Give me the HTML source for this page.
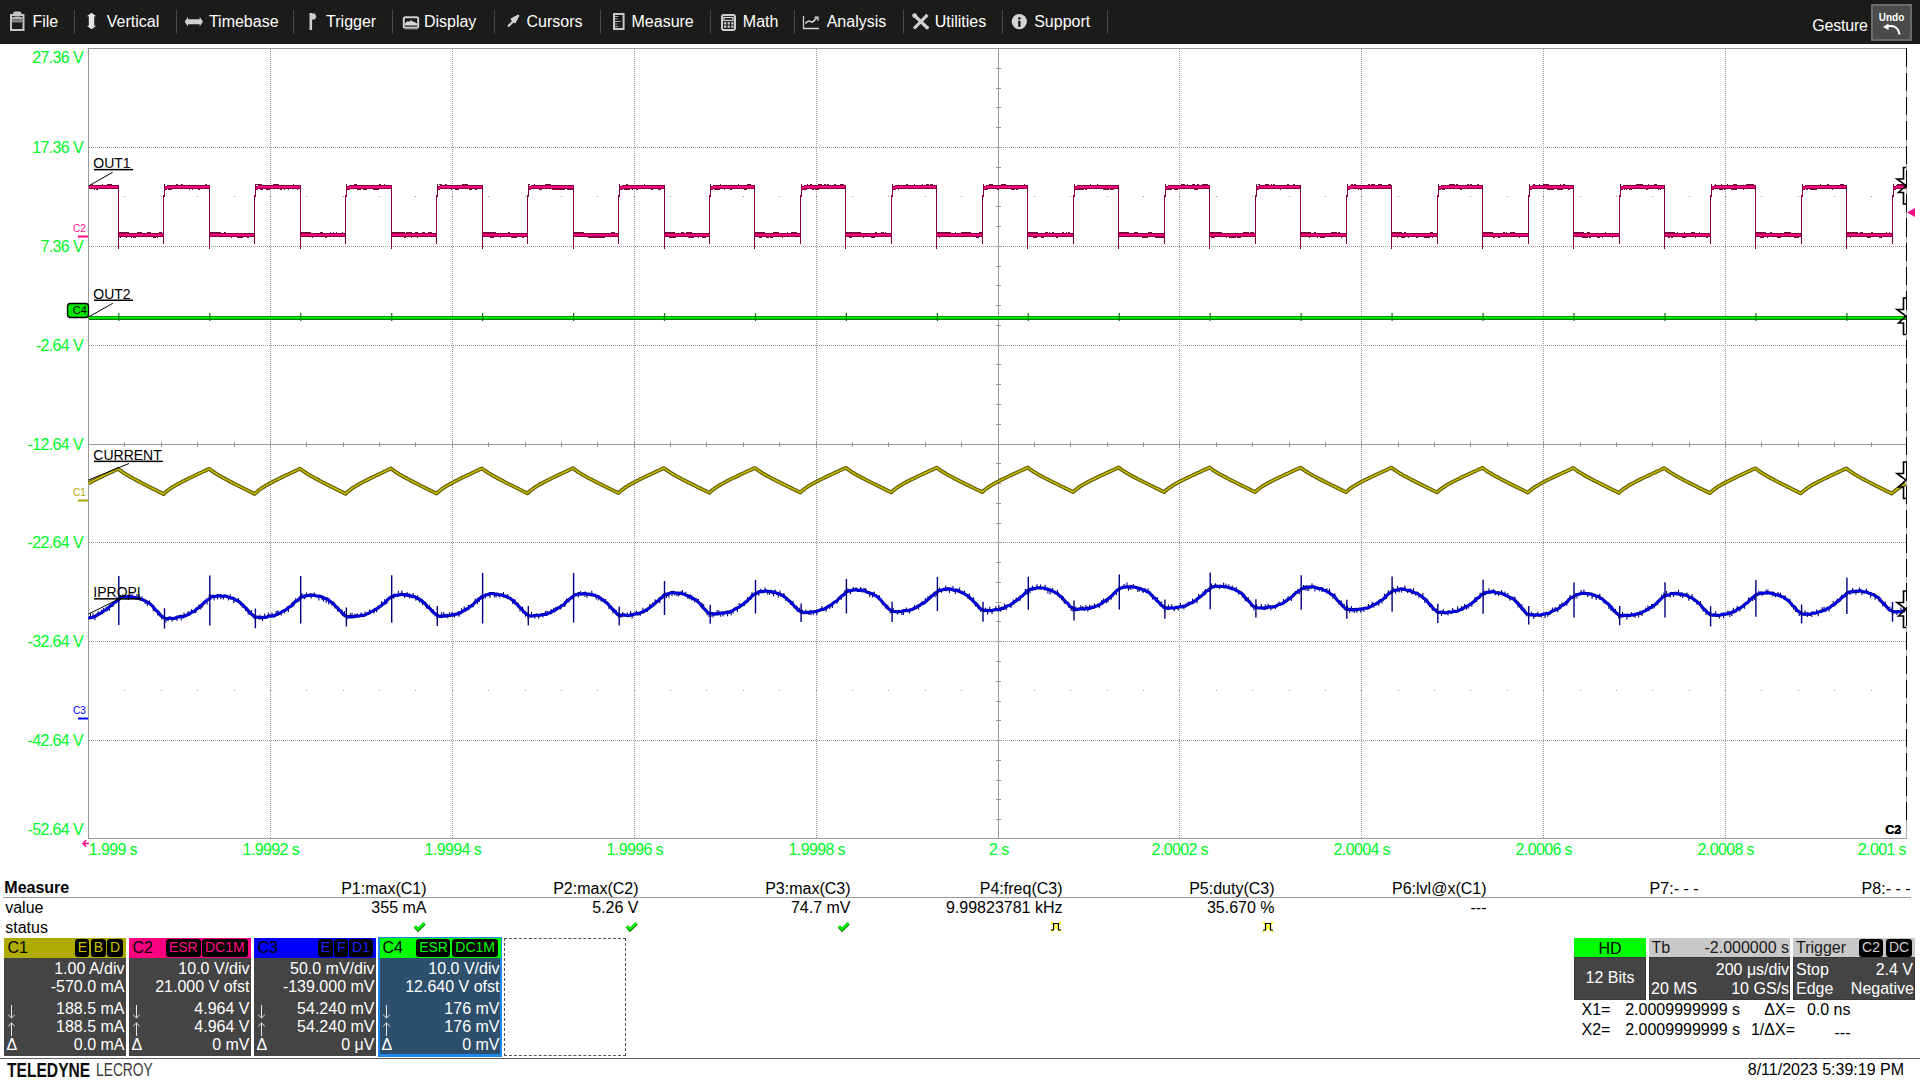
<!DOCTYPE html>
<html><head><meta charset="utf-8"><style>
html,body{margin:0;padding:0;}
body{width:1920px;height:1080px;position:relative;overflow:hidden;background:#fff;font-family:"Liberation Sans", sans-serif;}
.t{position:absolute;white-space:pre;line-height:1;}
svg{position:absolute;left:0;top:0;}
</style></head><body>
<div style="position:absolute;left:0px;top:0px;width:1920px;height:43px;background:#1b1b19;"></div>
<div style="position:absolute;left:0px;top:43px;width:1920px;height:1px;background:#0b1622;"></div>
<div style="position:absolute;left:74px;top:10px;width:1px;height:24px;background:#474747;"></div>
<div style="position:absolute;left:176px;top:10px;width:1px;height:24px;background:#474747;"></div>
<div style="position:absolute;left:293px;top:10px;width:1px;height:24px;background:#474747;"></div>
<div style="position:absolute;left:392px;top:10px;width:1px;height:24px;background:#474747;"></div>
<div style="position:absolute;left:494px;top:10px;width:1px;height:24px;background:#474747;"></div>
<div style="position:absolute;left:600px;top:10px;width:1px;height:24px;background:#474747;"></div>
<div style="position:absolute;left:710px;top:10px;width:1px;height:24px;background:#474747;"></div>
<div style="position:absolute;left:794px;top:10px;width:1px;height:24px;background:#474747;"></div>
<div style="position:absolute;left:903px;top:10px;width:1px;height:24px;background:#474747;"></div>
<div style="position:absolute;left:1002px;top:10px;width:1px;height:24px;background:#474747;"></div>
<div style="position:absolute;left:1107px;top:10px;width:1px;height:24px;background:#474747;"></div>
<div style="position:absolute;left:1871px;top:4px;width:41px;height:37px;background:#6b6b6b;"></div>
<div style="position:absolute;left:1873px;top:6px;width:37px;height:33px;background:#4b4b4b;"></div>
<div style="position:absolute;left:3px;top:897px;width:1908px;height:1px;background:#999999;"></div>
<div style="position:absolute;left:4px;top:938px;width:122px;height:20px;background:#b0ab00;"></div>
<div style="position:absolute;left:4px;top:958px;width:122px;height:98px;background:#444444;"></div>
<div style="position:absolute;left:75px;top:939px;width:14px;height:18px;background:#000;border-radius:3px;"></div>
<div style="position:absolute;left:91px;top:939px;width:15px;height:18px;background:#000;border-radius:3px;"></div>
<div style="position:absolute;left:107px;top:939px;width:16px;height:18px;background:#000;border-radius:3px;"></div>
<div style="position:absolute;left:129px;top:938px;width:122px;height:20px;background:#ff0080;"></div>
<div style="position:absolute;left:129px;top:958px;width:122px;height:98px;background:#444444;"></div>
<div style="position:absolute;left:166px;top:939px;width:35px;height:18px;background:#000;border-radius:3px;"></div>
<div style="position:absolute;left:202px;top:939px;width:46px;height:18px;background:#000;border-radius:3px;"></div>
<div style="position:absolute;left:254px;top:938px;width:122px;height:20px;background:#0000ff;"></div>
<div style="position:absolute;left:254px;top:958px;width:122px;height:98px;background:#444444;"></div>
<div style="position:absolute;left:318px;top:939px;width:15px;height:18px;background:#000;border-radius:3px;"></div>
<div style="position:absolute;left:334px;top:939px;width:14px;height:18px;background:#000;border-radius:3px;"></div>
<div style="position:absolute;left:349px;top:939px;width:24px;height:18px;background:#000;border-radius:3px;"></div>
<div style="position:absolute;left:378px;top:937px;width:124px;height:120px;background:#1e88f0;"></div>
<div style="position:absolute;left:380px;top:938px;width:121px;height:20px;background:#00ff00;"></div>
<div style="position:absolute;left:380px;top:958px;width:120px;height:96px;background:#2d4f6c;"></div>
<div style="position:absolute;left:416px;top:939px;width:34px;height:18px;background:#000;border-radius:3px;"></div>
<div style="position:absolute;left:452px;top:939px;width:46px;height:18px;background:#000;border-radius:3px;"></div>
<div style="position:absolute;left:504px;top:938px;width:122px;height:118px;background:transparent;box-sizing:border-box;border:1px dashed #555;"></div>
<div style="position:absolute;left:1574px;top:938px;width:72px;height:19px;background:#00ff00;"></div>
<div style="position:absolute;left:1574px;top:957px;width:72px;height:43px;background:#444444;box-shadow:inset 0 0 0 1px #383838;"></div>
<div style="position:absolute;left:1649px;top:938px;width:141px;height:19px;background:#c8c8c8;"></div>
<div style="position:absolute;left:1649px;top:957px;width:141px;height:43px;background:#444444;box-shadow:inset 0 0 0 1px #383838;"></div>
<div style="position:absolute;left:1793px;top:938px;width:122px;height:19px;background:#c8c8c8;"></div>
<div style="position:absolute;left:1793px;top:957px;width:122px;height:43px;background:#444444;box-shadow:inset 0 0 0 1px #383838;"></div>
<div style="position:absolute;left:1859px;top:939px;width:24px;height:18px;background:#000;border-radius:3px;"></div>
<div style="position:absolute;left:1886px;top:939px;width:26px;height:18px;background:#000;border-radius:3px;"></div>
<div style="position:absolute;left:0px;top:1058px;width:1920px;height:1px;background:#5e5e5e;"></div>
<svg width="1920" height="1080" viewBox="0 0 1920 1080">

<rect x="11" y="15" width="12.5" height="15" fill="none" stroke="#c4c4c4" stroke-width="2"/>
<rect x="13" y="11.5" width="8.5" height="5" rx="2.2" fill="#c4c4c4"/>
<rect x="12" y="17" width="10.5" height="2.5" fill="#b0b0b0"/>
<rect x="12" y="19.5" width="10.5" height="3" fill="#808080"/>
<path d="M91.5 12.8 L96.3 16.3 H94.2 V25.7 H96.3 L91.5 29.2 L86.8 25.7 H88.8 V16.3 H86.8 Z" fill="#e4e4e4"/>
<path d="M184.7 21.7 L188 16.8 V19.2 H199.7 V16.8 L203 21.7 L199.7 26.6 V24.2 H188 V26.6 Z" fill="#d0d0d0"/>
<rect x="309.5" y="13" width="2.6" height="17" fill="#d0d0d0"/>
<path d="M312 13.5 H315 L316.2 16.5 L315 19.5 H312 Z" fill="#d0d0d0"/>
<rect x="403.8" y="17.3" width="14.4" height="10.4" rx="1.5" fill="none" stroke="#d0d0d0" stroke-width="2"/>
<path d="M405 25.5 V23.5 L407 21.5 H409.5 L411 20.2 L412.5 21.5 L414.5 22 L417 23.5 V25.5 Z" fill="#d8d8d8"/>
<rect x="404" y="28.8" width="14" height="1" fill="#555"/>
<path d="M508 26.5 L513.5 21 L511.8 19.3 L518.2 15.7 L514.7 22.2 L513 20.5" fill="#d0d0d0" stroke="#d0d0d0" stroke-width="2.2" stroke-linejoin="round"/>
<rect x="614" y="14" width="9.6" height="15" fill="none" stroke="#c8c8c8" stroke-width="2"/>
<path d="M615 16.5 H618.5 M615 19 H617.5 M615 21.5 H620.5 M615 24 H617.5 M615 26.5 H618.5" stroke="#a8a8a8" stroke-width="1"/>
<rect x="722" y="15" width="13" height="15" rx="2" fill="none" stroke="#d0d0d0" stroke-width="2"/>
<rect x="724" y="17.5" width="9" height="3" fill="none" stroke="#d0d0d0" stroke-width="1.3"/>
<path d="M724 23.3 H726.3 M727.6 23.3 H729.9 M731.2 23.3 H733.5 M724 26.6 H726.3 M727.6 26.6 H729.9 M731.2 26.6 H733.5" stroke="#d0d0d0" stroke-width="2.2"/>
<path d="M803.5 16 V28.5 H819" fill="none" stroke="#d0d0d0" stroke-width="1.3"/>
<path d="M805.5 23.5 Q808 20 810.5 21.5 T815 19.5 L817.5 17.5" fill="none" stroke="#d0d0d0" stroke-width="1.6"/>
<path d="M814.5 17.2 H818 V20.7" fill="none" stroke="#d0d0d0" stroke-width="1.4"/>
<path d="M914 15 L928 28.5 M927.5 14.8 L914 28.5" stroke="#d0d0d0" stroke-width="3.2"/>
<circle cx="914.6" cy="15.6" r="2.4" fill="#d0d0d0"/>
<circle cx="927" cy="27.5" r="1.8" fill="#d0d0d0"/>
<circle cx="1019.3" cy="21.6" r="7.6" fill="#d4d4d4"/>
<rect x="1018.2" y="20.8" width="2.3" height="6" fill="#111"/>
<rect x="1018.2" y="17.3" width="2.3" height="2.2" fill="#111"/>
<path d="M1887 26.5 Q1897.5 24 1899.5 34.5" fill="none" stroke="#ffffff" stroke-width="2"/>
<path d="M1883 27 L1888.5 23.5 L1888.5 30 Z" fill="#ffffff"/>

<g shape-rendering="crispEdges"><rect x="88" y="48" width="1818" height="1" fill="#999999"/><rect x="88" y="838" width="1819" height="1" fill="#999999"/><rect x="88" y="48" width="1" height="791" fill="#999999"/><rect x="1906" y="48" width="1" height="791" fill="#aaaaaa"/><path d="M1906.5 48.3 V822" stroke="#000" stroke-width="1" stroke-dasharray="18.3 6"/><path d="M270.5 49 V838" stroke="#999999" stroke-width="1" stroke-dasharray="1 1"/><path d="M452.5 49 V838" stroke="#999999" stroke-width="1" stroke-dasharray="1 1"/><path d="M634.5 49 V838" stroke="#999999" stroke-width="1" stroke-dasharray="1 1"/><path d="M816.5 49 V838" stroke="#999999" stroke-width="1" stroke-dasharray="1 1"/><rect x="998" y="48" width="1" height="790" fill="#999999"/><path d="M1179.5 49 V838" stroke="#999999" stroke-width="1" stroke-dasharray="1 1"/><path d="M1361.5 49 V838" stroke="#999999" stroke-width="1" stroke-dasharray="1 1"/><path d="M1543.5 49 V838" stroke="#999999" stroke-width="1" stroke-dasharray="1 1"/><path d="M1725.5 49 V838" stroke="#999999" stroke-width="1" stroke-dasharray="1 1"/><path d="M89 147.5 H1906" stroke="#999999" stroke-width="1" stroke-dasharray="1 1"/><path d="M89 246.5 H1906" stroke="#999999" stroke-width="1" stroke-dasharray="1 1"/><path d="M89 345.5 H1906" stroke="#999999" stroke-width="1" stroke-dasharray="1 1"/><rect x="88" y="444" width="1818" height="1" fill="#999999"/><path d="M89 542.5 H1906" stroke="#999999" stroke-width="1" stroke-dasharray="1 1"/><path d="M89 641.5 H1906" stroke="#999999" stroke-width="1" stroke-dasharray="1 1"/><path d="M89 740.5 H1906" stroke="#999999" stroke-width="1" stroke-dasharray="1 1"/><path d="M124.5 442 V447 M161.5 442 V447 M197.5 442 V447 M234.5 442 V447 M270.5 442 V447 M306.5 442 V447 M343.5 442 V447 M379.5 442 V447 M415.5 442 V447 M452.5 442 V447 M488.5 442 V447 M525.5 442 V447 M561.5 442 V447 M597.5 442 V447 M634.5 442 V447 M670.5 442 V447 M706.5 442 V447 M743.5 442 V447 M779.5 442 V447 M816.5 442 V447 M852.5 442 V447 M888.5 442 V447 M925.5 442 V447 M961.5 442 V447 M998.5 442 V447 M1034.5 442 V447 M1070.5 442 V447 M1107.5 442 V447 M1143.5 442 V447 M1179.5 442 V447 M1216.5 442 V447 M1252.5 442 V447 M1289.5 442 V447 M1325.5 442 V447 M1361.5 442 V447 M1398.5 442 V447 M1434.5 442 V447 M1470.5 442 V447 M1507.5 442 V447 M1543.5 442 V447 M1580.5 442 V447 M1616.5 442 V447 M1652.5 442 V447 M1689.5 442 V447 M1725.5 442 V447 M1761.5 442 V447 M1798.5 442 V447 M1834.5 442 V447 M1871.5 442 V447 M996 68.5 H1001 M996 88.5 H1001 M996 107.5 H1001 M996 127.5 H1001 M996 147.5 H1001 M996 167.5 H1001 M996 186.5 H1001 M996 206.5 H1001 M996 226.5 H1001 M996 246.5 H1001 M996 266.5 H1001 M996 285.5 H1001 M996 305.5 H1001 M996 325.5 H1001 M996 345.5 H1001 M996 364.5 H1001 M996 384.5 H1001 M996 404.5 H1001 M996 424.5 H1001 M996 444.5 H1001 M996 463.5 H1001 M996 483.5 H1001 M996 503.5 H1001 M996 523.5 H1001 M996 542.5 H1001 M996 562.5 H1001 M996 582.5 H1001 M996 602.5 H1001 M996 621.5 H1001 M996 641.5 H1001 M996 661.5 H1001 M996 681.5 H1001 M996 701.5 H1001 M996 720.5 H1001 M996 740.5 H1001 M996 760.5 H1001 M996 780.5 H1001 M996 799.5 H1001 M996 819.5 H1001" stroke="#999999" stroke-width="1"/><path d="M124 196h1v1h-1z M161 196h1v1h-1z M197 196h1v1h-1z M234 196h1v1h-1z M270 196h1v1h-1z M306 196h1v1h-1z M343 196h1v1h-1z M379 196h1v1h-1z M415 196h1v1h-1z M452 196h1v1h-1z M488 196h1v1h-1z M525 196h1v1h-1z M561 196h1v1h-1z M597 196h1v1h-1z M634 196h1v1h-1z M670 196h1v1h-1z M706 196h1v1h-1z M743 196h1v1h-1z M779 196h1v1h-1z M816 196h1v1h-1z M852 196h1v1h-1z M888 196h1v1h-1z M925 196h1v1h-1z M961 196h1v1h-1z M998 196h1v1h-1z M1034 196h1v1h-1z M1070 196h1v1h-1z M1107 196h1v1h-1z M1143 196h1v1h-1z M1179 196h1v1h-1z M1216 196h1v1h-1z M1252 196h1v1h-1z M1289 196h1v1h-1z M1325 196h1v1h-1z M1361 196h1v1h-1z M1398 196h1v1h-1z M1434 196h1v1h-1z M1470 196h1v1h-1z M1507 196h1v1h-1z M1543 196h1v1h-1z M1580 196h1v1h-1z M1616 196h1v1h-1z M1652 196h1v1h-1z M1689 196h1v1h-1z M1725 196h1v1h-1z M1761 196h1v1h-1z M1798 196h1v1h-1z M1834 196h1v1h-1z M1871 196h1v1h-1z M124 690h1v1h-1z M161 690h1v1h-1z M197 690h1v1h-1z M234 690h1v1h-1z M270 690h1v1h-1z M306 690h1v1h-1z M343 690h1v1h-1z M379 690h1v1h-1z M415 690h1v1h-1z M452 690h1v1h-1z M488 690h1v1h-1z M525 690h1v1h-1z M561 690h1v1h-1z M597 690h1v1h-1z M634 690h1v1h-1z M670 690h1v1h-1z M706 690h1v1h-1z M743 690h1v1h-1z M779 690h1v1h-1z M816 690h1v1h-1z M852 690h1v1h-1z M888 690h1v1h-1z M925 690h1v1h-1z M961 690h1v1h-1z M998 690h1v1h-1z M1034 690h1v1h-1z M1070 690h1v1h-1z M1107 690h1v1h-1z M1143 690h1v1h-1z M1179 690h1v1h-1z M1216 690h1v1h-1z M1252 690h1v1h-1z M1289 690h1v1h-1z M1325 690h1v1h-1z M1361 690h1v1h-1z M1398 690h1v1h-1z M1434 690h1v1h-1z M1470 690h1v1h-1z M1507 690h1v1h-1z M1543 690h1v1h-1z M1580 690h1v1h-1z M1616 690h1v1h-1z M1652 690h1v1h-1z M1689 690h1v1h-1z M1725 690h1v1h-1z M1761 690h1v1h-1z M1798 690h1v1h-1z M1834 690h1v1h-1z M1871 690h1v1h-1z" fill="#999999"/></g>
<g shape-rendering="crispEdges"><rect x="89" y="185" width="29" height="1" fill="#82003e"/><rect x="89" y="186" width="29" height="2" fill="#ff0080"/><rect x="89" y="188" width="29" height="1" fill="#82003e"/><rect x="92" y="184" width="1" height="1" fill="#82003e"/><rect x="94" y="189" width="1" height="1" fill="#82003e"/><rect x="96" y="189" width="2" height="1" fill="#82003e"/><rect x="102" y="184" width="1" height="1" fill="#82003e"/><rect x="107" y="184" width="2" height="1" fill="#82003e"/><rect x="109" y="184" width="3" height="1" fill="#82003e"/><rect x="119" y="232" width="10" height="1" fill="#82003e"/><rect x="119" y="233" width="44" height="1" fill="#82003e"/><rect x="119" y="234" width="44" height="1" fill="#ff0080"/><rect x="119" y="235" width="44" height="1" fill="#f2007a"/><rect x="119" y="236" width="44" height="1" fill="#82003e"/><rect x="120" y="237" width="1" height="1" fill="#82003e"/><rect x="126" y="237" width="1" height="1" fill="#82003e"/><rect x="131" y="237" width="1" height="1" fill="#82003e"/><rect x="133" y="237" width="3" height="1" fill="#82003e"/><rect x="137" y="232" width="2" height="1" fill="#82003e"/><rect x="139" y="232" width="3" height="1" fill="#82003e"/><rect x="147" y="232" width="4" height="1" fill="#82003e"/><rect x="153" y="237" width="3" height="1" fill="#82003e"/><rect x="157" y="237" width="1" height="1" fill="#82003e"/><rect x="159" y="232" width="3" height="1" fill="#82003e"/><rect x="164" y="186" width="3" height="4" fill="#82003e"/><rect x="164" y="187" width="3" height="2" fill="#ff0080"/><rect x="167" y="185" width="5" height="4" fill="#82003e"/><rect x="167" y="186" width="5" height="2" fill="#ff0080"/><rect x="167" y="188" width="5" height="1" fill="#82003e"/><rect x="172" y="185" width="37" height="1" fill="#82003e"/><rect x="172" y="186" width="37" height="2" fill="#ff0080"/><rect x="172" y="188" width="37" height="1" fill="#82003e"/><rect x="168" y="189" width="4" height="1" fill="#82003e"/><rect x="176" y="184" width="2" height="1" fill="#82003e"/><rect x="181" y="184" width="2" height="1" fill="#82003e"/><rect x="189" y="189" width="1" height="1" fill="#82003e"/><rect x="192" y="189" width="1" height="1" fill="#82003e"/><rect x="198" y="189" width="2" height="1" fill="#82003e"/><rect x="205" y="184" width="2" height="1" fill="#82003e"/><rect x="210" y="232" width="10" height="1" fill="#82003e"/><rect x="210" y="233" width="44" height="1" fill="#82003e"/><rect x="210" y="234" width="44" height="1" fill="#ff0080"/><rect x="210" y="235" width="44" height="1" fill="#f2007a"/><rect x="210" y="236" width="44" height="1" fill="#82003e"/><rect x="211" y="232" width="3" height="1" fill="#82003e"/><rect x="219" y="232" width="2" height="1" fill="#82003e"/><rect x="224" y="232" width="2" height="1" fill="#82003e"/><rect x="231" y="237" width="1" height="1" fill="#82003e"/><rect x="237" y="237" width="6" height="1" fill="#82003e"/><rect x="241" y="237" width="2" height="1" fill="#82003e"/><rect x="247" y="237" width="2" height="1" fill="#82003e"/><rect x="255" y="186" width="3" height="4" fill="#82003e"/><rect x="255" y="187" width="3" height="2" fill="#ff0080"/><rect x="258" y="185" width="5" height="4" fill="#82003e"/><rect x="258" y="186" width="5" height="2" fill="#ff0080"/><rect x="258" y="188" width="5" height="1" fill="#82003e"/><rect x="263" y="185" width="37" height="1" fill="#82003e"/><rect x="263" y="186" width="37" height="2" fill="#ff0080"/><rect x="263" y="188" width="37" height="1" fill="#82003e"/><rect x="256" y="184" width="6" height="1" fill="#82003e"/><rect x="260" y="189" width="2" height="1" fill="#82003e"/><rect x="262" y="189" width="1" height="1" fill="#82003e"/><rect x="266" y="189" width="4" height="1" fill="#82003e"/><rect x="273" y="184" width="6" height="1" fill="#82003e"/><rect x="280" y="189" width="2" height="1" fill="#82003e"/><rect x="284" y="189" width="1" height="1" fill="#82003e"/><rect x="288" y="189" width="1" height="1" fill="#82003e"/><rect x="293" y="184" width="1" height="1" fill="#82003e"/><rect x="297" y="189" width="1" height="1" fill="#82003e"/><rect x="301" y="232" width="10" height="1" fill="#82003e"/><rect x="301" y="233" width="44" height="1" fill="#82003e"/><rect x="301" y="234" width="44" height="1" fill="#ff0080"/><rect x="301" y="235" width="44" height="1" fill="#f2007a"/><rect x="301" y="236" width="44" height="1" fill="#82003e"/><rect x="305" y="232" width="6" height="1" fill="#82003e"/><rect x="308" y="232" width="2" height="1" fill="#82003e"/><rect x="312" y="237" width="1" height="1" fill="#82003e"/><rect x="320" y="232" width="3" height="1" fill="#82003e"/><rect x="325" y="237" width="2" height="1" fill="#82003e"/><rect x="330" y="232" width="1" height="1" fill="#82003e"/><rect x="333" y="232" width="1" height="1" fill="#82003e"/><rect x="336" y="232" width="1" height="1" fill="#82003e"/><rect x="342" y="232" width="1" height="1" fill="#82003e"/><rect x="346" y="186" width="3" height="4" fill="#82003e"/><rect x="346" y="187" width="3" height="2" fill="#ff0080"/><rect x="349" y="185" width="5" height="4" fill="#82003e"/><rect x="349" y="186" width="5" height="2" fill="#ff0080"/><rect x="349" y="188" width="5" height="1" fill="#82003e"/><rect x="354" y="185" width="37" height="1" fill="#82003e"/><rect x="354" y="186" width="37" height="2" fill="#ff0080"/><rect x="354" y="188" width="37" height="1" fill="#82003e"/><rect x="348" y="189" width="2" height="1" fill="#82003e"/><rect x="354" y="184" width="3" height="1" fill="#82003e"/><rect x="357" y="189" width="4" height="1" fill="#82003e"/><rect x="363" y="189" width="4" height="1" fill="#82003e"/><rect x="365" y="189" width="2" height="1" fill="#82003e"/><rect x="373" y="189" width="6" height="1" fill="#82003e"/><rect x="379" y="184" width="2" height="1" fill="#82003e"/><rect x="384" y="184" width="1" height="1" fill="#82003e"/><rect x="392" y="232" width="10" height="1" fill="#82003e"/><rect x="392" y="233" width="44" height="1" fill="#82003e"/><rect x="392" y="234" width="44" height="1" fill="#ff0080"/><rect x="392" y="235" width="44" height="1" fill="#f2007a"/><rect x="392" y="236" width="44" height="1" fill="#82003e"/><rect x="393" y="232" width="1" height="1" fill="#82003e"/><rect x="396" y="232" width="2" height="1" fill="#82003e"/><rect x="400" y="232" width="3" height="1" fill="#82003e"/><rect x="402" y="232" width="3" height="1" fill="#82003e"/><rect x="404" y="237" width="2" height="1" fill="#82003e"/><rect x="406" y="232" width="6" height="1" fill="#82003e"/><rect x="411" y="237" width="1" height="1" fill="#82003e"/><rect x="415" y="232" width="3" height="1" fill="#82003e"/><rect x="417" y="237" width="1" height="1" fill="#82003e"/><rect x="422" y="232" width="2" height="1" fill="#82003e"/><rect x="424" y="232" width="1" height="1" fill="#82003e"/><rect x="428" y="232" width="4" height="1" fill="#82003e"/><rect x="437" y="186" width="3" height="4" fill="#82003e"/><rect x="437" y="187" width="3" height="2" fill="#ff0080"/><rect x="440" y="185" width="5" height="4" fill="#82003e"/><rect x="440" y="186" width="5" height="2" fill="#ff0080"/><rect x="440" y="188" width="5" height="1" fill="#82003e"/><rect x="445" y="185" width="37" height="1" fill="#82003e"/><rect x="445" y="186" width="37" height="2" fill="#ff0080"/><rect x="445" y="188" width="37" height="1" fill="#82003e"/><rect x="439" y="184" width="3" height="1" fill="#82003e"/><rect x="445" y="184" width="2" height="1" fill="#82003e"/><rect x="451" y="189" width="1" height="1" fill="#82003e"/><rect x="455" y="189" width="4" height="1" fill="#82003e"/><rect x="462" y="184" width="6" height="1" fill="#82003e"/><rect x="466" y="184" width="1" height="1" fill="#82003e"/><rect x="469" y="189" width="3" height="1" fill="#82003e"/><rect x="475" y="189" width="2" height="1" fill="#82003e"/><rect x="483" y="232" width="10" height="1" fill="#82003e"/><rect x="483" y="233" width="44" height="1" fill="#82003e"/><rect x="483" y="234" width="44" height="1" fill="#ff0080"/><rect x="483" y="235" width="44" height="1" fill="#f2007a"/><rect x="483" y="236" width="44" height="1" fill="#82003e"/><rect x="485" y="232" width="6" height="1" fill="#82003e"/><rect x="490" y="237" width="4" height="1" fill="#82003e"/><rect x="493" y="232" width="3" height="1" fill="#82003e"/><rect x="500" y="237" width="1" height="1" fill="#82003e"/><rect x="508" y="232" width="2" height="1" fill="#82003e"/><rect x="511" y="237" width="4" height="1" fill="#82003e"/><rect x="515" y="237" width="2" height="1" fill="#82003e"/><rect x="522" y="237" width="2" height="1" fill="#82003e"/><rect x="528" y="186" width="3" height="4" fill="#82003e"/><rect x="528" y="187" width="3" height="2" fill="#ff0080"/><rect x="531" y="185" width="5" height="4" fill="#82003e"/><rect x="531" y="186" width="5" height="2" fill="#ff0080"/><rect x="531" y="188" width="5" height="1" fill="#82003e"/><rect x="536" y="185" width="37" height="1" fill="#82003e"/><rect x="536" y="186" width="37" height="2" fill="#ff0080"/><rect x="536" y="188" width="37" height="1" fill="#82003e"/><rect x="529" y="184" width="1" height="1" fill="#82003e"/><rect x="534" y="184" width="1" height="1" fill="#82003e"/><rect x="539" y="189" width="3" height="1" fill="#82003e"/><rect x="545" y="184" width="6" height="1" fill="#82003e"/><rect x="552" y="189" width="2" height="1" fill="#82003e"/><rect x="554" y="189" width="6" height="1" fill="#82003e"/><rect x="559" y="189" width="6" height="1" fill="#82003e"/><rect x="562" y="189" width="2" height="1" fill="#82003e"/><rect x="567" y="189" width="6" height="1" fill="#82003e"/><rect x="569" y="189" width="4" height="1" fill="#82003e"/><rect x="574" y="232" width="10" height="1" fill="#82003e"/><rect x="574" y="233" width="44" height="1" fill="#82003e"/><rect x="574" y="234" width="44" height="1" fill="#ff0080"/><rect x="574" y="235" width="44" height="1" fill="#f2007a"/><rect x="574" y="236" width="44" height="1" fill="#82003e"/><rect x="578" y="232" width="2" height="1" fill="#82003e"/><rect x="580" y="232" width="4" height="1" fill="#82003e"/><rect x="583" y="232" width="1" height="1" fill="#82003e"/><rect x="588" y="237" width="6" height="1" fill="#82003e"/><rect x="594" y="237" width="6" height="1" fill="#82003e"/><rect x="599" y="237" width="4" height="1" fill="#82003e"/><rect x="602" y="237" width="3" height="1" fill="#82003e"/><rect x="604" y="237" width="1" height="1" fill="#82003e"/><rect x="611" y="232" width="4" height="1" fill="#82003e"/><rect x="619" y="186" width="3" height="4" fill="#82003e"/><rect x="619" y="187" width="3" height="2" fill="#ff0080"/><rect x="622" y="185" width="5" height="4" fill="#82003e"/><rect x="622" y="186" width="5" height="2" fill="#ff0080"/><rect x="622" y="188" width="5" height="1" fill="#82003e"/><rect x="627" y="185" width="37" height="1" fill="#82003e"/><rect x="627" y="186" width="37" height="2" fill="#ff0080"/><rect x="627" y="188" width="37" height="1" fill="#82003e"/><rect x="621" y="189" width="2" height="1" fill="#82003e"/><rect x="624" y="189" width="6" height="1" fill="#82003e"/><rect x="626" y="184" width="2" height="1" fill="#82003e"/><rect x="632" y="189" width="1" height="1" fill="#82003e"/><rect x="636" y="189" width="2" height="1" fill="#82003e"/><rect x="644" y="184" width="1" height="1" fill="#82003e"/><rect x="651" y="189" width="2" height="1" fill="#82003e"/><rect x="658" y="189" width="3" height="1" fill="#82003e"/><rect x="665" y="232" width="10" height="1" fill="#82003e"/><rect x="665" y="233" width="44" height="1" fill="#82003e"/><rect x="665" y="234" width="44" height="1" fill="#ff0080"/><rect x="665" y="235" width="44" height="1" fill="#f2007a"/><rect x="665" y="236" width="44" height="1" fill="#82003e"/><rect x="669" y="237" width="6" height="1" fill="#82003e"/><rect x="675" y="237" width="1" height="1" fill="#82003e"/><rect x="681" y="232" width="3" height="1" fill="#82003e"/><rect x="686" y="232" width="6" height="1" fill="#82003e"/><rect x="688" y="237" width="6" height="1" fill="#82003e"/><rect x="691" y="232" width="1" height="1" fill="#82003e"/><rect x="698" y="237" width="1" height="1" fill="#82003e"/><rect x="702" y="237" width="4" height="1" fill="#82003e"/><rect x="710" y="186" width="3" height="4" fill="#82003e"/><rect x="710" y="187" width="3" height="2" fill="#ff0080"/><rect x="713" y="185" width="5" height="4" fill="#82003e"/><rect x="713" y="186" width="5" height="2" fill="#ff0080"/><rect x="713" y="188" width="5" height="1" fill="#82003e"/><rect x="718" y="185" width="36" height="1" fill="#82003e"/><rect x="718" y="186" width="36" height="2" fill="#ff0080"/><rect x="718" y="188" width="36" height="1" fill="#82003e"/><rect x="714" y="189" width="6" height="1" fill="#82003e"/><rect x="720" y="184" width="1" height="1" fill="#82003e"/><rect x="724" y="189" width="1" height="1" fill="#82003e"/><rect x="730" y="189" width="2" height="1" fill="#82003e"/><rect x="738" y="184" width="1" height="1" fill="#82003e"/><rect x="744" y="189" width="3" height="1" fill="#82003e"/><rect x="747" y="184" width="4" height="1" fill="#82003e"/><rect x="755" y="232" width="10" height="1" fill="#82003e"/><rect x="755" y="233" width="45" height="1" fill="#82003e"/><rect x="755" y="234" width="45" height="1" fill="#ff0080"/><rect x="755" y="235" width="45" height="1" fill="#f2007a"/><rect x="755" y="236" width="45" height="1" fill="#82003e"/><rect x="759" y="237" width="3" height="1" fill="#82003e"/><rect x="766" y="237" width="3" height="1" fill="#82003e"/><rect x="770" y="237" width="3" height="1" fill="#82003e"/><rect x="773" y="232" width="6" height="1" fill="#82003e"/><rect x="778" y="232" width="1" height="1" fill="#82003e"/><rect x="782" y="237" width="1" height="1" fill="#82003e"/><rect x="787" y="232" width="1" height="1" fill="#82003e"/><rect x="791" y="232" width="6" height="1" fill="#82003e"/><rect x="801" y="186" width="3" height="4" fill="#82003e"/><rect x="801" y="187" width="3" height="2" fill="#ff0080"/><rect x="804" y="185" width="5" height="4" fill="#82003e"/><rect x="804" y="186" width="5" height="2" fill="#ff0080"/><rect x="804" y="188" width="5" height="1" fill="#82003e"/><rect x="809" y="185" width="36" height="1" fill="#82003e"/><rect x="809" y="186" width="36" height="2" fill="#ff0080"/><rect x="809" y="188" width="36" height="1" fill="#82003e"/><rect x="803" y="189" width="4" height="1" fill="#82003e"/><rect x="807" y="184" width="1" height="1" fill="#82003e"/><rect x="810" y="184" width="2" height="1" fill="#82003e"/><rect x="812" y="189" width="2" height="1" fill="#82003e"/><rect x="815" y="189" width="4" height="1" fill="#82003e"/><rect x="818" y="184" width="4" height="1" fill="#82003e"/><rect x="824" y="184" width="2" height="1" fill="#82003e"/><rect x="827" y="184" width="2" height="1" fill="#82003e"/><rect x="834" y="184" width="2" height="1" fill="#82003e"/><rect x="840" y="184" width="2" height="1" fill="#82003e"/><rect x="842" y="184" width="2" height="1" fill="#82003e"/><rect x="846" y="232" width="10" height="1" fill="#82003e"/><rect x="846" y="233" width="45" height="1" fill="#82003e"/><rect x="846" y="234" width="45" height="1" fill="#ff0080"/><rect x="846" y="235" width="45" height="1" fill="#f2007a"/><rect x="846" y="236" width="45" height="1" fill="#82003e"/><rect x="849" y="237" width="3" height="1" fill="#82003e"/><rect x="851" y="232" width="6" height="1" fill="#82003e"/><rect x="853" y="232" width="1" height="1" fill="#82003e"/><rect x="855" y="232" width="6" height="1" fill="#82003e"/><rect x="863" y="237" width="1" height="1" fill="#82003e"/><rect x="871" y="237" width="4" height="1" fill="#82003e"/><rect x="875" y="232" width="2" height="1" fill="#82003e"/><rect x="881" y="232" width="3" height="1" fill="#82003e"/><rect x="885" y="232" width="1" height="1" fill="#82003e"/><rect x="892" y="186" width="3" height="4" fill="#82003e"/><rect x="892" y="187" width="3" height="2" fill="#ff0080"/><rect x="895" y="185" width="5" height="4" fill="#82003e"/><rect x="895" y="186" width="5" height="2" fill="#ff0080"/><rect x="895" y="188" width="5" height="1" fill="#82003e"/><rect x="900" y="185" width="36" height="1" fill="#82003e"/><rect x="900" y="186" width="36" height="2" fill="#ff0080"/><rect x="900" y="188" width="36" height="1" fill="#82003e"/><rect x="894" y="189" width="2" height="1" fill="#82003e"/><rect x="898" y="189" width="1" height="1" fill="#82003e"/><rect x="906" y="184" width="2" height="1" fill="#82003e"/><rect x="914" y="184" width="1" height="1" fill="#82003e"/><rect x="922" y="184" width="1" height="1" fill="#82003e"/><rect x="926" y="184" width="3" height="1" fill="#82003e"/><rect x="930" y="184" width="3" height="1" fill="#82003e"/><rect x="937" y="232" width="10" height="1" fill="#82003e"/><rect x="937" y="233" width="45" height="1" fill="#82003e"/><rect x="937" y="234" width="45" height="1" fill="#ff0080"/><rect x="937" y="235" width="45" height="1" fill="#f2007a"/><rect x="937" y="236" width="45" height="1" fill="#82003e"/><rect x="939" y="237" width="1" height="1" fill="#82003e"/><rect x="943" y="232" width="1" height="1" fill="#82003e"/><rect x="947" y="232" width="4" height="1" fill="#82003e"/><rect x="955" y="232" width="1" height="1" fill="#82003e"/><rect x="961" y="232" width="4" height="1" fill="#82003e"/><rect x="965" y="232" width="6" height="1" fill="#82003e"/><rect x="969" y="232" width="1" height="1" fill="#82003e"/><rect x="976" y="237" width="3" height="1" fill="#82003e"/><rect x="979" y="232" width="3" height="1" fill="#82003e"/><rect x="983" y="186" width="3" height="4" fill="#82003e"/><rect x="983" y="187" width="3" height="2" fill="#ff0080"/><rect x="986" y="185" width="5" height="4" fill="#82003e"/><rect x="986" y="186" width="5" height="2" fill="#ff0080"/><rect x="986" y="188" width="5" height="1" fill="#82003e"/><rect x="991" y="185" width="36" height="1" fill="#82003e"/><rect x="991" y="186" width="36" height="2" fill="#ff0080"/><rect x="991" y="188" width="36" height="1" fill="#82003e"/><rect x="984" y="189" width="4" height="1" fill="#82003e"/><rect x="989" y="184" width="4" height="1" fill="#82003e"/><rect x="997" y="189" width="2" height="1" fill="#82003e"/><rect x="1001" y="184" width="4" height="1" fill="#82003e"/><rect x="1004" y="184" width="2" height="1" fill="#82003e"/><rect x="1011" y="189" width="4" height="1" fill="#82003e"/><rect x="1016" y="189" width="2" height="1" fill="#82003e"/><rect x="1024" y="184" width="1" height="1" fill="#82003e"/><rect x="1028" y="232" width="10" height="1" fill="#82003e"/><rect x="1028" y="233" width="45" height="1" fill="#82003e"/><rect x="1028" y="234" width="45" height="1" fill="#ff0080"/><rect x="1028" y="235" width="45" height="1" fill="#f2007a"/><rect x="1028" y="236" width="45" height="1" fill="#82003e"/><rect x="1031" y="232" width="2" height="1" fill="#82003e"/><rect x="1033" y="237" width="4" height="1" fill="#82003e"/><rect x="1041" y="237" width="3" height="1" fill="#82003e"/><rect x="1045" y="232" width="3" height="1" fill="#82003e"/><rect x="1049" y="232" width="1" height="1" fill="#82003e"/><rect x="1052" y="232" width="2" height="1" fill="#82003e"/><rect x="1056" y="237" width="2" height="1" fill="#82003e"/><rect x="1062" y="232" width="2" height="1" fill="#82003e"/><rect x="1066" y="232" width="1" height="1" fill="#82003e"/><rect x="1068" y="232" width="2" height="1" fill="#82003e"/><rect x="1074" y="186" width="3" height="4" fill="#82003e"/><rect x="1074" y="187" width="3" height="2" fill="#ff0080"/><rect x="1077" y="185" width="5" height="4" fill="#82003e"/><rect x="1077" y="186" width="5" height="2" fill="#ff0080"/><rect x="1077" y="188" width="5" height="1" fill="#82003e"/><rect x="1082" y="185" width="36" height="1" fill="#82003e"/><rect x="1082" y="186" width="36" height="2" fill="#ff0080"/><rect x="1082" y="188" width="36" height="1" fill="#82003e"/><rect x="1077" y="189" width="3" height="1" fill="#82003e"/><rect x="1080" y="189" width="3" height="1" fill="#82003e"/><rect x="1082" y="189" width="2" height="1" fill="#82003e"/><rect x="1085" y="189" width="2" height="1" fill="#82003e"/><rect x="1090" y="184" width="1" height="1" fill="#82003e"/><rect x="1097" y="184" width="1" height="1" fill="#82003e"/><rect x="1103" y="189" width="6" height="1" fill="#82003e"/><rect x="1110" y="189" width="4" height="1" fill="#82003e"/><rect x="1119" y="232" width="10" height="1" fill="#82003e"/><rect x="1119" y="233" width="45" height="1" fill="#82003e"/><rect x="1119" y="234" width="45" height="1" fill="#ff0080"/><rect x="1119" y="235" width="45" height="1" fill="#f2007a"/><rect x="1119" y="236" width="45" height="1" fill="#82003e"/><rect x="1123" y="232" width="6" height="1" fill="#82003e"/><rect x="1128" y="232" width="1" height="1" fill="#82003e"/><rect x="1134" y="232" width="4" height="1" fill="#82003e"/><rect x="1142" y="237" width="6" height="1" fill="#82003e"/><rect x="1148" y="232" width="4" height="1" fill="#82003e"/><rect x="1155" y="237" width="6" height="1" fill="#82003e"/><rect x="1161" y="237" width="3" height="1" fill="#82003e"/><rect x="1165" y="186" width="3" height="4" fill="#82003e"/><rect x="1165" y="187" width="3" height="2" fill="#ff0080"/><rect x="1168" y="185" width="5" height="4" fill="#82003e"/><rect x="1168" y="186" width="5" height="2" fill="#ff0080"/><rect x="1168" y="188" width="5" height="1" fill="#82003e"/><rect x="1173" y="185" width="36" height="1" fill="#82003e"/><rect x="1173" y="186" width="36" height="2" fill="#ff0080"/><rect x="1173" y="188" width="36" height="1" fill="#82003e"/><rect x="1166" y="189" width="6" height="1" fill="#82003e"/><rect x="1174" y="189" width="4" height="1" fill="#82003e"/><rect x="1181" y="184" width="4" height="1" fill="#82003e"/><rect x="1183" y="184" width="1" height="1" fill="#82003e"/><rect x="1187" y="184" width="1" height="1" fill="#82003e"/><rect x="1192" y="184" width="3" height="1" fill="#82003e"/><rect x="1194" y="189" width="4" height="1" fill="#82003e"/><rect x="1197" y="184" width="2" height="1" fill="#82003e"/><rect x="1202" y="184" width="6" height="1" fill="#82003e"/><rect x="1210" y="232" width="10" height="1" fill="#82003e"/><rect x="1210" y="233" width="45" height="1" fill="#82003e"/><rect x="1210" y="234" width="45" height="1" fill="#ff0080"/><rect x="1210" y="235" width="45" height="1" fill="#f2007a"/><rect x="1210" y="236" width="45" height="1" fill="#82003e"/><rect x="1211" y="237" width="4" height="1" fill="#82003e"/><rect x="1218" y="232" width="4" height="1" fill="#82003e"/><rect x="1226" y="237" width="1" height="1" fill="#82003e"/><rect x="1229" y="237" width="4" height="1" fill="#82003e"/><rect x="1232" y="237" width="4" height="1" fill="#82003e"/><rect x="1237" y="237" width="2" height="1" fill="#82003e"/><rect x="1239" y="237" width="2" height="1" fill="#82003e"/><rect x="1243" y="232" width="6" height="1" fill="#82003e"/><rect x="1250" y="232" width="4" height="1" fill="#82003e"/><rect x="1256" y="186" width="3" height="4" fill="#82003e"/><rect x="1256" y="187" width="3" height="2" fill="#ff0080"/><rect x="1259" y="185" width="5" height="4" fill="#82003e"/><rect x="1259" y="186" width="5" height="2" fill="#ff0080"/><rect x="1259" y="188" width="5" height="1" fill="#82003e"/><rect x="1264" y="185" width="36" height="1" fill="#82003e"/><rect x="1264" y="186" width="36" height="2" fill="#ff0080"/><rect x="1264" y="188" width="36" height="1" fill="#82003e"/><rect x="1258" y="184" width="2" height="1" fill="#82003e"/><rect x="1265" y="184" width="4" height="1" fill="#82003e"/><rect x="1271" y="184" width="1" height="1" fill="#82003e"/><rect x="1273" y="184" width="2" height="1" fill="#82003e"/><rect x="1280" y="189" width="1" height="1" fill="#82003e"/><rect x="1287" y="184" width="2" height="1" fill="#82003e"/><rect x="1293" y="184" width="2" height="1" fill="#82003e"/><rect x="1301" y="232" width="10" height="1" fill="#82003e"/><rect x="1301" y="233" width="45" height="1" fill="#82003e"/><rect x="1301" y="234" width="45" height="1" fill="#ff0080"/><rect x="1301" y="235" width="45" height="1" fill="#f2007a"/><rect x="1301" y="236" width="45" height="1" fill="#82003e"/><rect x="1302" y="232" width="3" height="1" fill="#82003e"/><rect x="1304" y="232" width="2" height="1" fill="#82003e"/><rect x="1309" y="237" width="1" height="1" fill="#82003e"/><rect x="1314" y="232" width="2" height="1" fill="#82003e"/><rect x="1317" y="237" width="1" height="1" fill="#82003e"/><rect x="1320" y="237" width="4" height="1" fill="#82003e"/><rect x="1324" y="237" width="1" height="1" fill="#82003e"/><rect x="1331" y="232" width="3" height="1" fill="#82003e"/><rect x="1333" y="232" width="4" height="1" fill="#82003e"/><rect x="1338" y="232" width="2" height="1" fill="#82003e"/><rect x="1341" y="237" width="1" height="1" fill="#82003e"/><rect x="1347" y="186" width="3" height="4" fill="#82003e"/><rect x="1347" y="187" width="3" height="2" fill="#ff0080"/><rect x="1350" y="185" width="5" height="4" fill="#82003e"/><rect x="1350" y="186" width="5" height="2" fill="#ff0080"/><rect x="1350" y="188" width="5" height="1" fill="#82003e"/><rect x="1355" y="185" width="36" height="1" fill="#82003e"/><rect x="1355" y="186" width="36" height="2" fill="#ff0080"/><rect x="1355" y="188" width="36" height="1" fill="#82003e"/><rect x="1351" y="184" width="2" height="1" fill="#82003e"/><rect x="1354" y="184" width="2" height="1" fill="#82003e"/><rect x="1358" y="189" width="1" height="1" fill="#82003e"/><rect x="1360" y="189" width="2" height="1" fill="#82003e"/><rect x="1368" y="184" width="2" height="1" fill="#82003e"/><rect x="1371" y="184" width="4" height="1" fill="#82003e"/><rect x="1378" y="184" width="2" height="1" fill="#82003e"/><rect x="1380" y="184" width="2" height="1" fill="#82003e"/><rect x="1388" y="184" width="3" height="1" fill="#82003e"/><rect x="1392" y="232" width="10" height="1" fill="#82003e"/><rect x="1392" y="233" width="45" height="1" fill="#82003e"/><rect x="1392" y="234" width="45" height="1" fill="#ff0080"/><rect x="1392" y="235" width="45" height="1" fill="#f2007a"/><rect x="1392" y="236" width="45" height="1" fill="#82003e"/><rect x="1395" y="232" width="6" height="1" fill="#82003e"/><rect x="1397" y="237" width="1" height="1" fill="#82003e"/><rect x="1401" y="237" width="4" height="1" fill="#82003e"/><rect x="1404" y="232" width="2" height="1" fill="#82003e"/><rect x="1408" y="237" width="1" height="1" fill="#82003e"/><rect x="1416" y="237" width="2" height="1" fill="#82003e"/><rect x="1424" y="237" width="6" height="1" fill="#82003e"/><rect x="1430" y="232" width="3" height="1" fill="#82003e"/><rect x="1432" y="237" width="1" height="1" fill="#82003e"/><rect x="1438" y="186" width="3" height="4" fill="#82003e"/><rect x="1438" y="187" width="3" height="2" fill="#ff0080"/><rect x="1441" y="185" width="5" height="4" fill="#82003e"/><rect x="1441" y="186" width="5" height="2" fill="#ff0080"/><rect x="1441" y="188" width="5" height="1" fill="#82003e"/><rect x="1446" y="185" width="36" height="1" fill="#82003e"/><rect x="1446" y="186" width="36" height="2" fill="#ff0080"/><rect x="1446" y="188" width="36" height="1" fill="#82003e"/><rect x="1442" y="189" width="3" height="1" fill="#82003e"/><rect x="1449" y="184" width="6" height="1" fill="#82003e"/><rect x="1451" y="184" width="3" height="1" fill="#82003e"/><rect x="1456" y="184" width="2" height="1" fill="#82003e"/><rect x="1460" y="189" width="2" height="1" fill="#82003e"/><rect x="1467" y="184" width="2" height="1" fill="#82003e"/><rect x="1470" y="184" width="2" height="1" fill="#82003e"/><rect x="1477" y="184" width="2" height="1" fill="#82003e"/><rect x="1483" y="232" width="10" height="1" fill="#82003e"/><rect x="1483" y="233" width="45" height="1" fill="#82003e"/><rect x="1483" y="234" width="45" height="1" fill="#ff0080"/><rect x="1483" y="235" width="45" height="1" fill="#f2007a"/><rect x="1483" y="236" width="45" height="1" fill="#82003e"/><rect x="1485" y="232" width="1" height="1" fill="#82003e"/><rect x="1493" y="237" width="2" height="1" fill="#82003e"/><rect x="1498" y="237" width="2" height="1" fill="#82003e"/><rect x="1503" y="232" width="2" height="1" fill="#82003e"/><rect x="1506" y="232" width="1" height="1" fill="#82003e"/><rect x="1510" y="232" width="3" height="1" fill="#82003e"/><rect x="1513" y="232" width="2" height="1" fill="#82003e"/><rect x="1519" y="237" width="1" height="1" fill="#82003e"/><rect x="1529" y="186" width="3" height="4" fill="#82003e"/><rect x="1529" y="187" width="3" height="2" fill="#ff0080"/><rect x="1532" y="185" width="5" height="4" fill="#82003e"/><rect x="1532" y="186" width="5" height="2" fill="#ff0080"/><rect x="1532" y="188" width="5" height="1" fill="#82003e"/><rect x="1537" y="185" width="36" height="1" fill="#82003e"/><rect x="1537" y="186" width="36" height="2" fill="#ff0080"/><rect x="1537" y="188" width="36" height="1" fill="#82003e"/><rect x="1533" y="184" width="2" height="1" fill="#82003e"/><rect x="1539" y="184" width="1" height="1" fill="#82003e"/><rect x="1543" y="184" width="6" height="1" fill="#82003e"/><rect x="1547" y="189" width="3" height="1" fill="#82003e"/><rect x="1550" y="189" width="4" height="1" fill="#82003e"/><rect x="1557" y="189" width="6" height="1" fill="#82003e"/><rect x="1560" y="184" width="1" height="1" fill="#82003e"/><rect x="1563" y="184" width="2" height="1" fill="#82003e"/><rect x="1568" y="189" width="2" height="1" fill="#82003e"/><rect x="1574" y="232" width="10" height="1" fill="#82003e"/><rect x="1574" y="233" width="45" height="1" fill="#82003e"/><rect x="1574" y="234" width="45" height="1" fill="#ff0080"/><rect x="1574" y="235" width="45" height="1" fill="#f2007a"/><rect x="1574" y="236" width="45" height="1" fill="#82003e"/><rect x="1575" y="232" width="1" height="1" fill="#82003e"/><rect x="1582" y="237" width="6" height="1" fill="#82003e"/><rect x="1587" y="232" width="3" height="1" fill="#82003e"/><rect x="1589" y="237" width="2" height="1" fill="#82003e"/><rect x="1597" y="237" width="3" height="1" fill="#82003e"/><rect x="1602" y="237" width="1" height="1" fill="#82003e"/><rect x="1605" y="232" width="1" height="1" fill="#82003e"/><rect x="1612" y="237" width="1" height="1" fill="#82003e"/><rect x="1620" y="186" width="3" height="4" fill="#82003e"/><rect x="1620" y="187" width="3" height="2" fill="#ff0080"/><rect x="1623" y="185" width="5" height="4" fill="#82003e"/><rect x="1623" y="186" width="5" height="2" fill="#ff0080"/><rect x="1623" y="188" width="5" height="1" fill="#82003e"/><rect x="1628" y="185" width="36" height="1" fill="#82003e"/><rect x="1628" y="186" width="36" height="2" fill="#ff0080"/><rect x="1628" y="188" width="36" height="1" fill="#82003e"/><rect x="1624" y="189" width="1" height="1" fill="#82003e"/><rect x="1626" y="189" width="1" height="1" fill="#82003e"/><rect x="1629" y="189" width="3" height="1" fill="#82003e"/><rect x="1636" y="184" width="4" height="1" fill="#82003e"/><rect x="1639" y="184" width="4" height="1" fill="#82003e"/><rect x="1646" y="189" width="2" height="1" fill="#82003e"/><rect x="1648" y="184" width="1" height="1" fill="#82003e"/><rect x="1654" y="184" width="3" height="1" fill="#82003e"/><rect x="1658" y="189" width="1" height="1" fill="#82003e"/><rect x="1660" y="189" width="1" height="1" fill="#82003e"/><rect x="1665" y="232" width="10" height="1" fill="#82003e"/><rect x="1665" y="233" width="45" height="1" fill="#82003e"/><rect x="1665" y="234" width="45" height="1" fill="#ff0080"/><rect x="1665" y="235" width="45" height="1" fill="#f2007a"/><rect x="1665" y="236" width="45" height="1" fill="#82003e"/><rect x="1668" y="237" width="2" height="1" fill="#82003e"/><rect x="1671" y="237" width="2" height="1" fill="#82003e"/><rect x="1677" y="232" width="1" height="1" fill="#82003e"/><rect x="1682" y="237" width="4" height="1" fill="#82003e"/><rect x="1684" y="232" width="1" height="1" fill="#82003e"/><rect x="1691" y="232" width="4" height="1" fill="#82003e"/><rect x="1695" y="237" width="1" height="1" fill="#82003e"/><rect x="1699" y="232" width="1" height="1" fill="#82003e"/><rect x="1706" y="237" width="2" height="1" fill="#82003e"/><rect x="1711" y="186" width="3" height="4" fill="#82003e"/><rect x="1711" y="187" width="3" height="2" fill="#ff0080"/><rect x="1714" y="185" width="5" height="4" fill="#82003e"/><rect x="1714" y="186" width="5" height="2" fill="#ff0080"/><rect x="1714" y="188" width="5" height="1" fill="#82003e"/><rect x="1719" y="185" width="36" height="1" fill="#82003e"/><rect x="1719" y="186" width="36" height="2" fill="#ff0080"/><rect x="1719" y="188" width="36" height="1" fill="#82003e"/><rect x="1715" y="184" width="1" height="1" fill="#82003e"/><rect x="1719" y="189" width="4" height="1" fill="#82003e"/><rect x="1721" y="184" width="1" height="1" fill="#82003e"/><rect x="1724" y="189" width="2" height="1" fill="#82003e"/><rect x="1727" y="184" width="1" height="1" fill="#82003e"/><rect x="1731" y="189" width="6" height="1" fill="#82003e"/><rect x="1733" y="184" width="3" height="1" fill="#82003e"/><rect x="1736" y="184" width="1" height="1" fill="#82003e"/><rect x="1743" y="189" width="1" height="1" fill="#82003e"/><rect x="1746" y="184" width="2" height="1" fill="#82003e"/><rect x="1748" y="184" width="3" height="1" fill="#82003e"/><rect x="1750" y="184" width="4" height="1" fill="#82003e"/><rect x="1756" y="232" width="10" height="1" fill="#82003e"/><rect x="1756" y="233" width="45" height="1" fill="#82003e"/><rect x="1756" y="234" width="45" height="1" fill="#ff0080"/><rect x="1756" y="235" width="45" height="1" fill="#f2007a"/><rect x="1756" y="236" width="45" height="1" fill="#82003e"/><rect x="1760" y="237" width="4" height="1" fill="#82003e"/><rect x="1767" y="237" width="1" height="1" fill="#82003e"/><rect x="1770" y="232" width="2" height="1" fill="#82003e"/><rect x="1777" y="237" width="3" height="1" fill="#82003e"/><rect x="1779" y="237" width="2" height="1" fill="#82003e"/><rect x="1784" y="232" width="6" height="1" fill="#82003e"/><rect x="1788" y="232" width="2" height="1" fill="#82003e"/><rect x="1790" y="232" width="1" height="1" fill="#82003e"/><rect x="1794" y="237" width="2" height="1" fill="#82003e"/><rect x="1796" y="237" width="3" height="1" fill="#82003e"/><rect x="1802" y="186" width="3" height="4" fill="#82003e"/><rect x="1802" y="187" width="3" height="2" fill="#ff0080"/><rect x="1805" y="185" width="5" height="4" fill="#82003e"/><rect x="1805" y="186" width="5" height="2" fill="#ff0080"/><rect x="1805" y="188" width="5" height="1" fill="#82003e"/><rect x="1810" y="185" width="36" height="1" fill="#82003e"/><rect x="1810" y="186" width="36" height="2" fill="#ff0080"/><rect x="1810" y="188" width="36" height="1" fill="#82003e"/><rect x="1806" y="189" width="2" height="1" fill="#82003e"/><rect x="1810" y="189" width="6" height="1" fill="#82003e"/><rect x="1812" y="189" width="1" height="1" fill="#82003e"/><rect x="1815" y="189" width="2" height="1" fill="#82003e"/><rect x="1820" y="184" width="1" height="1" fill="#82003e"/><rect x="1827" y="184" width="2" height="1" fill="#82003e"/><rect x="1832" y="189" width="1" height="1" fill="#82003e"/><rect x="1840" y="184" width="2" height="1" fill="#82003e"/><rect x="1842" y="184" width="2" height="1" fill="#82003e"/><rect x="1847" y="232" width="10" height="1" fill="#82003e"/><rect x="1847" y="233" width="45" height="1" fill="#82003e"/><rect x="1847" y="234" width="45" height="1" fill="#ff0080"/><rect x="1847" y="235" width="45" height="1" fill="#f2007a"/><rect x="1847" y="236" width="45" height="1" fill="#82003e"/><rect x="1850" y="237" width="1" height="1" fill="#82003e"/><rect x="1856" y="232" width="2" height="1" fill="#82003e"/><rect x="1860" y="232" width="3" height="1" fill="#82003e"/><rect x="1867" y="237" width="4" height="1" fill="#82003e"/><rect x="1871" y="232" width="2" height="1" fill="#82003e"/><rect x="1879" y="237" width="3" height="1" fill="#82003e"/><rect x="1886" y="232" width="1" height="1" fill="#82003e"/><rect x="1889" y="232" width="1" height="1" fill="#82003e"/><rect x="1893" y="186" width="3" height="4" fill="#82003e"/><rect x="1893" y="187" width="3" height="2" fill="#ff0080"/><rect x="1896" y="185" width="5" height="4" fill="#82003e"/><rect x="1896" y="186" width="5" height="2" fill="#ff0080"/><rect x="1896" y="188" width="5" height="1" fill="#82003e"/><rect x="1901" y="185" width="5" height="1" fill="#82003e"/><rect x="1901" y="186" width="5" height="2" fill="#ff0080"/><rect x="1901" y="188" width="5" height="1" fill="#82003e"/><rect x="1897" y="184" width="6" height="1" fill="#82003e"/><rect x="1902" y="184" width="4" height="1" fill="#82003e"/><rect x="118" y="185" width="1" height="64" fill="#82003e"/><rect x="209" y="185" width="1" height="64" fill="#82003e"/><rect x="300" y="185" width="1" height="64" fill="#82003e"/><rect x="391" y="185" width="1" height="64" fill="#82003e"/><rect x="482" y="185" width="1" height="64" fill="#82003e"/><rect x="573" y="185" width="1" height="64" fill="#82003e"/><rect x="664" y="185" width="1" height="64" fill="#82003e"/><rect x="754" y="185" width="1" height="64" fill="#82003e"/><rect x="845" y="185" width="1" height="64" fill="#82003e"/><rect x="936" y="185" width="1" height="64" fill="#82003e"/><rect x="1027" y="185" width="1" height="64" fill="#82003e"/><rect x="1118" y="185" width="1" height="64" fill="#82003e"/><rect x="1209" y="185" width="1" height="64" fill="#82003e"/><rect x="1300" y="185" width="1" height="64" fill="#82003e"/><rect x="1391" y="185" width="1" height="64" fill="#82003e"/><rect x="1482" y="185" width="1" height="64" fill="#82003e"/><rect x="1573" y="185" width="1" height="64" fill="#82003e"/><rect x="1664" y="185" width="1" height="64" fill="#82003e"/><rect x="1755" y="185" width="1" height="64" fill="#82003e"/><rect x="1846" y="185" width="1" height="64" fill="#82003e"/><rect x="163" y="195" width="1" height="49" fill="#82003e"/><rect x="164" y="184" width="1" height="13" fill="#82003e"/><rect x="254" y="195" width="1" height="49" fill="#82003e"/><rect x="255" y="184" width="1" height="13" fill="#82003e"/><rect x="345" y="195" width="1" height="49" fill="#82003e"/><rect x="346" y="184" width="1" height="13" fill="#82003e"/><rect x="436" y="195" width="1" height="49" fill="#82003e"/><rect x="437" y="184" width="1" height="13" fill="#82003e"/><rect x="527" y="195" width="1" height="49" fill="#82003e"/><rect x="528" y="184" width="1" height="13" fill="#82003e"/><rect x="618" y="195" width="1" height="49" fill="#82003e"/><rect x="619" y="184" width="1" height="13" fill="#82003e"/><rect x="709" y="195" width="1" height="49" fill="#82003e"/><rect x="710" y="184" width="1" height="13" fill="#82003e"/><rect x="800" y="195" width="1" height="49" fill="#82003e"/><rect x="801" y="184" width="1" height="13" fill="#82003e"/><rect x="891" y="195" width="1" height="49" fill="#82003e"/><rect x="892" y="184" width="1" height="13" fill="#82003e"/><rect x="982" y="195" width="1" height="49" fill="#82003e"/><rect x="983" y="184" width="1" height="13" fill="#82003e"/><rect x="1073" y="195" width="1" height="49" fill="#82003e"/><rect x="1074" y="184" width="1" height="13" fill="#82003e"/><rect x="1164" y="195" width="1" height="49" fill="#82003e"/><rect x="1165" y="184" width="1" height="13" fill="#82003e"/><rect x="1255" y="195" width="1" height="49" fill="#82003e"/><rect x="1256" y="184" width="1" height="13" fill="#82003e"/><rect x="1346" y="195" width="1" height="49" fill="#82003e"/><rect x="1347" y="184" width="1" height="13" fill="#82003e"/><rect x="1437" y="195" width="1" height="49" fill="#82003e"/><rect x="1438" y="184" width="1" height="13" fill="#82003e"/><rect x="1528" y="195" width="1" height="49" fill="#82003e"/><rect x="1529" y="184" width="1" height="13" fill="#82003e"/><rect x="1619" y="195" width="1" height="49" fill="#82003e"/><rect x="1620" y="184" width="1" height="13" fill="#82003e"/><rect x="1710" y="195" width="1" height="49" fill="#82003e"/><rect x="1711" y="184" width="1" height="13" fill="#82003e"/><rect x="1801" y="195" width="1" height="49" fill="#82003e"/><rect x="1802" y="184" width="1" height="13" fill="#82003e"/><rect x="1892" y="195" width="1" height="49" fill="#82003e"/><rect x="1893" y="184" width="1" height="13" fill="#82003e"/></g>
<g shape-rendering="crispEdges"><rect x="89" y="316" width="1817" height="1" fill="#009c00"/><rect x="89" y="317" width="1817" height="1" fill="#00ff00"/><rect x="89" y="318" width="1817" height="1" fill="#00cc00"/><rect x="89" y="319" width="1817" height="1" fill="#007c00"/></g>
<path d="M118.8 313 V321 M209.8 313 V321 M300.7 313 V321 M391.7 313 V321 M482.6 313 V321 M573.6 313 V321 M664.5 313 V321 M755.5 313 V321 M846.4 313 V321 M937.4 313 V321 M1028.3 313 V321 M1119.3 313 V321 M1210.2 313 V321 M1301.2 313 V321 M1392.1 313 V321 M1483.1 313 V321 M1574.0 313 V321 M1665.0 313 V321 M1755.9 313 V321 M1846.9 313 V321" stroke="#007a00" stroke-width="1.2"/>
<path d="M88.5 483.3 L90.0 482.5 L91.5 481.7 L93.0 480.9 L94.5 480.2 L96.0 479.4 L97.5 478.7 L99.0 478.0 L100.5 477.2 L102.0 476.5 L103.5 475.8 L105.0 475.1 L106.5 474.4 L108.0 473.6 L109.5 472.9 L111.0 472.2 L112.5 471.5 L114.0 470.8 L115.5 470.1 L117.0 469.4 L118.2 468.8 L118.5 469.1 L120.0 470.2 L121.5 471.3 L123.0 472.4 L124.5 473.4 L126.0 474.3 L127.5 475.2 L129.0 476.1 L130.5 477.0 L131.2 477.4 L132.0 477.8 L133.5 478.6 L135.0 479.4 L136.5 480.2 L138.0 481.0 L139.5 481.8 L141.0 482.6 L142.5 483.4 L144.0 484.2 L145.5 484.9 L147.0 485.7 L148.5 486.4 L150.0 487.2 L151.5 488.0 L153.0 488.7 L154.5 489.5 L156.0 490.2 L157.5 491.0 L159.0 491.7 L160.5 492.5 L162.0 493.2 L163.5 494.0 L163.7 494.1 L165.0 492.8 L166.5 491.5 L168.0 490.3 L169.5 489.2 L171.0 488.2 L172.5 487.2 L174.0 486.3 L175.5 485.4 L176.2 485.0 L177.0 484.5 L178.5 483.7 L180.0 482.9 L181.5 482.1 L183.0 481.3 L184.5 480.6 L186.0 479.8 L187.5 479.1 L189.0 478.3 L190.5 477.6 L192.0 476.9 L193.5 476.2 L195.0 475.4 L196.5 474.7 L198.0 474.0 L199.5 473.3 L201.0 472.6 L202.5 471.9 L204.0 471.2 L205.5 470.5 L207.0 469.8 L208.5 469.1 L209.2 468.8 L210.0 469.4 L211.5 470.6 L213.0 471.6 L214.5 472.6 L216.0 473.6 L217.5 474.5 L219.0 475.5 L220.5 476.3 L222.0 477.2 L222.2 477.3 L223.5 478.0 L225.0 478.8 L226.5 479.6 L228.0 480.4 L229.5 481.2 L231.0 482.0 L232.5 482.8 L234.0 483.6 L235.5 484.3 L237.0 485.1 L238.5 485.8 L240.0 486.6 L241.5 487.4 L243.0 488.1 L244.5 488.9 L246.0 489.6 L247.5 490.4 L249.0 491.1 L250.5 491.9 L252.0 492.6 L253.5 493.4 L254.6 493.9 L255.0 493.6 L256.5 492.2 L258.0 491.0 L259.5 489.8 L261.0 488.7 L262.5 487.7 L264.0 486.8 L265.5 485.8 L267.0 485.0 L267.1 484.9 L268.5 484.1 L270.0 483.3 L271.5 482.5 L273.0 481.7 L274.5 480.9 L276.0 480.2 L277.5 479.4 L279.0 478.7 L280.5 478.0 L282.0 477.2 L283.5 476.5 L285.0 475.8 L286.5 475.1 L288.0 474.4 L289.5 473.6 L291.0 472.9 L292.5 472.2 L294.0 471.5 L295.5 470.8 L297.0 470.1 L298.5 469.4 L300.0 468.7 L300.1 468.7 L301.5 469.7 L303.0 470.9 L304.5 471.9 L306.0 472.9 L307.5 473.9 L309.0 474.8 L310.5 475.7 L312.0 476.5 L313.1 477.2 L313.5 477.4 L315.0 478.2 L316.5 479.0 L318.0 479.8 L319.5 480.6 L321.0 481.4 L322.5 482.2 L324.0 482.9 L325.5 483.7 L327.0 484.5 L328.5 485.2 L330.0 486.0 L331.5 486.7 L333.0 487.5 L334.5 488.2 L336.0 489.0 L337.5 489.7 L339.0 490.5 L340.5 491.2 L342.0 492.0 L343.5 492.7 L345.0 493.5 L345.6 493.8 L346.5 492.9 L348.0 491.6 L349.5 490.4 L351.0 489.2 L352.5 488.2 L354.0 487.2 L355.5 486.3 L357.0 485.4 L358.1 484.7 L358.5 484.5 L360.0 483.7 L361.5 482.8 L363.0 482.1 L364.5 481.3 L366.0 480.5 L367.5 479.8 L369.0 479.0 L370.5 478.3 L372.0 477.5 L373.5 476.8 L375.0 476.1 L376.5 475.4 L378.0 474.7 L379.5 474.0 L381.0 473.3 L382.5 472.6 L384.0 471.8 L385.5 471.1 L387.0 470.4 L388.5 469.7 L390.0 469.0 L391.1 468.5 L391.5 468.9 L393.0 470.0 L394.5 471.1 L396.0 472.1 L397.5 473.1 L399.0 474.1 L400.5 475.0 L402.0 475.8 L403.5 476.7 L404.1 477.0 L405.0 477.5 L406.5 478.3 L408.0 479.1 L409.5 479.9 L411.0 480.7 L412.5 481.5 L414.0 482.3 L415.5 483.0 L417.0 483.8 L418.5 484.6 L420.0 485.3 L421.5 486.1 L423.0 486.8 L424.5 487.6 L426.0 488.3 L427.5 489.1 L429.0 489.8 L430.5 490.6 L432.0 491.3 L433.5 492.1 L435.0 492.8 L436.5 493.5 L436.5 493.6 L438.0 492.2 L439.5 490.9 L441.0 489.7 L442.5 488.6 L444.0 487.6 L445.5 486.7 L447.0 485.7 L448.5 484.9 L449.0 484.6 L450.0 484.0 L451.5 483.2 L453.0 482.4 L454.5 481.6 L456.0 480.8 L457.5 480.1 L459.0 479.3 L460.5 478.6 L462.0 477.8 L463.5 477.1 L465.0 476.4 L466.5 475.7 L468.0 475.0 L469.5 474.3 L471.0 473.6 L472.5 472.8 L474.0 472.1 L475.5 471.4 L477.0 470.7 L478.5 470.0 L480.0 469.3 L481.5 468.6 L482.0 468.4 L483.0 469.2 L484.5 470.3 L486.0 471.3 L487.5 472.3 L489.0 473.3 L490.5 474.2 L492.0 475.1 L493.5 476.0 L495.0 476.8 L495.0 476.8 L496.5 477.6 L498.0 478.5 L499.5 479.3 L501.0 480.0 L502.5 480.8 L504.0 481.6 L505.5 482.4 L507.0 483.1 L508.5 483.9 L510.0 484.6 L511.5 485.4 L513.0 486.1 L514.5 486.9 L516.0 487.6 L517.5 488.4 L519.0 489.1 L520.5 489.9 L522.0 490.6 L523.5 491.4 L525.0 492.1 L526.5 492.8 L527.5 493.3 L528.0 492.8 L529.5 491.5 L531.0 490.2 L532.5 489.1 L534.0 488.0 L535.5 487.0 L537.0 486.1 L538.5 485.2 L540.0 484.3 L540.0 484.3 L541.5 483.5 L543.0 482.7 L544.5 481.9 L546.0 481.1 L547.5 480.3 L549.0 479.6 L550.5 478.8 L552.0 478.1 L553.5 477.4 L555.0 476.7 L556.5 476.0 L558.0 475.2 L559.5 474.5 L561.0 473.8 L562.5 473.1 L564.0 472.4 L565.5 471.7 L567.0 471.0 L568.5 470.3 L570.0 469.6 L571.5 468.9 L573.0 468.2 L573.0 468.3 L574.5 469.4 L576.0 470.5 L577.5 471.6 L579.0 472.5 L580.5 473.5 L582.0 474.4 L583.5 475.3 L585.0 476.1 L586.0 476.6 L586.5 476.9 L588.0 477.8 L589.5 478.6 L591.0 479.3 L592.5 480.1 L594.0 480.9 L595.5 481.7 L597.0 482.4 L598.5 483.2 L600.0 483.9 L601.5 484.7 L603.0 485.4 L604.5 486.2 L606.0 486.9 L607.5 487.7 L609.0 488.4 L610.5 489.2 L612.0 489.9 L613.5 490.6 L615.0 491.4 L616.5 492.1 L618.0 492.8 L618.4 493.1 L619.5 492.0 L621.0 490.8 L622.5 489.6 L624.0 488.5 L625.5 487.4 L627.0 486.5 L628.5 485.5 L630.0 484.6 L630.9 484.1 L631.5 483.8 L633.0 483.0 L634.5 482.2 L636.0 481.4 L637.5 480.6 L639.0 479.9 L640.5 479.1 L642.0 478.4 L643.5 477.6 L645.0 476.9 L646.5 476.2 L648.0 475.5 L649.5 474.8 L651.0 474.1 L652.5 473.4 L654.0 472.7 L655.5 472.0 L657.0 471.3 L658.5 470.6 L660.0 469.9 L661.5 469.2 L663.0 468.5 L663.9 468.1 L664.5 468.5 L666.0 469.7 L667.5 470.7 L669.0 471.7 L670.5 472.7 L672.0 473.6 L673.5 474.5 L675.0 475.4 L676.5 476.2 L676.9 476.4 L678.0 477.0 L679.5 477.8 L681.0 478.6 L682.5 479.4 L684.0 480.2 L685.5 481.0 L687.0 481.7 L688.5 482.5 L690.0 483.2 L691.5 484.0 L693.0 484.7 L694.5 485.5 L696.0 486.2 L697.5 487.0 L699.0 487.7 L700.5 488.4 L702.0 489.2 L703.5 489.9 L705.0 490.6 L706.5 491.4 L708.0 492.1 L709.4 492.8 L709.5 492.7 L711.0 491.3 L712.5 490.1 L714.0 488.9 L715.5 487.8 L717.0 486.8 L718.5 485.9 L720.0 485.0 L721.5 484.1 L721.9 483.9 L723.0 483.3 L724.5 482.4 L726.0 481.7 L727.5 480.9 L729.0 480.1 L730.5 479.4 L732.0 478.6 L733.5 477.9 L735.0 477.2 L736.5 476.5 L738.0 475.7 L739.5 475.0 L741.0 474.3 L742.5 473.6 L744.0 472.9 L745.5 472.2 L747.0 471.5 L748.5 470.8 L750.0 470.2 L751.5 469.5 L753.0 468.8 L754.5 468.1 L754.9 467.9 L756.0 468.8 L757.5 469.9 L759.0 470.9 L760.5 471.9 L762.0 472.9 L763.5 473.8 L765.0 474.6 L766.5 475.5 L767.9 476.2 L768.0 476.3 L769.5 477.1 L771.0 477.9 L772.5 478.7 L774.0 479.5 L775.5 480.3 L777.0 481.0 L778.5 481.8 L780.0 482.5 L781.5 483.3 L783.0 484.0 L784.5 484.8 L786.0 485.5 L787.5 486.3 L789.0 487.0 L790.5 487.7 L792.0 488.5 L793.5 489.2 L795.0 489.9 L796.5 490.7 L798.0 491.4 L799.5 492.1 L800.3 492.5 L801.0 491.9 L802.5 490.6 L804.0 489.4 L805.5 488.3 L807.0 487.2 L808.5 486.2 L810.0 485.3 L811.5 484.4 L812.8 483.7 L813.0 483.6 L814.5 482.7 L816.0 481.9 L817.5 481.2 L819.0 480.4 L820.5 479.6 L822.0 478.9 L823.5 478.2 L825.0 477.4 L826.5 476.7 L828.0 476.0 L829.5 475.3 L831.0 474.6 L832.5 473.9 L834.0 473.2 L835.5 472.5 L837.0 471.8 L838.5 471.1 L840.0 470.4 L841.5 469.7 L843.0 469.1 L844.5 468.4 L845.8 467.8 L846.0 467.9 L847.5 469.0 L849.0 470.1 L850.5 471.1 L852.0 472.1 L853.5 473.0 L855.0 473.9 L856.5 474.8 L858.0 475.6 L858.8 476.1 L859.5 476.4 L861.0 477.2 L862.5 478.0 L864.0 478.8 L865.5 479.6 L867.0 480.4 L868.5 481.1 L870.0 481.9 L871.5 482.6 L873.0 483.4 L874.5 484.1 L876.0 484.8 L877.5 485.6 L879.0 486.3 L880.5 487.1 L882.0 487.8 L883.5 488.5 L885.0 489.3 L886.5 490.0 L888.0 490.7 L889.5 491.4 L891.0 492.2 L891.3 492.3 L892.5 491.2 L894.0 489.9 L895.5 488.8 L897.0 487.7 L898.5 486.7 L900.0 485.7 L901.5 484.8 L903.0 483.9 L903.8 483.5 L904.5 483.1 L906.0 482.3 L907.5 481.5 L909.0 480.7 L910.5 479.9 L912.0 479.2 L913.5 478.5 L915.0 477.7 L916.5 477.0 L918.0 476.3 L919.5 475.6 L921.0 474.9 L922.5 474.2 L924.0 473.5 L925.5 472.8 L927.0 472.1 L928.5 471.4 L930.0 470.7 L931.5 470.0 L933.0 469.4 L934.5 468.7 L936.0 468.0 L936.8 467.6 L937.5 468.2 L939.0 469.3 L940.5 470.4 L942.0 471.4 L943.5 472.3 L945.0 473.2 L946.5 474.1 L948.0 474.9 L949.5 475.8 L949.8 475.9 L951.0 476.6 L952.5 477.4 L954.0 478.2 L955.5 479.0 L957.0 479.7 L958.5 480.5 L960.0 481.2 L961.5 482.0 L963.0 482.7 L964.5 483.5 L966.0 484.2 L967.5 485.0 L969.0 485.7 L970.5 486.4 L972.0 487.2 L973.5 487.9 L975.0 488.6 L976.5 489.4 L978.0 490.1 L979.5 490.8 L981.0 491.5 L982.2 492.1 L982.5 491.9 L984.0 490.5 L985.5 489.3 L987.0 488.2 L988.5 487.1 L990.0 486.1 L991.5 485.2 L993.0 484.3 L994.5 483.5 L994.7 483.3 L996.0 482.6 L997.5 481.8 L999.0 481.1 L1000.5 480.3 L1002.0 479.5 L1003.5 478.8 L1005.0 478.1 L1006.5 477.4 L1008.0 476.6 L1009.5 475.9 L1011.0 475.2 L1012.5 474.5 L1014.0 473.8 L1015.5 473.1 L1017.0 472.4 L1018.5 471.8 L1020.0 471.1 L1021.5 470.4 L1023.0 469.7 L1024.5 469.0 L1026.0 468.3 L1027.5 467.6 L1027.7 467.5 L1029.0 468.5 L1030.5 469.6 L1032.0 470.6 L1033.5 471.6 L1035.0 472.5 L1036.5 473.4 L1038.0 474.3 L1039.5 475.2 L1040.7 475.8 L1041.0 476.0 L1042.5 476.8 L1044.0 477.6 L1045.5 478.4 L1047.0 479.1 L1048.5 479.9 L1050.0 480.7 L1051.5 481.4 L1053.0 482.2 L1054.5 482.9 L1056.0 483.6 L1057.5 484.4 L1059.0 485.1 L1060.5 485.9 L1062.0 486.6 L1063.5 487.3 L1065.0 488.1 L1066.5 488.8 L1068.0 489.5 L1069.5 490.2 L1071.0 491.0 L1072.5 491.7 L1073.2 492.0 L1074.0 491.3 L1075.5 490.0 L1077.0 488.8 L1078.5 487.7 L1080.0 486.7 L1081.5 485.7 L1083.0 484.8 L1084.5 483.9 L1085.7 483.3 L1086.0 483.1 L1087.5 482.3 L1089.0 481.5 L1090.5 480.7 L1092.0 479.9 L1093.5 479.2 L1095.0 478.5 L1096.5 477.7 L1098.0 477.0 L1099.5 476.3 L1101.0 475.6 L1102.5 474.9 L1104.0 474.2 L1105.5 473.5 L1107.0 472.8 L1108.5 472.1 L1110.0 471.5 L1111.5 470.8 L1113.0 470.1 L1114.5 469.4 L1116.0 468.7 L1117.5 468.0 L1118.7 467.5 L1119.0 467.8 L1120.5 468.9 L1122.0 470.0 L1123.5 471.0 L1125.0 471.9 L1126.5 472.8 L1128.0 473.7 L1129.5 474.6 L1131.0 475.4 L1131.7 475.8 L1132.5 476.2 L1134.0 477.0 L1135.5 477.8 L1137.0 478.6 L1138.5 479.4 L1140.0 480.1 L1141.5 480.9 L1143.0 481.6 L1144.5 482.4 L1146.0 483.1 L1147.5 483.9 L1149.0 484.6 L1150.5 485.4 L1152.0 486.1 L1153.5 486.8 L1155.0 487.6 L1156.5 488.3 L1158.0 489.0 L1159.5 489.8 L1161.0 490.5 L1162.5 491.2 L1164.0 491.9 L1164.1 492.0 L1165.5 490.8 L1167.0 489.5 L1168.5 488.4 L1170.0 487.3 L1171.5 486.3 L1173.0 485.3 L1174.5 484.4 L1176.0 483.6 L1176.6 483.2 L1177.5 482.8 L1179.0 482.0 L1180.5 481.2 L1182.0 480.4 L1183.5 479.7 L1185.0 478.9 L1186.5 478.2 L1188.0 477.5 L1189.5 476.8 L1191.0 476.1 L1192.5 475.4 L1194.0 474.7 L1195.5 474.0 L1197.0 473.3 L1198.5 472.6 L1200.0 471.9 L1201.5 471.2 L1203.0 470.5 L1204.5 469.8 L1206.0 469.2 L1207.5 468.5 L1209.0 467.8 L1209.6 467.5 L1210.5 468.2 L1212.0 469.3 L1213.5 470.3 L1215.0 471.3 L1216.5 472.3 L1218.0 473.2 L1219.5 474.1 L1221.0 474.9 L1222.5 475.7 L1222.6 475.8 L1224.0 476.5 L1225.5 477.3 L1227.0 478.1 L1228.5 478.9 L1230.0 479.7 L1231.5 480.4 L1233.0 481.2 L1234.5 481.9 L1236.0 482.7 L1237.5 483.4 L1239.0 484.2 L1240.5 484.9 L1242.0 485.7 L1243.5 486.4 L1245.0 487.1 L1246.5 487.9 L1248.0 488.6 L1249.5 489.3 L1251.0 490.1 L1252.5 490.8 L1254.0 491.5 L1255.1 492.1 L1255.5 491.7 L1257.0 490.3 L1258.5 489.1 L1260.0 488.0 L1261.5 487.0 L1263.0 486.0 L1264.5 485.1 L1266.0 484.2 L1267.5 483.3 L1267.6 483.3 L1269.0 482.5 L1270.5 481.7 L1272.0 480.9 L1273.5 480.2 L1275.0 479.4 L1276.5 478.7 L1278.0 478.0 L1279.5 477.3 L1281.0 476.6 L1282.5 475.9 L1284.0 475.2 L1285.5 474.5 L1287.0 473.8 L1288.5 473.1 L1290.0 472.4 L1291.5 471.7 L1293.0 471.0 L1294.5 470.3 L1296.0 469.6 L1297.5 469.0 L1299.0 468.3 L1300.5 467.6 L1300.6 467.6 L1302.0 468.7 L1303.5 469.7 L1305.0 470.8 L1306.5 471.7 L1308.0 472.7 L1309.5 473.6 L1311.0 474.4 L1312.5 475.3 L1313.6 475.9 L1314.0 476.1 L1315.5 476.9 L1317.0 477.7 L1318.5 478.5 L1320.0 479.3 L1321.5 480.0 L1323.0 480.8 L1324.5 481.6 L1326.0 482.3 L1327.5 483.1 L1329.0 483.8 L1330.5 484.6 L1332.0 485.3 L1333.5 486.0 L1335.0 486.8 L1336.5 487.5 L1338.0 488.3 L1339.5 489.0 L1341.0 489.7 L1342.5 490.5 L1344.0 491.2 L1345.5 491.9 L1346.0 492.2 L1347.0 491.3 L1348.5 490.0 L1350.0 488.8 L1351.5 487.7 L1353.0 486.7 L1354.5 485.8 L1356.0 484.9 L1357.5 484.0 L1358.5 483.4 L1359.0 483.1 L1360.5 482.3 L1362.0 481.5 L1363.5 480.8 L1365.0 480.0 L1366.5 479.3 L1368.0 478.6 L1369.5 477.8 L1371.0 477.1 L1372.5 476.4 L1374.0 475.7 L1375.5 475.0 L1377.0 474.3 L1378.5 473.6 L1380.0 472.9 L1381.5 472.2 L1383.0 471.6 L1384.5 470.9 L1386.0 470.2 L1387.5 469.5 L1389.0 468.8 L1390.5 468.1 L1391.5 467.7 L1392.0 468.0 L1393.5 469.2 L1395.0 470.2 L1396.5 471.2 L1398.0 472.2 L1399.5 473.1 L1401.0 474.0 L1402.5 474.9 L1404.0 475.7 L1404.5 476.0 L1405.5 476.5 L1407.0 477.3 L1408.5 478.1 L1410.0 478.9 L1411.5 479.7 L1413.0 480.5 L1414.5 481.2 L1416.0 482.0 L1417.5 482.7 L1419.0 483.5 L1420.5 484.2 L1422.0 485.0 L1423.5 485.7 L1425.0 486.5 L1426.5 487.2 L1428.0 488.0 L1429.5 488.7 L1431.0 489.4 L1432.5 490.2 L1434.0 490.9 L1435.5 491.6 L1437.0 492.4 L1437.0 492.3 L1438.5 491.0 L1440.0 489.8 L1441.5 488.6 L1443.0 487.5 L1444.5 486.6 L1446.0 485.6 L1447.5 484.7 L1449.0 483.8 L1449.5 483.6 L1450.5 483.0 L1452.0 482.2 L1453.5 481.4 L1455.0 480.7 L1456.5 479.9 L1458.0 479.2 L1459.5 478.4 L1461.0 477.7 L1462.5 477.0 L1464.0 476.3 L1465.5 475.6 L1467.0 474.9 L1468.5 474.2 L1470.0 473.5 L1471.5 472.8 L1473.0 472.1 L1474.5 471.4 L1476.0 470.8 L1477.5 470.1 L1479.0 469.4 L1480.5 468.7 L1482.0 468.0 L1482.5 467.8 L1483.5 468.6 L1485.0 469.7 L1486.5 470.8 L1488.0 471.8 L1489.5 472.7 L1491.0 473.6 L1492.5 474.5 L1494.0 475.4 L1495.5 476.2 L1495.5 476.2 L1497.0 477.0 L1498.5 477.8 L1500.0 478.6 L1501.5 479.4 L1503.0 480.2 L1504.5 480.9 L1506.0 481.7 L1507.5 482.5 L1509.0 483.2 L1510.5 484.0 L1512.0 484.7 L1513.5 485.5 L1515.0 486.2 L1516.5 487.0 L1518.0 487.7 L1519.5 488.4 L1521.0 489.2 L1522.5 489.9 L1524.0 490.7 L1525.5 491.4 L1527.0 492.2 L1527.9 492.6 L1528.5 492.1 L1530.0 490.8 L1531.5 489.5 L1533.0 488.4 L1534.5 487.4 L1536.0 486.4 L1537.5 485.5 L1539.0 484.6 L1540.4 483.8 L1540.5 483.7 L1542.0 482.9 L1543.5 482.1 L1545.0 481.3 L1546.5 480.6 L1548.0 479.8 L1549.5 479.1 L1551.0 478.4 L1552.5 477.7 L1554.0 476.9 L1555.5 476.2 L1557.0 475.5 L1558.5 474.8 L1560.0 474.1 L1561.5 473.4 L1563.0 472.7 L1564.5 472.0 L1566.0 471.4 L1567.5 470.7 L1569.0 470.0 L1570.5 469.3 L1572.0 468.6 L1573.4 468.0 L1573.5 468.0 L1575.0 469.2 L1576.5 470.3 L1578.0 471.3 L1579.5 472.3 L1581.0 473.2 L1582.5 474.1 L1584.0 475.0 L1585.5 475.8 L1586.4 476.4 L1587.0 476.7 L1588.5 477.5 L1590.0 478.3 L1591.5 479.1 L1593.0 479.9 L1594.5 480.7 L1596.0 481.4 L1597.5 482.2 L1599.0 483.0 L1600.5 483.7 L1602.0 484.5 L1603.5 485.2 L1605.0 486.0 L1606.5 486.7 L1608.0 487.5 L1609.5 488.2 L1611.0 489.0 L1612.5 489.7 L1614.0 490.5 L1615.5 491.2 L1617.0 491.9 L1618.5 492.7 L1618.9 492.9 L1620.0 491.8 L1621.5 490.6 L1623.0 489.4 L1624.5 488.3 L1626.0 487.3 L1627.5 486.3 L1629.0 485.4 L1630.5 484.5 L1631.4 484.0 L1632.0 483.7 L1633.5 482.9 L1635.0 482.1 L1636.5 481.3 L1638.0 480.5 L1639.5 479.8 L1641.0 479.0 L1642.5 478.3 L1644.0 477.6 L1645.5 476.9 L1647.0 476.2 L1648.5 475.5 L1650.0 474.8 L1651.5 474.1 L1653.0 473.4 L1654.5 472.7 L1656.0 472.0 L1657.5 471.3 L1659.0 470.6 L1660.5 469.9 L1662.0 469.2 L1663.5 468.5 L1664.4 468.1 L1665.0 468.6 L1666.5 469.8 L1668.0 470.8 L1669.5 471.8 L1671.0 472.8 L1672.5 473.7 L1674.0 474.6 L1675.5 475.5 L1677.0 476.4 L1677.4 476.6 L1678.5 477.2 L1680.0 478.0 L1681.5 478.8 L1683.0 479.6 L1684.5 480.4 L1686.0 481.2 L1687.5 481.9 L1689.0 482.7 L1690.5 483.5 L1692.0 484.2 L1693.5 485.0 L1695.0 485.7 L1696.5 486.5 L1698.0 487.2 L1699.5 488.0 L1701.0 488.7 L1702.5 489.5 L1704.0 490.2 L1705.5 491.0 L1707.0 491.7 L1708.5 492.5 L1709.8 493.1 L1710.0 493.0 L1711.5 491.6 L1713.0 490.4 L1714.5 489.2 L1716.0 488.2 L1717.5 487.2 L1719.0 486.2 L1720.5 485.3 L1722.0 484.4 L1722.3 484.3 L1723.5 483.6 L1725.0 482.8 L1726.5 482.0 L1728.0 481.2 L1729.5 480.5 L1731.0 479.7 L1732.5 479.0 L1734.0 478.3 L1735.5 477.5 L1737.0 476.8 L1738.5 476.1 L1740.0 475.4 L1741.5 474.7 L1743.0 474.0 L1744.5 473.3 L1746.0 472.6 L1747.5 471.9 L1749.0 471.2 L1750.5 470.5 L1752.0 469.8 L1753.5 469.1 L1755.0 468.4 L1755.3 468.3 L1756.5 469.2 L1758.0 470.3 L1759.5 471.4 L1761.0 472.4 L1762.5 473.3 L1764.0 474.3 L1765.5 475.1 L1767.0 476.0 L1768.3 476.8 L1768.5 476.9 L1770.0 477.7 L1771.5 478.5 L1773.0 479.3 L1774.5 480.1 L1776.0 480.9 L1777.5 481.7 L1779.0 482.4 L1780.5 483.2 L1782.0 484.0 L1783.5 484.7 L1785.0 485.5 L1786.5 486.2 L1788.0 487.0 L1789.5 487.8 L1791.0 488.5 L1792.5 489.3 L1794.0 490.0 L1795.5 490.8 L1797.0 491.5 L1798.5 492.3 L1800.0 493.0 L1800.8 493.4 L1801.5 492.7 L1803.0 491.4 L1804.5 490.2 L1806.0 489.1 L1807.5 488.0 L1809.0 487.0 L1810.5 486.1 L1812.0 485.2 L1813.3 484.5 L1813.5 484.3 L1815.0 483.5 L1816.5 482.7 L1818.0 481.9 L1819.5 481.1 L1821.0 480.4 L1822.5 479.6 L1824.0 478.9 L1825.5 478.2 L1827.0 477.5 L1828.5 476.7 L1830.0 476.0 L1831.5 475.3 L1833.0 474.6 L1834.5 473.9 L1836.0 473.2 L1837.5 472.5 L1839.0 471.8 L1840.5 471.1 L1842.0 470.4 L1843.5 469.7 L1845.0 469.0 L1846.3 468.4 L1846.5 468.6 L1848.0 469.8 L1849.5 470.9 L1851.0 471.9 L1852.5 472.9 L1854.0 473.9 L1855.5 474.8 L1857.0 475.6 L1858.5 476.5 L1859.3 476.9 L1860.0 477.3 L1861.5 478.2 L1863.0 479.0 L1864.5 479.8 L1866.0 480.6 L1867.5 481.4 L1869.0 482.1 L1870.5 482.9 L1872.0 483.7 L1873.5 484.4 L1875.0 485.2 L1876.5 486.0 L1878.0 486.7 L1879.5 487.5 L1881.0 488.2 L1882.5 489.0 L1884.0 489.7 L1885.5 490.5 L1887.0 491.3 L1888.5 492.0 L1890.0 492.8 L1891.5 493.5 L1891.7 493.6 L1893.0 492.4 L1894.5 491.2 L1896.0 490.0 L1897.5 488.9 L1899.0 487.9 L1900.5 486.9 L1902.0 486.0 L1903.5 485.1 L1904.2 484.7 L1905.0 484.2 L1905.5 483.9" fill="none" stroke="#5e5900" stroke-width="3.8" stroke-linejoin="round"/>
<path d="M88.5 483.3 L90.0 482.5 L91.5 481.7 L93.0 480.9 L94.5 480.2 L96.0 479.4 L97.5 478.7 L99.0 478.0 L100.5 477.2 L102.0 476.5 L103.5 475.8 L105.0 475.1 L106.5 474.4 L108.0 473.6 L109.5 472.9 L111.0 472.2 L112.5 471.5 L114.0 470.8 L115.5 470.1 L117.0 469.4 L118.2 468.8 L118.5 469.1 L120.0 470.2 L121.5 471.3 L123.0 472.4 L124.5 473.4 L126.0 474.3 L127.5 475.2 L129.0 476.1 L130.5 477.0 L131.2 477.4 L132.0 477.8 L133.5 478.6 L135.0 479.4 L136.5 480.2 L138.0 481.0 L139.5 481.8 L141.0 482.6 L142.5 483.4 L144.0 484.2 L145.5 484.9 L147.0 485.7 L148.5 486.4 L150.0 487.2 L151.5 488.0 L153.0 488.7 L154.5 489.5 L156.0 490.2 L157.5 491.0 L159.0 491.7 L160.5 492.5 L162.0 493.2 L163.5 494.0 L163.7 494.1 L165.0 492.8 L166.5 491.5 L168.0 490.3 L169.5 489.2 L171.0 488.2 L172.5 487.2 L174.0 486.3 L175.5 485.4 L176.2 485.0 L177.0 484.5 L178.5 483.7 L180.0 482.9 L181.5 482.1 L183.0 481.3 L184.5 480.6 L186.0 479.8 L187.5 479.1 L189.0 478.3 L190.5 477.6 L192.0 476.9 L193.5 476.2 L195.0 475.4 L196.5 474.7 L198.0 474.0 L199.5 473.3 L201.0 472.6 L202.5 471.9 L204.0 471.2 L205.5 470.5 L207.0 469.8 L208.5 469.1 L209.2 468.8 L210.0 469.4 L211.5 470.6 L213.0 471.6 L214.5 472.6 L216.0 473.6 L217.5 474.5 L219.0 475.5 L220.5 476.3 L222.0 477.2 L222.2 477.3 L223.5 478.0 L225.0 478.8 L226.5 479.6 L228.0 480.4 L229.5 481.2 L231.0 482.0 L232.5 482.8 L234.0 483.6 L235.5 484.3 L237.0 485.1 L238.5 485.8 L240.0 486.6 L241.5 487.4 L243.0 488.1 L244.5 488.9 L246.0 489.6 L247.5 490.4 L249.0 491.1 L250.5 491.9 L252.0 492.6 L253.5 493.4 L254.6 493.9 L255.0 493.6 L256.5 492.2 L258.0 491.0 L259.5 489.8 L261.0 488.7 L262.5 487.7 L264.0 486.8 L265.5 485.8 L267.0 485.0 L267.1 484.9 L268.5 484.1 L270.0 483.3 L271.5 482.5 L273.0 481.7 L274.5 480.9 L276.0 480.2 L277.5 479.4 L279.0 478.7 L280.5 478.0 L282.0 477.2 L283.5 476.5 L285.0 475.8 L286.5 475.1 L288.0 474.4 L289.5 473.6 L291.0 472.9 L292.5 472.2 L294.0 471.5 L295.5 470.8 L297.0 470.1 L298.5 469.4 L300.0 468.7 L300.1 468.7 L301.5 469.7 L303.0 470.9 L304.5 471.9 L306.0 472.9 L307.5 473.9 L309.0 474.8 L310.5 475.7 L312.0 476.5 L313.1 477.2 L313.5 477.4 L315.0 478.2 L316.5 479.0 L318.0 479.8 L319.5 480.6 L321.0 481.4 L322.5 482.2 L324.0 482.9 L325.5 483.7 L327.0 484.5 L328.5 485.2 L330.0 486.0 L331.5 486.7 L333.0 487.5 L334.5 488.2 L336.0 489.0 L337.5 489.7 L339.0 490.5 L340.5 491.2 L342.0 492.0 L343.5 492.7 L345.0 493.5 L345.6 493.8 L346.5 492.9 L348.0 491.6 L349.5 490.4 L351.0 489.2 L352.5 488.2 L354.0 487.2 L355.5 486.3 L357.0 485.4 L358.1 484.7 L358.5 484.5 L360.0 483.7 L361.5 482.8 L363.0 482.1 L364.5 481.3 L366.0 480.5 L367.5 479.8 L369.0 479.0 L370.5 478.3 L372.0 477.5 L373.5 476.8 L375.0 476.1 L376.5 475.4 L378.0 474.7 L379.5 474.0 L381.0 473.3 L382.5 472.6 L384.0 471.8 L385.5 471.1 L387.0 470.4 L388.5 469.7 L390.0 469.0 L391.1 468.5 L391.5 468.9 L393.0 470.0 L394.5 471.1 L396.0 472.1 L397.5 473.1 L399.0 474.1 L400.5 475.0 L402.0 475.8 L403.5 476.7 L404.1 477.0 L405.0 477.5 L406.5 478.3 L408.0 479.1 L409.5 479.9 L411.0 480.7 L412.5 481.5 L414.0 482.3 L415.5 483.0 L417.0 483.8 L418.5 484.6 L420.0 485.3 L421.5 486.1 L423.0 486.8 L424.5 487.6 L426.0 488.3 L427.5 489.1 L429.0 489.8 L430.5 490.6 L432.0 491.3 L433.5 492.1 L435.0 492.8 L436.5 493.5 L436.5 493.6 L438.0 492.2 L439.5 490.9 L441.0 489.7 L442.5 488.6 L444.0 487.6 L445.5 486.7 L447.0 485.7 L448.5 484.9 L449.0 484.6 L450.0 484.0 L451.5 483.2 L453.0 482.4 L454.5 481.6 L456.0 480.8 L457.5 480.1 L459.0 479.3 L460.5 478.6 L462.0 477.8 L463.5 477.1 L465.0 476.4 L466.5 475.7 L468.0 475.0 L469.5 474.3 L471.0 473.6 L472.5 472.8 L474.0 472.1 L475.5 471.4 L477.0 470.7 L478.5 470.0 L480.0 469.3 L481.5 468.6 L482.0 468.4 L483.0 469.2 L484.5 470.3 L486.0 471.3 L487.5 472.3 L489.0 473.3 L490.5 474.2 L492.0 475.1 L493.5 476.0 L495.0 476.8 L495.0 476.8 L496.5 477.6 L498.0 478.5 L499.5 479.3 L501.0 480.0 L502.5 480.8 L504.0 481.6 L505.5 482.4 L507.0 483.1 L508.5 483.9 L510.0 484.6 L511.5 485.4 L513.0 486.1 L514.5 486.9 L516.0 487.6 L517.5 488.4 L519.0 489.1 L520.5 489.9 L522.0 490.6 L523.5 491.4 L525.0 492.1 L526.5 492.8 L527.5 493.3 L528.0 492.8 L529.5 491.5 L531.0 490.2 L532.5 489.1 L534.0 488.0 L535.5 487.0 L537.0 486.1 L538.5 485.2 L540.0 484.3 L540.0 484.3 L541.5 483.5 L543.0 482.7 L544.5 481.9 L546.0 481.1 L547.5 480.3 L549.0 479.6 L550.5 478.8 L552.0 478.1 L553.5 477.4 L555.0 476.7 L556.5 476.0 L558.0 475.2 L559.5 474.5 L561.0 473.8 L562.5 473.1 L564.0 472.4 L565.5 471.7 L567.0 471.0 L568.5 470.3 L570.0 469.6 L571.5 468.9 L573.0 468.2 L573.0 468.3 L574.5 469.4 L576.0 470.5 L577.5 471.6 L579.0 472.5 L580.5 473.5 L582.0 474.4 L583.5 475.3 L585.0 476.1 L586.0 476.6 L586.5 476.9 L588.0 477.8 L589.5 478.6 L591.0 479.3 L592.5 480.1 L594.0 480.9 L595.5 481.7 L597.0 482.4 L598.5 483.2 L600.0 483.9 L601.5 484.7 L603.0 485.4 L604.5 486.2 L606.0 486.9 L607.5 487.7 L609.0 488.4 L610.5 489.2 L612.0 489.9 L613.5 490.6 L615.0 491.4 L616.5 492.1 L618.0 492.8 L618.4 493.1 L619.5 492.0 L621.0 490.8 L622.5 489.6 L624.0 488.5 L625.5 487.4 L627.0 486.5 L628.5 485.5 L630.0 484.6 L630.9 484.1 L631.5 483.8 L633.0 483.0 L634.5 482.2 L636.0 481.4 L637.5 480.6 L639.0 479.9 L640.5 479.1 L642.0 478.4 L643.5 477.6 L645.0 476.9 L646.5 476.2 L648.0 475.5 L649.5 474.8 L651.0 474.1 L652.5 473.4 L654.0 472.7 L655.5 472.0 L657.0 471.3 L658.5 470.6 L660.0 469.9 L661.5 469.2 L663.0 468.5 L663.9 468.1 L664.5 468.5 L666.0 469.7 L667.5 470.7 L669.0 471.7 L670.5 472.7 L672.0 473.6 L673.5 474.5 L675.0 475.4 L676.5 476.2 L676.9 476.4 L678.0 477.0 L679.5 477.8 L681.0 478.6 L682.5 479.4 L684.0 480.2 L685.5 481.0 L687.0 481.7 L688.5 482.5 L690.0 483.2 L691.5 484.0 L693.0 484.7 L694.5 485.5 L696.0 486.2 L697.5 487.0 L699.0 487.7 L700.5 488.4 L702.0 489.2 L703.5 489.9 L705.0 490.6 L706.5 491.4 L708.0 492.1 L709.4 492.8 L709.5 492.7 L711.0 491.3 L712.5 490.1 L714.0 488.9 L715.5 487.8 L717.0 486.8 L718.5 485.9 L720.0 485.0 L721.5 484.1 L721.9 483.9 L723.0 483.3 L724.5 482.4 L726.0 481.7 L727.5 480.9 L729.0 480.1 L730.5 479.4 L732.0 478.6 L733.5 477.9 L735.0 477.2 L736.5 476.5 L738.0 475.7 L739.5 475.0 L741.0 474.3 L742.5 473.6 L744.0 472.9 L745.5 472.2 L747.0 471.5 L748.5 470.8 L750.0 470.2 L751.5 469.5 L753.0 468.8 L754.5 468.1 L754.9 467.9 L756.0 468.8 L757.5 469.9 L759.0 470.9 L760.5 471.9 L762.0 472.9 L763.5 473.8 L765.0 474.6 L766.5 475.5 L767.9 476.2 L768.0 476.3 L769.5 477.1 L771.0 477.9 L772.5 478.7 L774.0 479.5 L775.5 480.3 L777.0 481.0 L778.5 481.8 L780.0 482.5 L781.5 483.3 L783.0 484.0 L784.5 484.8 L786.0 485.5 L787.5 486.3 L789.0 487.0 L790.5 487.7 L792.0 488.5 L793.5 489.2 L795.0 489.9 L796.5 490.7 L798.0 491.4 L799.5 492.1 L800.3 492.5 L801.0 491.9 L802.5 490.6 L804.0 489.4 L805.5 488.3 L807.0 487.2 L808.5 486.2 L810.0 485.3 L811.5 484.4 L812.8 483.7 L813.0 483.6 L814.5 482.7 L816.0 481.9 L817.5 481.2 L819.0 480.4 L820.5 479.6 L822.0 478.9 L823.5 478.2 L825.0 477.4 L826.5 476.7 L828.0 476.0 L829.5 475.3 L831.0 474.6 L832.5 473.9 L834.0 473.2 L835.5 472.5 L837.0 471.8 L838.5 471.1 L840.0 470.4 L841.5 469.7 L843.0 469.1 L844.5 468.4 L845.8 467.8 L846.0 467.9 L847.5 469.0 L849.0 470.1 L850.5 471.1 L852.0 472.1 L853.5 473.0 L855.0 473.9 L856.5 474.8 L858.0 475.6 L858.8 476.1 L859.5 476.4 L861.0 477.2 L862.5 478.0 L864.0 478.8 L865.5 479.6 L867.0 480.4 L868.5 481.1 L870.0 481.9 L871.5 482.6 L873.0 483.4 L874.5 484.1 L876.0 484.8 L877.5 485.6 L879.0 486.3 L880.5 487.1 L882.0 487.8 L883.5 488.5 L885.0 489.3 L886.5 490.0 L888.0 490.7 L889.5 491.4 L891.0 492.2 L891.3 492.3 L892.5 491.2 L894.0 489.9 L895.5 488.8 L897.0 487.7 L898.5 486.7 L900.0 485.7 L901.5 484.8 L903.0 483.9 L903.8 483.5 L904.5 483.1 L906.0 482.3 L907.5 481.5 L909.0 480.7 L910.5 479.9 L912.0 479.2 L913.5 478.5 L915.0 477.7 L916.5 477.0 L918.0 476.3 L919.5 475.6 L921.0 474.9 L922.5 474.2 L924.0 473.5 L925.5 472.8 L927.0 472.1 L928.5 471.4 L930.0 470.7 L931.5 470.0 L933.0 469.4 L934.5 468.7 L936.0 468.0 L936.8 467.6 L937.5 468.2 L939.0 469.3 L940.5 470.4 L942.0 471.4 L943.5 472.3 L945.0 473.2 L946.5 474.1 L948.0 474.9 L949.5 475.8 L949.8 475.9 L951.0 476.6 L952.5 477.4 L954.0 478.2 L955.5 479.0 L957.0 479.7 L958.5 480.5 L960.0 481.2 L961.5 482.0 L963.0 482.7 L964.5 483.5 L966.0 484.2 L967.5 485.0 L969.0 485.7 L970.5 486.4 L972.0 487.2 L973.5 487.9 L975.0 488.6 L976.5 489.4 L978.0 490.1 L979.5 490.8 L981.0 491.5 L982.2 492.1 L982.5 491.9 L984.0 490.5 L985.5 489.3 L987.0 488.2 L988.5 487.1 L990.0 486.1 L991.5 485.2 L993.0 484.3 L994.5 483.5 L994.7 483.3 L996.0 482.6 L997.5 481.8 L999.0 481.1 L1000.5 480.3 L1002.0 479.5 L1003.5 478.8 L1005.0 478.1 L1006.5 477.4 L1008.0 476.6 L1009.5 475.9 L1011.0 475.2 L1012.5 474.5 L1014.0 473.8 L1015.5 473.1 L1017.0 472.4 L1018.5 471.8 L1020.0 471.1 L1021.5 470.4 L1023.0 469.7 L1024.5 469.0 L1026.0 468.3 L1027.5 467.6 L1027.7 467.5 L1029.0 468.5 L1030.5 469.6 L1032.0 470.6 L1033.5 471.6 L1035.0 472.5 L1036.5 473.4 L1038.0 474.3 L1039.5 475.2 L1040.7 475.8 L1041.0 476.0 L1042.5 476.8 L1044.0 477.6 L1045.5 478.4 L1047.0 479.1 L1048.5 479.9 L1050.0 480.7 L1051.5 481.4 L1053.0 482.2 L1054.5 482.9 L1056.0 483.6 L1057.5 484.4 L1059.0 485.1 L1060.5 485.9 L1062.0 486.6 L1063.5 487.3 L1065.0 488.1 L1066.5 488.8 L1068.0 489.5 L1069.5 490.2 L1071.0 491.0 L1072.5 491.7 L1073.2 492.0 L1074.0 491.3 L1075.5 490.0 L1077.0 488.8 L1078.5 487.7 L1080.0 486.7 L1081.5 485.7 L1083.0 484.8 L1084.5 483.9 L1085.7 483.3 L1086.0 483.1 L1087.5 482.3 L1089.0 481.5 L1090.5 480.7 L1092.0 479.9 L1093.5 479.2 L1095.0 478.5 L1096.5 477.7 L1098.0 477.0 L1099.5 476.3 L1101.0 475.6 L1102.5 474.9 L1104.0 474.2 L1105.5 473.5 L1107.0 472.8 L1108.5 472.1 L1110.0 471.5 L1111.5 470.8 L1113.0 470.1 L1114.5 469.4 L1116.0 468.7 L1117.5 468.0 L1118.7 467.5 L1119.0 467.8 L1120.5 468.9 L1122.0 470.0 L1123.5 471.0 L1125.0 471.9 L1126.5 472.8 L1128.0 473.7 L1129.5 474.6 L1131.0 475.4 L1131.7 475.8 L1132.5 476.2 L1134.0 477.0 L1135.5 477.8 L1137.0 478.6 L1138.5 479.4 L1140.0 480.1 L1141.5 480.9 L1143.0 481.6 L1144.5 482.4 L1146.0 483.1 L1147.5 483.9 L1149.0 484.6 L1150.5 485.4 L1152.0 486.1 L1153.5 486.8 L1155.0 487.6 L1156.5 488.3 L1158.0 489.0 L1159.5 489.8 L1161.0 490.5 L1162.5 491.2 L1164.0 491.9 L1164.1 492.0 L1165.5 490.8 L1167.0 489.5 L1168.5 488.4 L1170.0 487.3 L1171.5 486.3 L1173.0 485.3 L1174.5 484.4 L1176.0 483.6 L1176.6 483.2 L1177.5 482.8 L1179.0 482.0 L1180.5 481.2 L1182.0 480.4 L1183.5 479.7 L1185.0 478.9 L1186.5 478.2 L1188.0 477.5 L1189.5 476.8 L1191.0 476.1 L1192.5 475.4 L1194.0 474.7 L1195.5 474.0 L1197.0 473.3 L1198.5 472.6 L1200.0 471.9 L1201.5 471.2 L1203.0 470.5 L1204.5 469.8 L1206.0 469.2 L1207.5 468.5 L1209.0 467.8 L1209.6 467.5 L1210.5 468.2 L1212.0 469.3 L1213.5 470.3 L1215.0 471.3 L1216.5 472.3 L1218.0 473.2 L1219.5 474.1 L1221.0 474.9 L1222.5 475.7 L1222.6 475.8 L1224.0 476.5 L1225.5 477.3 L1227.0 478.1 L1228.5 478.9 L1230.0 479.7 L1231.5 480.4 L1233.0 481.2 L1234.5 481.9 L1236.0 482.7 L1237.5 483.4 L1239.0 484.2 L1240.5 484.9 L1242.0 485.7 L1243.5 486.4 L1245.0 487.1 L1246.5 487.9 L1248.0 488.6 L1249.5 489.3 L1251.0 490.1 L1252.5 490.8 L1254.0 491.5 L1255.1 492.1 L1255.5 491.7 L1257.0 490.3 L1258.5 489.1 L1260.0 488.0 L1261.5 487.0 L1263.0 486.0 L1264.5 485.1 L1266.0 484.2 L1267.5 483.3 L1267.6 483.3 L1269.0 482.5 L1270.5 481.7 L1272.0 480.9 L1273.5 480.2 L1275.0 479.4 L1276.5 478.7 L1278.0 478.0 L1279.5 477.3 L1281.0 476.6 L1282.5 475.9 L1284.0 475.2 L1285.5 474.5 L1287.0 473.8 L1288.5 473.1 L1290.0 472.4 L1291.5 471.7 L1293.0 471.0 L1294.5 470.3 L1296.0 469.6 L1297.5 469.0 L1299.0 468.3 L1300.5 467.6 L1300.6 467.6 L1302.0 468.7 L1303.5 469.7 L1305.0 470.8 L1306.5 471.7 L1308.0 472.7 L1309.5 473.6 L1311.0 474.4 L1312.5 475.3 L1313.6 475.9 L1314.0 476.1 L1315.5 476.9 L1317.0 477.7 L1318.5 478.5 L1320.0 479.3 L1321.5 480.0 L1323.0 480.8 L1324.5 481.6 L1326.0 482.3 L1327.5 483.1 L1329.0 483.8 L1330.5 484.6 L1332.0 485.3 L1333.5 486.0 L1335.0 486.8 L1336.5 487.5 L1338.0 488.3 L1339.5 489.0 L1341.0 489.7 L1342.5 490.5 L1344.0 491.2 L1345.5 491.9 L1346.0 492.2 L1347.0 491.3 L1348.5 490.0 L1350.0 488.8 L1351.5 487.7 L1353.0 486.7 L1354.5 485.8 L1356.0 484.9 L1357.5 484.0 L1358.5 483.4 L1359.0 483.1 L1360.5 482.3 L1362.0 481.5 L1363.5 480.8 L1365.0 480.0 L1366.5 479.3 L1368.0 478.6 L1369.5 477.8 L1371.0 477.1 L1372.5 476.4 L1374.0 475.7 L1375.5 475.0 L1377.0 474.3 L1378.5 473.6 L1380.0 472.9 L1381.5 472.2 L1383.0 471.6 L1384.5 470.9 L1386.0 470.2 L1387.5 469.5 L1389.0 468.8 L1390.5 468.1 L1391.5 467.7 L1392.0 468.0 L1393.5 469.2 L1395.0 470.2 L1396.5 471.2 L1398.0 472.2 L1399.5 473.1 L1401.0 474.0 L1402.5 474.9 L1404.0 475.7 L1404.5 476.0 L1405.5 476.5 L1407.0 477.3 L1408.5 478.1 L1410.0 478.9 L1411.5 479.7 L1413.0 480.5 L1414.5 481.2 L1416.0 482.0 L1417.5 482.7 L1419.0 483.5 L1420.5 484.2 L1422.0 485.0 L1423.5 485.7 L1425.0 486.5 L1426.5 487.2 L1428.0 488.0 L1429.5 488.7 L1431.0 489.4 L1432.5 490.2 L1434.0 490.9 L1435.5 491.6 L1437.0 492.4 L1437.0 492.3 L1438.5 491.0 L1440.0 489.8 L1441.5 488.6 L1443.0 487.5 L1444.5 486.6 L1446.0 485.6 L1447.5 484.7 L1449.0 483.8 L1449.5 483.6 L1450.5 483.0 L1452.0 482.2 L1453.5 481.4 L1455.0 480.7 L1456.5 479.9 L1458.0 479.2 L1459.5 478.4 L1461.0 477.7 L1462.5 477.0 L1464.0 476.3 L1465.5 475.6 L1467.0 474.9 L1468.5 474.2 L1470.0 473.5 L1471.5 472.8 L1473.0 472.1 L1474.5 471.4 L1476.0 470.8 L1477.5 470.1 L1479.0 469.4 L1480.5 468.7 L1482.0 468.0 L1482.5 467.8 L1483.5 468.6 L1485.0 469.7 L1486.5 470.8 L1488.0 471.8 L1489.5 472.7 L1491.0 473.6 L1492.5 474.5 L1494.0 475.4 L1495.5 476.2 L1495.5 476.2 L1497.0 477.0 L1498.5 477.8 L1500.0 478.6 L1501.5 479.4 L1503.0 480.2 L1504.5 480.9 L1506.0 481.7 L1507.5 482.5 L1509.0 483.2 L1510.5 484.0 L1512.0 484.7 L1513.5 485.5 L1515.0 486.2 L1516.5 487.0 L1518.0 487.7 L1519.5 488.4 L1521.0 489.2 L1522.5 489.9 L1524.0 490.7 L1525.5 491.4 L1527.0 492.2 L1527.9 492.6 L1528.5 492.1 L1530.0 490.8 L1531.5 489.5 L1533.0 488.4 L1534.5 487.4 L1536.0 486.4 L1537.5 485.5 L1539.0 484.6 L1540.4 483.8 L1540.5 483.7 L1542.0 482.9 L1543.5 482.1 L1545.0 481.3 L1546.5 480.6 L1548.0 479.8 L1549.5 479.1 L1551.0 478.4 L1552.5 477.7 L1554.0 476.9 L1555.5 476.2 L1557.0 475.5 L1558.5 474.8 L1560.0 474.1 L1561.5 473.4 L1563.0 472.7 L1564.5 472.0 L1566.0 471.4 L1567.5 470.7 L1569.0 470.0 L1570.5 469.3 L1572.0 468.6 L1573.4 468.0 L1573.5 468.0 L1575.0 469.2 L1576.5 470.3 L1578.0 471.3 L1579.5 472.3 L1581.0 473.2 L1582.5 474.1 L1584.0 475.0 L1585.5 475.8 L1586.4 476.4 L1587.0 476.7 L1588.5 477.5 L1590.0 478.3 L1591.5 479.1 L1593.0 479.9 L1594.5 480.7 L1596.0 481.4 L1597.5 482.2 L1599.0 483.0 L1600.5 483.7 L1602.0 484.5 L1603.5 485.2 L1605.0 486.0 L1606.5 486.7 L1608.0 487.5 L1609.5 488.2 L1611.0 489.0 L1612.5 489.7 L1614.0 490.5 L1615.5 491.2 L1617.0 491.9 L1618.5 492.7 L1618.9 492.9 L1620.0 491.8 L1621.5 490.6 L1623.0 489.4 L1624.5 488.3 L1626.0 487.3 L1627.5 486.3 L1629.0 485.4 L1630.5 484.5 L1631.4 484.0 L1632.0 483.7 L1633.5 482.9 L1635.0 482.1 L1636.5 481.3 L1638.0 480.5 L1639.5 479.8 L1641.0 479.0 L1642.5 478.3 L1644.0 477.6 L1645.5 476.9 L1647.0 476.2 L1648.5 475.5 L1650.0 474.8 L1651.5 474.1 L1653.0 473.4 L1654.5 472.7 L1656.0 472.0 L1657.5 471.3 L1659.0 470.6 L1660.5 469.9 L1662.0 469.2 L1663.5 468.5 L1664.4 468.1 L1665.0 468.6 L1666.5 469.8 L1668.0 470.8 L1669.5 471.8 L1671.0 472.8 L1672.5 473.7 L1674.0 474.6 L1675.5 475.5 L1677.0 476.4 L1677.4 476.6 L1678.5 477.2 L1680.0 478.0 L1681.5 478.8 L1683.0 479.6 L1684.5 480.4 L1686.0 481.2 L1687.5 481.9 L1689.0 482.7 L1690.5 483.5 L1692.0 484.2 L1693.5 485.0 L1695.0 485.7 L1696.5 486.5 L1698.0 487.2 L1699.5 488.0 L1701.0 488.7 L1702.5 489.5 L1704.0 490.2 L1705.5 491.0 L1707.0 491.7 L1708.5 492.5 L1709.8 493.1 L1710.0 493.0 L1711.5 491.6 L1713.0 490.4 L1714.5 489.2 L1716.0 488.2 L1717.5 487.2 L1719.0 486.2 L1720.5 485.3 L1722.0 484.4 L1722.3 484.3 L1723.5 483.6 L1725.0 482.8 L1726.5 482.0 L1728.0 481.2 L1729.5 480.5 L1731.0 479.7 L1732.5 479.0 L1734.0 478.3 L1735.5 477.5 L1737.0 476.8 L1738.5 476.1 L1740.0 475.4 L1741.5 474.7 L1743.0 474.0 L1744.5 473.3 L1746.0 472.6 L1747.5 471.9 L1749.0 471.2 L1750.5 470.5 L1752.0 469.8 L1753.5 469.1 L1755.0 468.4 L1755.3 468.3 L1756.5 469.2 L1758.0 470.3 L1759.5 471.4 L1761.0 472.4 L1762.5 473.3 L1764.0 474.3 L1765.5 475.1 L1767.0 476.0 L1768.3 476.8 L1768.5 476.9 L1770.0 477.7 L1771.5 478.5 L1773.0 479.3 L1774.5 480.1 L1776.0 480.9 L1777.5 481.7 L1779.0 482.4 L1780.5 483.2 L1782.0 484.0 L1783.5 484.7 L1785.0 485.5 L1786.5 486.2 L1788.0 487.0 L1789.5 487.8 L1791.0 488.5 L1792.5 489.3 L1794.0 490.0 L1795.5 490.8 L1797.0 491.5 L1798.5 492.3 L1800.0 493.0 L1800.8 493.4 L1801.5 492.7 L1803.0 491.4 L1804.5 490.2 L1806.0 489.1 L1807.5 488.0 L1809.0 487.0 L1810.5 486.1 L1812.0 485.2 L1813.3 484.5 L1813.5 484.3 L1815.0 483.5 L1816.5 482.7 L1818.0 481.9 L1819.5 481.1 L1821.0 480.4 L1822.5 479.6 L1824.0 478.9 L1825.5 478.2 L1827.0 477.5 L1828.5 476.7 L1830.0 476.0 L1831.5 475.3 L1833.0 474.6 L1834.5 473.9 L1836.0 473.2 L1837.5 472.5 L1839.0 471.8 L1840.5 471.1 L1842.0 470.4 L1843.5 469.7 L1845.0 469.0 L1846.3 468.4 L1846.5 468.6 L1848.0 469.8 L1849.5 470.9 L1851.0 471.9 L1852.5 472.9 L1854.0 473.9 L1855.5 474.8 L1857.0 475.6 L1858.5 476.5 L1859.3 476.9 L1860.0 477.3 L1861.5 478.2 L1863.0 479.0 L1864.5 479.8 L1866.0 480.6 L1867.5 481.4 L1869.0 482.1 L1870.5 482.9 L1872.0 483.7 L1873.5 484.4 L1875.0 485.2 L1876.5 486.0 L1878.0 486.7 L1879.5 487.5 L1881.0 488.2 L1882.5 489.0 L1884.0 489.7 L1885.5 490.5 L1887.0 491.3 L1888.5 492.0 L1890.0 492.8 L1891.5 493.5 L1891.7 493.6 L1893.0 492.4 L1894.5 491.2 L1896.0 490.0 L1897.5 488.9 L1899.0 487.9 L1900.5 486.9 L1902.0 486.0 L1903.5 485.1 L1904.2 484.7 L1905.0 484.2 L1905.5 483.9" fill="none" stroke="#c9c100" stroke-width="1.5" stroke-linejoin="round"/>
<path d="M88.5 617.6 L90.0 617.9 L91.5 617.5 L93.0 617.2 L94.5 616.6 L96.0 615.8 L97.5 614.8 L99.0 614.1 L100.5 613.2 L102.0 612.8 L103.5 611.1 L105.0 610.2 L106.5 609.7 L108.0 608.1 L109.5 606.7 L111.0 605.4 L112.5 604.5 L114.0 602.9 L115.5 602.1 L117.0 600.8 L118.5 599.8 L120.0 598.2 L121.5 597.5 L123.0 597.1 L124.5 597.2 L126.0 597.1 L127.5 596.7 L129.0 596.5 L130.5 596.7 L132.0 597.0 L133.5 597.3 L135.0 597.6 L136.5 598.0 L138.0 598.2 L139.5 598.2 L141.0 599.4 L142.5 599.5 L144.0 600.4 L145.5 600.9 L147.0 602.2 L148.5 602.6 L150.0 603.8 L151.5 605.2 L153.0 606.6 L154.5 608.9 L156.0 610.2 L157.5 611.4 L159.0 613.1 L160.5 615.4 L162.0 616.4 L163.5 617.3 L165.0 618.5 L166.5 618.5 L168.0 618.8 L169.5 617.9 L171.0 618.2 L172.5 618.5 L174.0 618.3 L175.5 618.2 L177.0 617.1 L178.5 617.1 L180.0 616.6 L181.5 616.4 L183.0 616.8 L184.5 615.9 L186.0 615.7 L187.5 614.5 L189.0 614.3 L190.5 613.1 L192.0 612.0 L193.5 611.6 L195.0 610.8 L196.5 608.9 L198.0 608.3 L199.5 607.2 L201.0 605.6 L202.5 604.4 L204.0 602.7 L205.5 601.4 L207.0 600.1 L208.5 599.3 L210.0 598.3 L211.5 597.1 L213.0 596.4 L214.5 596.4 L216.0 596.4 L217.5 595.7 L219.0 595.8 L220.5 595.6 L222.0 596.3 L223.5 596.2 L225.0 595.9 L226.5 596.2 L228.0 596.9 L229.5 597.5 L231.0 598.1 L232.5 598.1 L234.0 598.8 L235.5 600.0 L237.0 600.5 L238.5 601.3 L240.0 602.3 L241.5 604.2 L243.0 605.0 L244.5 606.8 L246.0 608.2 L247.5 609.8 L249.0 611.8 L250.5 613.6 L252.0 614.5 L253.5 615.8 L255.0 617.3 L256.5 617.2 L258.0 617.0 L259.5 617.9 L261.0 617.4 L262.5 617.8 L264.0 617.2 L265.5 617.5 L267.0 616.9 L268.5 616.3 L270.0 615.9 L271.5 616.2 L273.0 615.9 L274.5 615.8 L276.0 614.5 L277.5 614.4 L279.0 613.5 L280.5 612.8 L282.0 611.7 L283.5 610.9 L285.0 610.2 L286.5 609.6 L288.0 607.7 L289.5 607.0 L291.0 606.2 L292.5 605.0 L294.0 602.9 L295.5 601.4 L297.0 600.9 L298.5 599.6 L300.0 598.0 L301.5 596.6 L303.0 596.8 L304.5 595.9 L306.0 596.1 L307.5 595.5 L309.0 595.5 L310.5 594.8 L312.0 595.5 L313.5 595.0 L315.0 595.4 L316.5 596.0 L318.0 596.3 L319.5 596.0 L321.0 596.6 L322.5 597.3 L324.0 598.0 L325.5 598.5 L327.0 598.9 L328.5 599.9 L330.0 601.3 L331.5 602.5 L333.0 603.0 L334.5 605.0 L336.0 606.8 L337.5 607.6 L339.0 610.0 L340.5 610.9 L342.0 613.0 L343.5 614.5 L345.0 615.8 L346.5 616.3 L348.0 616.7 L349.5 616.8 L351.0 616.6 L352.5 616.9 L354.0 616.6 L355.5 616.4 L357.0 615.8 L358.5 616.1 L360.0 615.8 L361.5 615.2 L363.0 615.5 L364.5 615.1 L366.0 614.4 L367.5 613.6 L369.0 613.2 L370.5 612.2 L372.0 611.4 L373.5 610.8 L375.0 609.6 L376.5 609.0 L378.0 608.0 L379.5 606.5 L381.0 606.0 L382.5 604.2 L384.0 603.5 L385.5 602.2 L387.0 600.5 L388.5 598.7 L390.0 597.9 L391.5 596.7 L393.0 596.5 L394.5 595.1 L396.0 595.4 L397.5 595.3 L399.0 594.8 L400.5 594.7 L402.0 594.1 L403.5 594.9 L405.0 594.6 L406.5 595.2 L408.0 595.4 L409.5 595.0 L411.0 596.0 L412.5 596.7 L414.0 596.4 L415.5 597.2 L417.0 598.3 L418.5 598.5 L420.0 600.0 L421.5 600.4 L423.0 602.1 L424.5 602.9 L426.0 604.8 L427.5 606.8 L429.0 607.6 L430.5 609.2 L432.0 611.1 L433.5 612.5 L435.0 613.7 L436.5 615.0 L438.0 615.6 L439.5 616.4 L441.0 616.2 L442.5 616.4 L444.0 615.6 L445.5 616.2 L447.0 615.3 L448.5 615.5 L450.0 615.4 L451.5 614.9 L453.0 615.1 L454.5 614.5 L456.0 614.1 L457.5 614.0 L459.0 612.7 L460.5 612.9 L462.0 611.8 L463.5 610.7 L465.0 610.3 L466.5 608.8 L468.0 608.6 L469.5 607.1 L471.0 605.9 L472.5 605.1 L474.0 603.5 L475.5 601.9 L477.0 601.1 L478.5 599.0 L480.0 598.5 L481.5 596.7 L483.0 596.1 L484.5 595.8 L486.0 594.9 L487.5 594.7 L489.0 594.0 L490.5 593.5 L492.0 593.5 L493.5 593.6 L495.0 594.2 L496.5 594.1 L498.0 594.4 L499.5 595.1 L501.0 594.7 L502.5 595.3 L504.0 596.2 L505.5 596.2 L507.0 596.8 L508.5 597.8 L510.0 598.3 L511.5 599.5 L513.0 600.4 L514.5 602.1 L516.0 603.5 L517.5 604.7 L519.0 606.7 L520.5 608.1 L522.0 609.3 L523.5 611.8 L525.0 612.7 L526.5 614.0 L528.0 614.9 L529.5 615.8 L531.0 616.1 L532.5 616.0 L534.0 615.6 L535.5 615.4 L537.0 615.0 L538.5 615.5 L540.0 615.2 L541.5 614.7 L543.0 614.7 L544.5 614.3 L546.0 614.4 L547.5 613.8 L549.0 612.9 L550.5 612.9 L552.0 611.4 L553.5 611.1 L555.0 610.1 L556.5 609.1 L558.0 607.9 L559.5 607.7 L561.0 605.9 L562.5 605.3 L564.0 604.6 L565.5 602.5 L567.0 601.1 L568.5 600.2 L570.0 598.7 L571.5 597.6 L573.0 596.6 L574.5 595.1 L576.0 594.6 L577.5 594.2 L579.0 593.6 L580.5 594.2 L582.0 593.9 L583.5 593.8 L585.0 593.2 L586.5 594.1 L588.0 594.2 L589.5 594.2 L591.0 594.8 L592.5 594.9 L594.0 595.1 L595.5 595.6 L597.0 596.3 L598.5 596.7 L600.0 597.8 L601.5 599.0 L603.0 599.9 L604.5 601.2 L606.0 602.4 L607.5 603.5 L609.0 605.3 L610.5 606.8 L612.0 608.7 L613.5 610.0 L615.0 611.4 L616.5 613.4 L618.0 614.9 L619.5 614.9 L621.0 615.8 L622.5 614.9 L624.0 615.1 L625.5 615.1 L627.0 615.5 L628.5 615.6 L630.0 615.2 L631.5 614.5 L633.0 614.8 L634.5 614.0 L636.0 613.6 L637.5 614.0 L639.0 613.3 L640.5 612.8 L642.0 612.1 L643.5 611.7 L645.0 610.4 L646.5 609.9 L648.0 608.8 L649.5 607.9 L651.0 606.5 L652.5 605.7 L654.0 604.4 L655.5 602.9 L657.0 601.5 L658.5 600.5 L660.0 598.5 L661.5 598.0 L663.0 596.0 L664.5 594.8 L666.0 594.1 L667.5 594.4 L669.0 593.4 L670.5 592.9 L672.0 592.5 L673.5 592.4 L675.0 593.0 L676.5 593.0 L678.0 593.2 L679.5 593.4 L681.0 593.0 L682.5 593.8 L684.0 594.0 L685.5 595.0 L687.0 595.5 L688.5 596.2 L690.0 596.0 L691.5 597.5 L693.0 598.4 L694.5 599.4 L696.0 599.8 L697.5 601.3 L699.0 602.8 L700.5 604.2 L702.0 606.6 L703.5 608.1 L705.0 609.5 L706.5 611.3 L708.0 612.6 L709.5 613.3 L711.0 613.6 L712.5 613.7 L714.0 614.3 L715.5 613.7 L717.0 613.8 L718.5 613.8 L720.0 613.2 L721.5 613.2 L723.0 612.9 L724.5 613.1 L726.0 612.4 L727.5 612.0 L729.0 612.3 L730.5 611.3 L732.0 611.1 L733.5 610.2 L735.0 608.8 L736.5 608.4 L738.0 607.5 L739.5 606.9 L741.0 605.5 L742.5 604.8 L744.0 603.5 L745.5 602.0 L747.0 601.4 L748.5 599.2 L750.0 598.6 L751.5 596.5 L753.0 595.0 L754.5 594.0 L756.0 593.6 L757.5 593.1 L759.0 591.7 L760.5 591.8 L762.0 591.5 L763.5 591.6 L765.0 590.9 L766.5 591.2 L768.0 591.2 L769.5 591.8 L771.0 591.4 L772.5 592.4 L774.0 592.1 L775.5 592.5 L777.0 593.4 L778.5 593.8 L780.0 594.0 L781.5 595.2 L783.0 595.4 L784.5 597.0 L786.0 598.0 L787.5 599.4 L789.0 600.7 L790.5 602.0 L792.0 603.6 L793.5 605.1 L795.0 607.1 L796.5 608.0 L798.0 610.3 L799.5 610.8 L801.0 611.9 L802.5 612.2 L804.0 612.8 L805.5 612.4 L807.0 612.3 L808.5 612.7 L810.0 611.9 L811.5 611.9 L813.0 611.8 L814.5 611.7 L816.0 611.5 L817.5 611.0 L819.0 610.4 L820.5 610.0 L822.0 609.3 L823.5 609.4 L825.0 608.5 L826.5 607.8 L828.0 606.4 L829.5 605.7 L831.0 605.1 L832.5 603.9 L834.0 602.4 L835.5 601.6 L837.0 600.9 L838.5 598.9 L840.0 597.5 L841.5 596.2 L843.0 595.2 L844.5 594.1 L846.0 592.3 L847.5 591.4 L849.0 590.9 L850.5 590.6 L852.0 590.5 L853.5 589.8 L855.0 589.9 L856.5 589.7 L858.0 590.5 L859.5 590.4 L861.0 589.9 L862.5 591.0 L864.0 590.5 L865.5 591.2 L867.0 592.3 L868.5 592.6 L870.0 593.1 L871.5 593.5 L873.0 594.0 L874.5 595.2 L876.0 595.7 L877.5 596.9 L879.0 598.5 L880.5 599.6 L882.0 601.6 L883.5 603.5 L885.0 604.9 L886.5 606.4 L888.0 608.2 L889.5 609.5 L891.0 610.4 L892.5 611.5 L894.0 611.5 L895.5 611.7 L897.0 611.9 L898.5 611.4 L900.0 611.5 L901.5 611.5 L903.0 610.9 L904.5 610.5 L906.0 610.7 L907.5 610.6 L909.0 610.2 L910.5 609.8 L912.0 609.5 L913.5 608.7 L915.0 608.1 L916.5 607.1 L918.0 606.2 L919.5 605.6 L921.0 604.2 L922.5 603.5 L924.0 602.9 L925.5 601.7 L927.0 600.5 L928.5 598.9 L930.0 597.7 L931.5 596.4 L933.0 595.1 L934.5 593.6 L936.0 592.6 L937.5 591.8 L939.0 590.3 L940.5 590.3 L942.0 590.1 L943.5 589.4 L945.0 589.2 L946.5 589.6 L948.0 588.7 L949.5 589.3 L951.0 589.0 L952.5 589.8 L954.0 590.3 L955.5 590.2 L957.0 590.2 L958.5 591.2 L960.0 591.7 L961.5 592.5 L963.0 593.0 L964.5 593.8 L966.0 594.9 L967.5 595.6 L969.0 596.7 L970.5 598.7 L972.0 599.5 L973.5 601.6 L975.0 602.8 L976.5 604.7 L978.0 605.8 L979.5 608.2 L981.0 609.0 L982.5 609.7 L984.0 610.4 L985.5 610.6 L987.0 610.2 L988.5 610.6 L990.0 610.5 L991.5 610.7 L993.0 610.2 L994.5 609.8 L996.0 609.5 L997.5 609.8 L999.0 609.7 L1000.5 608.9 L1002.0 608.2 L1003.5 608.3 L1005.0 607.3 L1006.5 606.4 L1008.0 605.6 L1009.5 605.4 L1011.0 604.5 L1012.5 603.4 L1014.0 602.2 L1015.5 601.3 L1017.0 599.9 L1018.5 599.4 L1020.0 597.5 L1021.5 596.4 L1023.0 595.2 L1024.5 593.8 L1026.0 592.1 L1027.5 590.8 L1029.0 590.1 L1030.5 589.0 L1032.0 589.3 L1033.5 588.5 L1035.0 588.7 L1036.5 587.9 L1038.0 587.9 L1039.5 587.8 L1041.0 588.1 L1042.5 588.0 L1044.0 588.0 L1045.5 589.0 L1047.0 588.9 L1048.5 589.4 L1050.0 590.0 L1051.5 590.7 L1053.0 591.3 L1054.5 592.2 L1056.0 593.0 L1057.5 593.6 L1059.0 595.2 L1060.5 596.5 L1062.0 597.2 L1063.5 599.5 L1065.0 601.1 L1066.5 602.5 L1068.0 603.5 L1069.5 605.8 L1071.0 607.2 L1072.5 607.8 L1074.0 608.6 L1075.5 609.8 L1077.0 609.5 L1078.5 609.1 L1080.0 608.9 L1081.5 608.9 L1083.0 608.8 L1084.5 609.2 L1086.0 608.5 L1087.5 608.0 L1089.0 608.5 L1090.5 608.1 L1092.0 607.1 L1093.5 607.4 L1095.0 606.6 L1096.5 606.1 L1098.0 605.3 L1099.5 604.7 L1101.0 603.8 L1102.5 602.9 L1104.0 601.3 L1105.5 600.7 L1107.0 599.5 L1108.5 598.6 L1110.0 597.1 L1111.5 596.2 L1113.0 594.5 L1114.5 592.8 L1116.0 591.4 L1117.5 590.0 L1119.0 589.3 L1120.5 588.0 L1122.0 587.8 L1123.5 587.1 L1125.0 587.2 L1126.5 586.9 L1128.0 586.8 L1129.5 587.1 L1131.0 586.3 L1132.5 587.2 L1134.0 587.0 L1135.5 587.4 L1137.0 587.8 L1138.5 588.3 L1140.0 588.4 L1141.5 589.0 L1143.0 590.1 L1144.5 589.8 L1146.0 591.1 L1147.5 592.0 L1149.0 592.3 L1150.5 594.1 L1152.0 595.5 L1153.5 597.3 L1155.0 598.3 L1156.5 600.4 L1158.0 601.5 L1159.5 603.1 L1161.0 605.1 L1162.5 605.7 L1164.0 607.6 L1165.5 608.1 L1167.0 607.9 L1168.5 608.4 L1170.0 607.9 L1171.5 608.0 L1173.0 608.0 L1174.5 608.1 L1176.0 607.3 L1177.5 607.3 L1179.0 607.0 L1180.5 606.9 L1182.0 606.9 L1183.5 606.0 L1185.0 606.1 L1186.5 605.1 L1188.0 604.5 L1189.5 603.6 L1191.0 603.0 L1192.5 602.6 L1194.0 601.4 L1195.5 600.6 L1197.0 599.1 L1198.5 598.0 L1200.0 596.9 L1201.5 595.9 L1203.0 594.6 L1204.5 593.4 L1206.0 591.3 L1207.5 590.6 L1209.0 589.6 L1210.5 588.3 L1212.0 587.1 L1213.5 586.8 L1215.0 586.2 L1216.5 586.1 L1218.0 586.6 L1219.5 586.2 L1221.0 586.3 L1222.5 586.5 L1224.0 586.8 L1225.5 586.7 L1227.0 587.0 L1228.5 587.4 L1230.0 587.9 L1231.5 588.4 L1233.0 589.0 L1234.5 589.2 L1236.0 590.3 L1237.5 590.9 L1239.0 592.1 L1240.5 592.5 L1242.0 593.8 L1243.5 595.2 L1245.0 597.5 L1246.5 599.2 L1248.0 600.5 L1249.5 601.8 L1251.0 603.9 L1252.5 605.5 L1254.0 606.6 L1255.5 607.3 L1257.0 607.8 L1258.5 608.0 L1260.0 607.8 L1261.5 608.0 L1263.0 608.2 L1264.5 608.4 L1266.0 607.4 L1267.5 607.7 L1269.0 606.9 L1270.5 606.8 L1272.0 607.2 L1273.5 606.7 L1275.0 606.7 L1276.5 605.8 L1278.0 604.8 L1279.5 604.5 L1281.0 604.0 L1282.5 603.5 L1284.0 602.7 L1285.5 601.3 L1287.0 600.3 L1288.5 599.0 L1290.0 598.5 L1291.5 596.9 L1293.0 595.6 L1294.5 594.1 L1296.0 592.7 L1297.5 592.1 L1299.0 590.3 L1300.5 590.0 L1302.0 588.3 L1303.5 588.5 L1305.0 587.3 L1306.5 586.9 L1308.0 587.4 L1309.5 586.8 L1311.0 587.3 L1312.5 586.8 L1314.0 586.8 L1315.5 587.7 L1317.0 587.9 L1318.5 588.4 L1320.0 588.7 L1321.5 588.6 L1323.0 589.7 L1324.5 590.4 L1326.0 590.8 L1327.5 592.1 L1329.0 592.2 L1330.5 593.9 L1332.0 594.8 L1333.5 595.5 L1335.0 597.0 L1336.5 599.3 L1338.0 601.1 L1339.5 601.9 L1341.0 603.8 L1342.5 605.9 L1344.0 606.9 L1345.5 608.9 L1347.0 609.3 L1348.5 609.2 L1350.0 609.5 L1351.5 609.8 L1353.0 609.7 L1354.5 609.9 L1356.0 609.3 L1357.5 609.8 L1359.0 609.1 L1360.5 609.2 L1362.0 609.0 L1363.5 608.5 L1365.0 608.2 L1366.5 608.2 L1368.0 607.9 L1369.5 607.2 L1371.0 606.3 L1372.5 605.3 L1374.0 604.3 L1375.5 604.3 L1377.0 603.2 L1378.5 602.3 L1380.0 600.8 L1381.5 600.1 L1383.0 599.3 L1384.5 597.9 L1386.0 596.3 L1387.5 594.7 L1389.0 593.5 L1390.5 592.8 L1392.0 591.2 L1393.5 590.8 L1395.0 590.2 L1396.5 590.2 L1398.0 589.9 L1399.5 589.2 L1401.0 588.8 L1402.5 589.1 L1404.0 589.4 L1405.5 589.8 L1407.0 590.2 L1408.5 590.6 L1410.0 590.2 L1411.5 591.4 L1413.0 592.0 L1414.5 592.7 L1416.0 593.0 L1417.5 593.4 L1419.0 594.8 L1420.5 595.7 L1422.0 596.6 L1423.5 598.1 L1425.0 599.0 L1426.5 600.3 L1428.0 602.4 L1429.5 604.3 L1431.0 605.3 L1432.5 607.5 L1434.0 609.4 L1435.5 610.2 L1437.0 611.8 L1438.5 612.4 L1440.0 612.4 L1441.5 612.2 L1443.0 612.3 L1444.5 612.8 L1446.0 612.8 L1447.5 612.4 L1449.0 611.8 L1450.5 612.3 L1452.0 612.1 L1453.5 611.3 L1455.0 611.4 L1456.5 611.4 L1458.0 611.0 L1459.5 610.1 L1461.0 609.5 L1462.5 608.9 L1464.0 607.7 L1465.5 606.9 L1467.0 606.0 L1468.5 605.6 L1470.0 604.3 L1471.5 603.5 L1473.0 602.2 L1474.5 601.1 L1476.0 599.4 L1477.5 598.0 L1479.0 597.6 L1480.5 595.7 L1482.0 594.3 L1483.5 593.9 L1485.0 593.4 L1486.5 592.4 L1488.0 592.5 L1489.5 592.0 L1491.0 592.1 L1492.5 591.5 L1494.0 591.6 L1495.5 592.7 L1497.0 592.8 L1498.5 592.7 L1500.0 593.1 L1501.5 593.2 L1503.0 594.2 L1504.5 594.5 L1506.0 595.6 L1507.5 596.1 L1509.0 596.9 L1510.5 597.9 L1512.0 598.1 L1513.5 599.0 L1515.0 600.5 L1516.5 602.0 L1518.0 603.5 L1519.5 605.1 L1521.0 607.2 L1522.5 609.2 L1524.0 610.5 L1525.5 612.6 L1527.0 614.0 L1528.5 614.1 L1530.0 615.0 L1531.5 614.9 L1533.0 614.6 L1534.5 615.5 L1536.0 614.8 L1537.5 615.1 L1539.0 615.0 L1540.5 615.1 L1542.0 614.6 L1543.5 614.1 L1545.0 613.9 L1546.5 613.3 L1548.0 613.7 L1549.5 613.2 L1551.0 611.9 L1552.5 611.0 L1554.0 610.5 L1555.5 609.8 L1557.0 609.4 L1558.5 608.5 L1560.0 607.4 L1561.5 605.6 L1563.0 605.3 L1564.5 604.1 L1566.0 602.7 L1567.5 601.7 L1569.0 599.4 L1570.5 598.1 L1572.0 597.5 L1573.5 596.6 L1575.0 595.4 L1576.5 594.5 L1578.0 594.4 L1579.5 594.2 L1581.0 593.3 L1582.5 593.4 L1584.0 593.3 L1585.5 593.3 L1587.0 593.8 L1588.5 593.6 L1590.0 594.0 L1591.5 594.2 L1593.0 595.1 L1594.5 595.0 L1596.0 596.3 L1597.5 596.3 L1599.0 596.8 L1600.5 598.5 L1602.0 598.6 L1603.5 600.3 L1605.0 601.4 L1606.5 602.8 L1608.0 603.6 L1609.5 605.5 L1611.0 606.7 L1612.5 609.1 L1614.0 610.6 L1615.5 612.1 L1617.0 613.5 L1618.5 614.6 L1620.0 615.8 L1621.5 615.7 L1623.0 615.8 L1624.5 615.3 L1626.0 615.4 L1627.5 615.2 L1629.0 615.7 L1630.5 615.4 L1632.0 614.7 L1633.5 615.2 L1635.0 614.3 L1636.5 614.2 L1638.0 613.5 L1639.5 613.2 L1641.0 613.3 L1642.5 612.1 L1644.0 611.2 L1645.5 610.8 L1647.0 609.7 L1648.5 609.4 L1650.0 607.6 L1651.5 607.5 L1653.0 605.5 L1654.5 605.2 L1656.0 603.8 L1657.5 602.0 L1659.0 600.9 L1660.5 599.3 L1662.0 597.9 L1663.5 596.6 L1665.0 595.7 L1666.5 595.6 L1668.0 595.1 L1669.5 594.7 L1671.0 593.5 L1672.5 593.5 L1674.0 594.0 L1675.5 593.1 L1677.0 593.9 L1678.5 593.6 L1680.0 594.5 L1681.5 593.8 L1683.0 594.9 L1684.5 594.9 L1686.0 595.2 L1687.5 595.6 L1689.0 597.1 L1690.5 597.4 L1692.0 597.9 L1693.5 599.0 L1695.0 600.5 L1696.5 601.0 L1698.0 602.8 L1699.5 603.9 L1701.0 605.5 L1702.5 607.6 L1704.0 609.1 L1705.5 610.3 L1707.0 611.8 L1708.5 613.2 L1710.0 614.8 L1711.5 615.2 L1713.0 615.1 L1714.5 614.9 L1716.0 615.4 L1717.5 615.4 L1719.0 615.4 L1720.5 615.0 L1722.0 614.4 L1723.5 614.0 L1725.0 614.4 L1726.5 613.8 L1728.0 613.8 L1729.5 612.7 L1731.0 613.0 L1732.5 611.9 L1734.0 611.8 L1735.5 611.0 L1737.0 609.8 L1738.5 608.4 L1740.0 608.4 L1741.5 607.0 L1743.0 606.3 L1744.5 604.6 L1746.0 603.4 L1747.5 602.7 L1749.0 600.9 L1750.5 599.3 L1752.0 598.1 L1753.5 597.0 L1755.0 595.2 L1756.5 594.8 L1758.0 594.0 L1759.5 593.7 L1761.0 592.9 L1762.5 593.2 L1764.0 593.1 L1765.5 593.1 L1767.0 592.6 L1768.5 593.0 L1770.0 592.9 L1771.5 593.4 L1773.0 593.0 L1774.5 594.2 L1776.0 594.8 L1777.5 594.8 L1779.0 595.4 L1780.5 596.0 L1782.0 596.7 L1783.5 597.0 L1785.0 598.8 L1786.5 599.2 L1788.0 600.4 L1789.5 601.8 L1791.0 603.5 L1792.5 605.7 L1794.0 606.4 L1795.5 608.0 L1797.0 610.3 L1798.5 611.3 L1800.0 612.5 L1801.5 613.9 L1803.0 614.2 L1804.5 614.1 L1806.0 614.3 L1807.5 613.7 L1809.0 614.4 L1810.5 614.1 L1812.0 613.2 L1813.5 613.0 L1815.0 613.1 L1816.5 612.8 L1818.0 612.2 L1819.5 611.7 L1821.0 611.5 L1822.5 610.7 L1824.0 610.6 L1825.5 610.1 L1827.0 608.6 L1828.5 608.1 L1830.0 607.4 L1831.5 605.8 L1833.0 605.4 L1834.5 604.5 L1836.0 602.8 L1837.5 601.6 L1839.0 600.7 L1840.5 598.9 L1842.0 597.4 L1843.5 596.5 L1845.0 595.1 L1846.5 593.5 L1848.0 592.5 L1849.5 592.0 L1851.0 591.7 L1852.5 591.9 L1854.0 591.4 L1855.5 591.4 L1857.0 591.2 L1858.5 591.3 L1860.0 590.6 L1861.5 591.2 L1863.0 591.8 L1864.5 592.1 L1866.0 591.8 L1867.5 592.5 L1869.0 593.2 L1870.5 593.5 L1872.0 594.3 L1873.5 594.5 L1875.0 595.7 L1876.5 596.7 L1878.0 597.3 L1879.5 598.8 L1881.0 601.1 L1882.5 602.5 L1884.0 604.2 L1885.5 605.4 L1887.0 607.2 L1888.5 608.9 L1890.0 610.3 L1891.5 610.6 L1893.0 611.9 L1894.5 611.6 L1896.0 612.0 L1897.5 611.5 L1899.0 611.7 L1900.5 612.0 L1902.0 611.5 L1903.5 610.9 L1905.0 610.9" fill="none" stroke="#000090" stroke-width="3.2" stroke-linejoin="round"/>
<path d="M88.5 617.6 L90.0 617.9 L91.5 617.5 L93.0 617.2 L94.5 616.6 L96.0 615.8 L97.5 614.8 L99.0 614.1 L100.5 613.2 L102.0 612.8 L103.5 611.1 L105.0 610.2 L106.5 609.7 L108.0 608.1 L109.5 606.7 L111.0 605.4 L112.5 604.5 L114.0 602.9 L115.5 602.1 L117.0 600.8 L118.5 599.8 L120.0 598.2 L121.5 597.5 L123.0 597.1 L124.5 597.2 L126.0 597.1 L127.5 596.7 L129.0 596.5 L130.5 596.7 L132.0 597.0 L133.5 597.3 L135.0 597.6 L136.5 598.0 L138.0 598.2 L139.5 598.2 L141.0 599.4 L142.5 599.5 L144.0 600.4 L145.5 600.9 L147.0 602.2 L148.5 602.6 L150.0 603.8 L151.5 605.2 L153.0 606.6 L154.5 608.9 L156.0 610.2 L157.5 611.4 L159.0 613.1 L160.5 615.4 L162.0 616.4 L163.5 617.3 L165.0 618.5 L166.5 618.5 L168.0 618.8 L169.5 617.9 L171.0 618.2 L172.5 618.5 L174.0 618.3 L175.5 618.2 L177.0 617.1 L178.5 617.1 L180.0 616.6 L181.5 616.4 L183.0 616.8 L184.5 615.9 L186.0 615.7 L187.5 614.5 L189.0 614.3 L190.5 613.1 L192.0 612.0 L193.5 611.6 L195.0 610.8 L196.5 608.9 L198.0 608.3 L199.5 607.2 L201.0 605.6 L202.5 604.4 L204.0 602.7 L205.5 601.4 L207.0 600.1 L208.5 599.3 L210.0 598.3 L211.5 597.1 L213.0 596.4 L214.5 596.4 L216.0 596.4 L217.5 595.7 L219.0 595.8 L220.5 595.6 L222.0 596.3 L223.5 596.2 L225.0 595.9 L226.5 596.2 L228.0 596.9 L229.5 597.5 L231.0 598.1 L232.5 598.1 L234.0 598.8 L235.5 600.0 L237.0 600.5 L238.5 601.3 L240.0 602.3 L241.5 604.2 L243.0 605.0 L244.5 606.8 L246.0 608.2 L247.5 609.8 L249.0 611.8 L250.5 613.6 L252.0 614.5 L253.5 615.8 L255.0 617.3 L256.5 617.2 L258.0 617.0 L259.5 617.9 L261.0 617.4 L262.5 617.8 L264.0 617.2 L265.5 617.5 L267.0 616.9 L268.5 616.3 L270.0 615.9 L271.5 616.2 L273.0 615.9 L274.5 615.8 L276.0 614.5 L277.5 614.4 L279.0 613.5 L280.5 612.8 L282.0 611.7 L283.5 610.9 L285.0 610.2 L286.5 609.6 L288.0 607.7 L289.5 607.0 L291.0 606.2 L292.5 605.0 L294.0 602.9 L295.5 601.4 L297.0 600.9 L298.5 599.6 L300.0 598.0 L301.5 596.6 L303.0 596.8 L304.5 595.9 L306.0 596.1 L307.5 595.5 L309.0 595.5 L310.5 594.8 L312.0 595.5 L313.5 595.0 L315.0 595.4 L316.5 596.0 L318.0 596.3 L319.5 596.0 L321.0 596.6 L322.5 597.3 L324.0 598.0 L325.5 598.5 L327.0 598.9 L328.5 599.9 L330.0 601.3 L331.5 602.5 L333.0 603.0 L334.5 605.0 L336.0 606.8 L337.5 607.6 L339.0 610.0 L340.5 610.9 L342.0 613.0 L343.5 614.5 L345.0 615.8 L346.5 616.3 L348.0 616.7 L349.5 616.8 L351.0 616.6 L352.5 616.9 L354.0 616.6 L355.5 616.4 L357.0 615.8 L358.5 616.1 L360.0 615.8 L361.5 615.2 L363.0 615.5 L364.5 615.1 L366.0 614.4 L367.5 613.6 L369.0 613.2 L370.5 612.2 L372.0 611.4 L373.5 610.8 L375.0 609.6 L376.5 609.0 L378.0 608.0 L379.5 606.5 L381.0 606.0 L382.5 604.2 L384.0 603.5 L385.5 602.2 L387.0 600.5 L388.5 598.7 L390.0 597.9 L391.5 596.7 L393.0 596.5 L394.5 595.1 L396.0 595.4 L397.5 595.3 L399.0 594.8 L400.5 594.7 L402.0 594.1 L403.5 594.9 L405.0 594.6 L406.5 595.2 L408.0 595.4 L409.5 595.0 L411.0 596.0 L412.5 596.7 L414.0 596.4 L415.5 597.2 L417.0 598.3 L418.5 598.5 L420.0 600.0 L421.5 600.4 L423.0 602.1 L424.5 602.9 L426.0 604.8 L427.5 606.8 L429.0 607.6 L430.5 609.2 L432.0 611.1 L433.5 612.5 L435.0 613.7 L436.5 615.0 L438.0 615.6 L439.5 616.4 L441.0 616.2 L442.5 616.4 L444.0 615.6 L445.5 616.2 L447.0 615.3 L448.5 615.5 L450.0 615.4 L451.5 614.9 L453.0 615.1 L454.5 614.5 L456.0 614.1 L457.5 614.0 L459.0 612.7 L460.5 612.9 L462.0 611.8 L463.5 610.7 L465.0 610.3 L466.5 608.8 L468.0 608.6 L469.5 607.1 L471.0 605.9 L472.5 605.1 L474.0 603.5 L475.5 601.9 L477.0 601.1 L478.5 599.0 L480.0 598.5 L481.5 596.7 L483.0 596.1 L484.5 595.8 L486.0 594.9 L487.5 594.7 L489.0 594.0 L490.5 593.5 L492.0 593.5 L493.5 593.6 L495.0 594.2 L496.5 594.1 L498.0 594.4 L499.5 595.1 L501.0 594.7 L502.5 595.3 L504.0 596.2 L505.5 596.2 L507.0 596.8 L508.5 597.8 L510.0 598.3 L511.5 599.5 L513.0 600.4 L514.5 602.1 L516.0 603.5 L517.5 604.7 L519.0 606.7 L520.5 608.1 L522.0 609.3 L523.5 611.8 L525.0 612.7 L526.5 614.0 L528.0 614.9 L529.5 615.8 L531.0 616.1 L532.5 616.0 L534.0 615.6 L535.5 615.4 L537.0 615.0 L538.5 615.5 L540.0 615.2 L541.5 614.7 L543.0 614.7 L544.5 614.3 L546.0 614.4 L547.5 613.8 L549.0 612.9 L550.5 612.9 L552.0 611.4 L553.5 611.1 L555.0 610.1 L556.5 609.1 L558.0 607.9 L559.5 607.7 L561.0 605.9 L562.5 605.3 L564.0 604.6 L565.5 602.5 L567.0 601.1 L568.5 600.2 L570.0 598.7 L571.5 597.6 L573.0 596.6 L574.5 595.1 L576.0 594.6 L577.5 594.2 L579.0 593.6 L580.5 594.2 L582.0 593.9 L583.5 593.8 L585.0 593.2 L586.5 594.1 L588.0 594.2 L589.5 594.2 L591.0 594.8 L592.5 594.9 L594.0 595.1 L595.5 595.6 L597.0 596.3 L598.5 596.7 L600.0 597.8 L601.5 599.0 L603.0 599.9 L604.5 601.2 L606.0 602.4 L607.5 603.5 L609.0 605.3 L610.5 606.8 L612.0 608.7 L613.5 610.0 L615.0 611.4 L616.5 613.4 L618.0 614.9 L619.5 614.9 L621.0 615.8 L622.5 614.9 L624.0 615.1 L625.5 615.1 L627.0 615.5 L628.5 615.6 L630.0 615.2 L631.5 614.5 L633.0 614.8 L634.5 614.0 L636.0 613.6 L637.5 614.0 L639.0 613.3 L640.5 612.8 L642.0 612.1 L643.5 611.7 L645.0 610.4 L646.5 609.9 L648.0 608.8 L649.5 607.9 L651.0 606.5 L652.5 605.7 L654.0 604.4 L655.5 602.9 L657.0 601.5 L658.5 600.5 L660.0 598.5 L661.5 598.0 L663.0 596.0 L664.5 594.8 L666.0 594.1 L667.5 594.4 L669.0 593.4 L670.5 592.9 L672.0 592.5 L673.5 592.4 L675.0 593.0 L676.5 593.0 L678.0 593.2 L679.5 593.4 L681.0 593.0 L682.5 593.8 L684.0 594.0 L685.5 595.0 L687.0 595.5 L688.5 596.2 L690.0 596.0 L691.5 597.5 L693.0 598.4 L694.5 599.4 L696.0 599.8 L697.5 601.3 L699.0 602.8 L700.5 604.2 L702.0 606.6 L703.5 608.1 L705.0 609.5 L706.5 611.3 L708.0 612.6 L709.5 613.3 L711.0 613.6 L712.5 613.7 L714.0 614.3 L715.5 613.7 L717.0 613.8 L718.5 613.8 L720.0 613.2 L721.5 613.2 L723.0 612.9 L724.5 613.1 L726.0 612.4 L727.5 612.0 L729.0 612.3 L730.5 611.3 L732.0 611.1 L733.5 610.2 L735.0 608.8 L736.5 608.4 L738.0 607.5 L739.5 606.9 L741.0 605.5 L742.5 604.8 L744.0 603.5 L745.5 602.0 L747.0 601.4 L748.5 599.2 L750.0 598.6 L751.5 596.5 L753.0 595.0 L754.5 594.0 L756.0 593.6 L757.5 593.1 L759.0 591.7 L760.5 591.8 L762.0 591.5 L763.5 591.6 L765.0 590.9 L766.5 591.2 L768.0 591.2 L769.5 591.8 L771.0 591.4 L772.5 592.4 L774.0 592.1 L775.5 592.5 L777.0 593.4 L778.5 593.8 L780.0 594.0 L781.5 595.2 L783.0 595.4 L784.5 597.0 L786.0 598.0 L787.5 599.4 L789.0 600.7 L790.5 602.0 L792.0 603.6 L793.5 605.1 L795.0 607.1 L796.5 608.0 L798.0 610.3 L799.5 610.8 L801.0 611.9 L802.5 612.2 L804.0 612.8 L805.5 612.4 L807.0 612.3 L808.5 612.7 L810.0 611.9 L811.5 611.9 L813.0 611.8 L814.5 611.7 L816.0 611.5 L817.5 611.0 L819.0 610.4 L820.5 610.0 L822.0 609.3 L823.5 609.4 L825.0 608.5 L826.5 607.8 L828.0 606.4 L829.5 605.7 L831.0 605.1 L832.5 603.9 L834.0 602.4 L835.5 601.6 L837.0 600.9 L838.5 598.9 L840.0 597.5 L841.5 596.2 L843.0 595.2 L844.5 594.1 L846.0 592.3 L847.5 591.4 L849.0 590.9 L850.5 590.6 L852.0 590.5 L853.5 589.8 L855.0 589.9 L856.5 589.7 L858.0 590.5 L859.5 590.4 L861.0 589.9 L862.5 591.0 L864.0 590.5 L865.5 591.2 L867.0 592.3 L868.5 592.6 L870.0 593.1 L871.5 593.5 L873.0 594.0 L874.5 595.2 L876.0 595.7 L877.5 596.9 L879.0 598.5 L880.5 599.6 L882.0 601.6 L883.5 603.5 L885.0 604.9 L886.5 606.4 L888.0 608.2 L889.5 609.5 L891.0 610.4 L892.5 611.5 L894.0 611.5 L895.5 611.7 L897.0 611.9 L898.5 611.4 L900.0 611.5 L901.5 611.5 L903.0 610.9 L904.5 610.5 L906.0 610.7 L907.5 610.6 L909.0 610.2 L910.5 609.8 L912.0 609.5 L913.5 608.7 L915.0 608.1 L916.5 607.1 L918.0 606.2 L919.5 605.6 L921.0 604.2 L922.5 603.5 L924.0 602.9 L925.5 601.7 L927.0 600.5 L928.5 598.9 L930.0 597.7 L931.5 596.4 L933.0 595.1 L934.5 593.6 L936.0 592.6 L937.5 591.8 L939.0 590.3 L940.5 590.3 L942.0 590.1 L943.5 589.4 L945.0 589.2 L946.5 589.6 L948.0 588.7 L949.5 589.3 L951.0 589.0 L952.5 589.8 L954.0 590.3 L955.5 590.2 L957.0 590.2 L958.5 591.2 L960.0 591.7 L961.5 592.5 L963.0 593.0 L964.5 593.8 L966.0 594.9 L967.5 595.6 L969.0 596.7 L970.5 598.7 L972.0 599.5 L973.5 601.6 L975.0 602.8 L976.5 604.7 L978.0 605.8 L979.5 608.2 L981.0 609.0 L982.5 609.7 L984.0 610.4 L985.5 610.6 L987.0 610.2 L988.5 610.6 L990.0 610.5 L991.5 610.7 L993.0 610.2 L994.5 609.8 L996.0 609.5 L997.5 609.8 L999.0 609.7 L1000.5 608.9 L1002.0 608.2 L1003.5 608.3 L1005.0 607.3 L1006.5 606.4 L1008.0 605.6 L1009.5 605.4 L1011.0 604.5 L1012.5 603.4 L1014.0 602.2 L1015.5 601.3 L1017.0 599.9 L1018.5 599.4 L1020.0 597.5 L1021.5 596.4 L1023.0 595.2 L1024.5 593.8 L1026.0 592.1 L1027.5 590.8 L1029.0 590.1 L1030.5 589.0 L1032.0 589.3 L1033.5 588.5 L1035.0 588.7 L1036.5 587.9 L1038.0 587.9 L1039.5 587.8 L1041.0 588.1 L1042.5 588.0 L1044.0 588.0 L1045.5 589.0 L1047.0 588.9 L1048.5 589.4 L1050.0 590.0 L1051.5 590.7 L1053.0 591.3 L1054.5 592.2 L1056.0 593.0 L1057.5 593.6 L1059.0 595.2 L1060.5 596.5 L1062.0 597.2 L1063.5 599.5 L1065.0 601.1 L1066.5 602.5 L1068.0 603.5 L1069.5 605.8 L1071.0 607.2 L1072.5 607.8 L1074.0 608.6 L1075.5 609.8 L1077.0 609.5 L1078.5 609.1 L1080.0 608.9 L1081.5 608.9 L1083.0 608.8 L1084.5 609.2 L1086.0 608.5 L1087.5 608.0 L1089.0 608.5 L1090.5 608.1 L1092.0 607.1 L1093.5 607.4 L1095.0 606.6 L1096.5 606.1 L1098.0 605.3 L1099.5 604.7 L1101.0 603.8 L1102.5 602.9 L1104.0 601.3 L1105.5 600.7 L1107.0 599.5 L1108.5 598.6 L1110.0 597.1 L1111.5 596.2 L1113.0 594.5 L1114.5 592.8 L1116.0 591.4 L1117.5 590.0 L1119.0 589.3 L1120.5 588.0 L1122.0 587.8 L1123.5 587.1 L1125.0 587.2 L1126.5 586.9 L1128.0 586.8 L1129.5 587.1 L1131.0 586.3 L1132.5 587.2 L1134.0 587.0 L1135.5 587.4 L1137.0 587.8 L1138.5 588.3 L1140.0 588.4 L1141.5 589.0 L1143.0 590.1 L1144.5 589.8 L1146.0 591.1 L1147.5 592.0 L1149.0 592.3 L1150.5 594.1 L1152.0 595.5 L1153.5 597.3 L1155.0 598.3 L1156.5 600.4 L1158.0 601.5 L1159.5 603.1 L1161.0 605.1 L1162.5 605.7 L1164.0 607.6 L1165.5 608.1 L1167.0 607.9 L1168.5 608.4 L1170.0 607.9 L1171.5 608.0 L1173.0 608.0 L1174.5 608.1 L1176.0 607.3 L1177.5 607.3 L1179.0 607.0 L1180.5 606.9 L1182.0 606.9 L1183.5 606.0 L1185.0 606.1 L1186.5 605.1 L1188.0 604.5 L1189.5 603.6 L1191.0 603.0 L1192.5 602.6 L1194.0 601.4 L1195.5 600.6 L1197.0 599.1 L1198.5 598.0 L1200.0 596.9 L1201.5 595.9 L1203.0 594.6 L1204.5 593.4 L1206.0 591.3 L1207.5 590.6 L1209.0 589.6 L1210.5 588.3 L1212.0 587.1 L1213.5 586.8 L1215.0 586.2 L1216.5 586.1 L1218.0 586.6 L1219.5 586.2 L1221.0 586.3 L1222.5 586.5 L1224.0 586.8 L1225.5 586.7 L1227.0 587.0 L1228.5 587.4 L1230.0 587.9 L1231.5 588.4 L1233.0 589.0 L1234.5 589.2 L1236.0 590.3 L1237.5 590.9 L1239.0 592.1 L1240.5 592.5 L1242.0 593.8 L1243.5 595.2 L1245.0 597.5 L1246.5 599.2 L1248.0 600.5 L1249.5 601.8 L1251.0 603.9 L1252.5 605.5 L1254.0 606.6 L1255.5 607.3 L1257.0 607.8 L1258.5 608.0 L1260.0 607.8 L1261.5 608.0 L1263.0 608.2 L1264.5 608.4 L1266.0 607.4 L1267.5 607.7 L1269.0 606.9 L1270.5 606.8 L1272.0 607.2 L1273.5 606.7 L1275.0 606.7 L1276.5 605.8 L1278.0 604.8 L1279.5 604.5 L1281.0 604.0 L1282.5 603.5 L1284.0 602.7 L1285.5 601.3 L1287.0 600.3 L1288.5 599.0 L1290.0 598.5 L1291.5 596.9 L1293.0 595.6 L1294.5 594.1 L1296.0 592.7 L1297.5 592.1 L1299.0 590.3 L1300.5 590.0 L1302.0 588.3 L1303.5 588.5 L1305.0 587.3 L1306.5 586.9 L1308.0 587.4 L1309.5 586.8 L1311.0 587.3 L1312.5 586.8 L1314.0 586.8 L1315.5 587.7 L1317.0 587.9 L1318.5 588.4 L1320.0 588.7 L1321.5 588.6 L1323.0 589.7 L1324.5 590.4 L1326.0 590.8 L1327.5 592.1 L1329.0 592.2 L1330.5 593.9 L1332.0 594.8 L1333.5 595.5 L1335.0 597.0 L1336.5 599.3 L1338.0 601.1 L1339.5 601.9 L1341.0 603.8 L1342.5 605.9 L1344.0 606.9 L1345.5 608.9 L1347.0 609.3 L1348.5 609.2 L1350.0 609.5 L1351.5 609.8 L1353.0 609.7 L1354.5 609.9 L1356.0 609.3 L1357.5 609.8 L1359.0 609.1 L1360.5 609.2 L1362.0 609.0 L1363.5 608.5 L1365.0 608.2 L1366.5 608.2 L1368.0 607.9 L1369.5 607.2 L1371.0 606.3 L1372.5 605.3 L1374.0 604.3 L1375.5 604.3 L1377.0 603.2 L1378.5 602.3 L1380.0 600.8 L1381.5 600.1 L1383.0 599.3 L1384.5 597.9 L1386.0 596.3 L1387.5 594.7 L1389.0 593.5 L1390.5 592.8 L1392.0 591.2 L1393.5 590.8 L1395.0 590.2 L1396.5 590.2 L1398.0 589.9 L1399.5 589.2 L1401.0 588.8 L1402.5 589.1 L1404.0 589.4 L1405.5 589.8 L1407.0 590.2 L1408.5 590.6 L1410.0 590.2 L1411.5 591.4 L1413.0 592.0 L1414.5 592.7 L1416.0 593.0 L1417.5 593.4 L1419.0 594.8 L1420.5 595.7 L1422.0 596.6 L1423.5 598.1 L1425.0 599.0 L1426.5 600.3 L1428.0 602.4 L1429.5 604.3 L1431.0 605.3 L1432.5 607.5 L1434.0 609.4 L1435.5 610.2 L1437.0 611.8 L1438.5 612.4 L1440.0 612.4 L1441.5 612.2 L1443.0 612.3 L1444.5 612.8 L1446.0 612.8 L1447.5 612.4 L1449.0 611.8 L1450.5 612.3 L1452.0 612.1 L1453.5 611.3 L1455.0 611.4 L1456.5 611.4 L1458.0 611.0 L1459.5 610.1 L1461.0 609.5 L1462.5 608.9 L1464.0 607.7 L1465.5 606.9 L1467.0 606.0 L1468.5 605.6 L1470.0 604.3 L1471.5 603.5 L1473.0 602.2 L1474.5 601.1 L1476.0 599.4 L1477.5 598.0 L1479.0 597.6 L1480.5 595.7 L1482.0 594.3 L1483.5 593.9 L1485.0 593.4 L1486.5 592.4 L1488.0 592.5 L1489.5 592.0 L1491.0 592.1 L1492.5 591.5 L1494.0 591.6 L1495.5 592.7 L1497.0 592.8 L1498.5 592.7 L1500.0 593.1 L1501.5 593.2 L1503.0 594.2 L1504.5 594.5 L1506.0 595.6 L1507.5 596.1 L1509.0 596.9 L1510.5 597.9 L1512.0 598.1 L1513.5 599.0 L1515.0 600.5 L1516.5 602.0 L1518.0 603.5 L1519.5 605.1 L1521.0 607.2 L1522.5 609.2 L1524.0 610.5 L1525.5 612.6 L1527.0 614.0 L1528.5 614.1 L1530.0 615.0 L1531.5 614.9 L1533.0 614.6 L1534.5 615.5 L1536.0 614.8 L1537.5 615.1 L1539.0 615.0 L1540.5 615.1 L1542.0 614.6 L1543.5 614.1 L1545.0 613.9 L1546.5 613.3 L1548.0 613.7 L1549.5 613.2 L1551.0 611.9 L1552.5 611.0 L1554.0 610.5 L1555.5 609.8 L1557.0 609.4 L1558.5 608.5 L1560.0 607.4 L1561.5 605.6 L1563.0 605.3 L1564.5 604.1 L1566.0 602.7 L1567.5 601.7 L1569.0 599.4 L1570.5 598.1 L1572.0 597.5 L1573.5 596.6 L1575.0 595.4 L1576.5 594.5 L1578.0 594.4 L1579.5 594.2 L1581.0 593.3 L1582.5 593.4 L1584.0 593.3 L1585.5 593.3 L1587.0 593.8 L1588.5 593.6 L1590.0 594.0 L1591.5 594.2 L1593.0 595.1 L1594.5 595.0 L1596.0 596.3 L1597.5 596.3 L1599.0 596.8 L1600.5 598.5 L1602.0 598.6 L1603.5 600.3 L1605.0 601.4 L1606.5 602.8 L1608.0 603.6 L1609.5 605.5 L1611.0 606.7 L1612.5 609.1 L1614.0 610.6 L1615.5 612.1 L1617.0 613.5 L1618.5 614.6 L1620.0 615.8 L1621.5 615.7 L1623.0 615.8 L1624.5 615.3 L1626.0 615.4 L1627.5 615.2 L1629.0 615.7 L1630.5 615.4 L1632.0 614.7 L1633.5 615.2 L1635.0 614.3 L1636.5 614.2 L1638.0 613.5 L1639.5 613.2 L1641.0 613.3 L1642.5 612.1 L1644.0 611.2 L1645.5 610.8 L1647.0 609.7 L1648.5 609.4 L1650.0 607.6 L1651.5 607.5 L1653.0 605.5 L1654.5 605.2 L1656.0 603.8 L1657.5 602.0 L1659.0 600.9 L1660.5 599.3 L1662.0 597.9 L1663.5 596.6 L1665.0 595.7 L1666.5 595.6 L1668.0 595.1 L1669.5 594.7 L1671.0 593.5 L1672.5 593.5 L1674.0 594.0 L1675.5 593.1 L1677.0 593.9 L1678.5 593.6 L1680.0 594.5 L1681.5 593.8 L1683.0 594.9 L1684.5 594.9 L1686.0 595.2 L1687.5 595.6 L1689.0 597.1 L1690.5 597.4 L1692.0 597.9 L1693.5 599.0 L1695.0 600.5 L1696.5 601.0 L1698.0 602.8 L1699.5 603.9 L1701.0 605.5 L1702.5 607.6 L1704.0 609.1 L1705.5 610.3 L1707.0 611.8 L1708.5 613.2 L1710.0 614.8 L1711.5 615.2 L1713.0 615.1 L1714.5 614.9 L1716.0 615.4 L1717.5 615.4 L1719.0 615.4 L1720.5 615.0 L1722.0 614.4 L1723.5 614.0 L1725.0 614.4 L1726.5 613.8 L1728.0 613.8 L1729.5 612.7 L1731.0 613.0 L1732.5 611.9 L1734.0 611.8 L1735.5 611.0 L1737.0 609.8 L1738.5 608.4 L1740.0 608.4 L1741.5 607.0 L1743.0 606.3 L1744.5 604.6 L1746.0 603.4 L1747.5 602.7 L1749.0 600.9 L1750.5 599.3 L1752.0 598.1 L1753.5 597.0 L1755.0 595.2 L1756.5 594.8 L1758.0 594.0 L1759.5 593.7 L1761.0 592.9 L1762.5 593.2 L1764.0 593.1 L1765.5 593.1 L1767.0 592.6 L1768.5 593.0 L1770.0 592.9 L1771.5 593.4 L1773.0 593.0 L1774.5 594.2 L1776.0 594.8 L1777.5 594.8 L1779.0 595.4 L1780.5 596.0 L1782.0 596.7 L1783.5 597.0 L1785.0 598.8 L1786.5 599.2 L1788.0 600.4 L1789.5 601.8 L1791.0 603.5 L1792.5 605.7 L1794.0 606.4 L1795.5 608.0 L1797.0 610.3 L1798.5 611.3 L1800.0 612.5 L1801.5 613.9 L1803.0 614.2 L1804.5 614.1 L1806.0 614.3 L1807.5 613.7 L1809.0 614.4 L1810.5 614.1 L1812.0 613.2 L1813.5 613.0 L1815.0 613.1 L1816.5 612.8 L1818.0 612.2 L1819.5 611.7 L1821.0 611.5 L1822.5 610.7 L1824.0 610.6 L1825.5 610.1 L1827.0 608.6 L1828.5 608.1 L1830.0 607.4 L1831.5 605.8 L1833.0 605.4 L1834.5 604.5 L1836.0 602.8 L1837.5 601.6 L1839.0 600.7 L1840.5 598.9 L1842.0 597.4 L1843.5 596.5 L1845.0 595.1 L1846.5 593.5 L1848.0 592.5 L1849.5 592.0 L1851.0 591.7 L1852.5 591.9 L1854.0 591.4 L1855.5 591.4 L1857.0 591.2 L1858.5 591.3 L1860.0 590.6 L1861.5 591.2 L1863.0 591.8 L1864.5 592.1 L1866.0 591.8 L1867.5 592.5 L1869.0 593.2 L1870.5 593.5 L1872.0 594.3 L1873.5 594.5 L1875.0 595.7 L1876.5 596.7 L1878.0 597.3 L1879.5 598.8 L1881.0 601.1 L1882.5 602.5 L1884.0 604.2 L1885.5 605.4 L1887.0 607.2 L1888.5 608.9 L1890.0 610.3 L1891.5 610.6 L1893.0 611.9 L1894.5 611.6 L1896.0 612.0 L1897.5 611.5 L1899.0 611.7 L1900.5 612.0 L1902.0 611.5 L1903.5 610.9 L1905.0 610.9" fill="none" stroke="#0000ff" stroke-width="1.6" stroke-linejoin="round"/>
<path d="M90.5 616.5 V613.4 M93.0 615.9 V613.2 M94.9 617.2 V620.3 M98.2 613.6 V611.2 M101.6 611.7 V609.7 M103.6 610.5 V608.1 M106.1 608.8 V606.8 M109.5 608.2 V610.8 M113.0 605.0 V607.1 M117.0 599.4 V596.9 M120.6 597.2 V595.0 M122.9 596.5 V594.0 M125.8 597.9 V599.8 M128.5 597.7 V599.9 M132.0 595.9 V593.7 M136.9 596.8 V593.9 M139.0 597.4 V594.4 M142.0 598.5 V596.2 M145.1 601.9 V603.8 M147.4 603.1 V606.0 M149.4 602.5 V600.2 M153.3 608.2 V611.2 M157.6 612.7 V615.6 M161.7 617.1 V619.6 M166.0 619.3 V622.4 M167.9 619.3 V621.1 M172.1 619.2 V621.7 M177.0 618.5 V620.9 M181.2 617.7 V620.4 M184.0 615.0 V612.6 M188.1 613.4 V611.0 M191.5 611.5 V609.3 M195.8 610.8 V613.3 M198.8 606.6 V604.4 M200.8 607.0 V609.6 M202.6 605.4 V607.6 M207.1 601.3 V604.4 M209.3 597.6 V594.5 M210.8 596.7 V594.1 M214.1 597.7 V600.5 M217.5 597.1 V599.6 M220.8 597.0 V599.3 M223.5 597.2 V599.5 M228.4 598.1 V600.6 M230.2 596.7 V594.3 M233.7 600.0 V603.0 M238.5 600.5 V598.1 M242.2 605.4 V607.7 M245.6 608.9 V610.9 M248.2 611.5 V614.5 M251.5 613.1 V610.1 M255.4 618.2 V621.4 M260.0 616.5 V614.5 M262.5 618.4 V620.9 M264.7 616.3 V613.6 M268.3 615.7 V612.5 M272.0 615.0 V612.6 M276.3 613.8 V611.0 M277.8 613.2 V610.2 M281.3 613.4 V615.5 M284.6 611.4 V613.6 M288.4 608.9 V612.1 M291.9 604.1 V602.2 M293.9 604.3 V606.2 M295.8 600.6 V598.0 M300.1 598.9 V601.8 M301.9 595.9 V593.0 M304.5 597.0 V599.3 M306.6 594.6 V592.6 M311.2 596.2 V598.4 M314.3 594.4 V592.5 M318.9 597.2 V600.4 M322.0 598.2 V600.3 M323.6 598.8 V601.8 M326.2 599.9 V602.9 M328.8 601.3 V604.4 M332.0 603.6 V605.7 M334.9 606.4 V608.5 M337.5 609.1 V611.6 M341.8 611.6 V609.6 M344.5 614.3 V611.2 M347.0 617.6 V619.6 M350.4 615.7 V613.3 M352.1 615.7 V612.7 M354.9 615.6 V613.5 M357.3 615.2 V613.4 M361.2 614.6 V612.5 M365.1 613.7 V611.5 M369.6 612.0 V609.6 M374.0 611.6 V613.6 M376.7 609.9 V612.2 M381.6 604.4 V601.3 M384.8 601.5 V599.1 M386.8 601.7 V603.9 M391.5 597.9 V600.2 M393.8 596.7 V598.8 M398.4 593.6 V591.1 M401.8 593.4 V590.5 M404.6 595.5 V598.1 M407.2 593.9 V591.9 M409.3 596.3 V598.5 M413.1 595.5 V592.9 M415.9 598.6 V600.8 M417.6 597.4 V595.2 M419.6 600.4 V602.6 M422.5 602.4 V605.3 M427.1 606.9 V608.9 M429.5 607.4 V604.7 M433.4 611.6 V609.2 M437.2 616.7 V618.8 M441.6 615.0 V612.3 M443.8 615.0 V611.9 M447.8 616.6 V618.5 M449.5 614.3 V612.3 M452.0 613.9 V612.1 M454.6 615.4 V617.4 M459.1 614.0 V616.8 M461.5 610.9 V608.2 M464.2 609.5 V606.5 M468.4 606.8 V604.9 M472.9 605.5 V607.4 M475.2 601.5 V598.6 M477.5 601.4 V604.3 M479.3 599.8 V602.1 M483.4 596.8 V599.0 M485.2 596.0 V598.4 M490.0 595.1 V597.9 M494.4 595.0 V597.4 M496.1 595.2 V597.6 M499.4 595.7 V597.6 M503.5 594.9 V592.1 M507.8 596.6 V594.1 M512.7 601.5 V604.1 M515.1 601.6 V599.3 M518.1 604.6 V602.4 M520.0 608.7 V611.4 M522.4 609.1 V606.6 M525.4 614.4 V616.7 M528.0 616.3 V618.3 M531.4 614.7 V611.7 M534.9 616.7 V618.7 M538.7 616.3 V618.8 M542.9 615.6 V617.6 M545.4 613.1 V611.0 M547.1 612.7 V610.6 M551.1 611.3 V609.3 M553.7 610.0 V607.7 M555.8 608.8 V607.0 M560.7 607.5 V609.5 M564.8 604.5 V607.1 M566.6 600.8 V598.4 M568.8 600.8 V602.6 M573.5 596.9 V599.6 M578.3 595.2 V597.4 M580.7 592.8 V591.0 M584.9 594.7 V596.9 M587.0 594.8 V597.8 M591.8 593.7 V590.8 M596.2 597.2 V599.5 M598.3 598.1 V600.4 M601.1 599.5 V601.8 M605.5 600.7 V598.9 M609.0 606.3 V609.2 M613.0 610.4 V613.5 M616.2 611.9 V609.9 M618.7 615.9 V617.8 M622.7 614.4 V612.0 M627.5 614.3 V612.4 M630.6 613.9 V611.1 M632.1 615.6 V618.6 M636.4 612.8 V610.6 M640.2 613.7 V616.1 M642.9 610.5 V607.8 M647.2 610.1 V612.1 M649.8 606.4 V603.8 M652.5 604.5 V602.6 M655.1 602.4 V599.3 M659.8 600.1 V603.3 M664.7 596.2 V599.1 M666.4 595.3 V598.0 M668.9 594.6 V597.7 M672.1 594.0 V596.2 M674.8 593.8 V595.6 M677.0 593.9 V596.3 M678.8 594.1 V596.4 M682.3 592.7 V590.1 M685.8 593.8 V591.8 M687.9 596.5 V599.1 M689.8 597.3 V599.5 M691.6 598.2 V600.4 M694.8 600.3 V602.4 M698.4 601.5 V599.0 M701.9 605.1 V602.8 M703.7 606.9 V603.9 M707.1 612.6 V615.5 M709.0 614.2 V617.0 M710.9 615.0 V617.3 M713.0 615.0 V617.6 M717.2 612.9 V610.0 M718.9 612.8 V610.5 M720.4 614.6 V616.7 M723.0 614.1 V616.5 M727.6 613.2 V616.2 M731.1 612.1 V615.2 M733.1 611.2 V613.5 M737.3 609.0 V611.9 M739.2 605.8 V603.0 M744.1 604.4 V606.3 M747.7 599.4 V596.8 M752.0 595.4 V592.3 M755.8 592.4 V590.3 M758.9 593.2 V595.8 M760.8 590.8 V588.8 M765.1 590.2 V587.6 M767.6 592.3 V594.6 M769.6 592.5 V595.0 M773.5 593.2 V596.3 M775.1 591.6 V589.6 M778.3 594.7 V597.7 M780.0 593.4 V590.4 M783.9 595.4 V592.9 M785.9 598.7 V601.1 M790.5 603.1 V605.0 M793.1 603.8 V600.7 M796.7 607.6 V605.5 M799.4 610.2 V607.6 M802.3 611.4 V609.6 M805.8 611.4 V609.6 M808.9 613.3 V615.1 M810.9 613.1 V615.2 M813.4 612.7 V614.8 M816.9 612.0 V615.2 M821.9 608.7 V606.1 M826.1 608.8 V611.7 M829.8 606.6 V608.9 M832.3 605.0 V608.0 M837.0 601.4 V603.7 M841.2 597.6 V600.1 M844.9 592.4 V589.8 M847.9 590.6 V588.3 M850.5 591.8 V594.2 M853.3 589.2 V587.1 M856.0 589.0 V587.2 M860.6 589.3 V586.9 M864.0 589.9 V587.8 M865.8 590.4 V588.1 M869.8 593.8 V596.9 M872.5 595.0 V597.6 M874.3 594.0 V591.4 M879.2 597.8 V594.9 M882.2 602.9 V604.8 M885.4 606.2 V608.4 M887.8 606.9 V604.8 M890.3 611.2 V613.3 M893.2 610.5 V607.9 M897.7 612.5 V614.6 M901.8 612.2 V614.9 M903.5 611.9 V615.0 M906.2 609.5 V607.4 M909.6 610.8 V613.5 M914.4 607.2 V605.0 M918.5 607.1 V609.5 M922.3 602.7 V600.8 M925.3 600.7 V598.0 M928.0 598.6 V596.0 M930.4 596.5 V594.6 M935.1 594.2 V597.3 M936.8 592.9 V595.7 M939.5 589.5 V587.5 M941.5 590.9 V592.8 M945.8 588.2 V585.6 M949.4 590.2 V592.9 M953.0 588.6 V585.8 M955.4 591.1 V594.0 M959.6 590.5 V587.6 M964.5 592.7 V590.5 M967.8 596.8 V598.8 M969.4 596.2 V593.5 M973.6 600.5 V597.3 M975.9 604.8 V606.7 M977.5 604.5 V602.7 M980.7 609.9 V612.0 M985.5 609.7 V607.7 M987.6 611.7 V614.7 M989.7 609.6 V606.7 M992.1 611.4 V613.9 M995.8 608.8 V605.9 M998.9 608.2 V605.2 M1000.8 609.8 V611.7 M1004.5 606.6 V603.6 M1006.2 607.8 V610.2 M1011.0 605.2 V607.9 M1013.2 601.8 V599.6 M1016.3 599.7 V597.6 M1020.4 598.3 V600.5 M1025.4 591.7 V589.1 M1027.4 592.0 V595.0 M1029.9 590.6 V593.6 M1032.4 587.8 V585.4 M1037.0 587.1 V584.3 M1040.6 587.1 V584.5 M1045.2 587.7 V584.7 M1047.9 590.4 V593.5 M1050.1 591.2 V594.4 M1052.6 590.2 V588.2 M1057.5 592.8 V589.7 M1059.6 596.3 V598.2 M1061.6 598.2 V600.2 M1064.3 601.0 V603.8 M1068.9 605.8 V607.7 M1071.2 608.2 V611.0 M1072.9 609.6 V611.7 M1075.9 608.4 V606.6 M1080.8 608.3 V605.3 M1082.8 608.1 V606.1 M1085.8 607.7 V604.9 M1087.8 609.3 V611.8 M1089.7 607.0 V604.5 M1094.4 605.7 V603.6 M1099.3 605.5 V608.3 M1101.7 602.0 V599.9 M1103.5 600.9 V598.4 M1106.4 600.9 V603.2 M1107.9 599.8 V602.5 M1111.3 597.0 V599.7 M1116.3 592.4 V595.2 M1119.2 588.2 V585.8 M1124.1 586.4 V584.0 M1127.0 585.8 V582.6 M1128.5 587.7 V590.8 M1130.9 587.8 V590.1 M1133.3 586.0 V584.0 M1137.7 588.8 V591.9 M1139.4 589.3 V591.6 M1143.2 590.7 V592.9 M1148.1 591.2 V588.3 M1152.5 596.9 V599.5 M1157.5 600.0 V597.3 M1161.6 604.4 V601.6 M1164.5 608.6 V611.3 M1168.4 607.0 V604.4 M1171.8 607.0 V604.3 M1174.2 608.8 V611.3 M1178.2 608.2 V610.7 M1180.5 605.8 V602.7 M1183.9 607.1 V609.6 M1188.2 603.4 V601.4 M1192.6 601.1 V598.4 M1197.0 600.3 V603.3 M1198.6 597.1 V594.1 M1203.0 593.5 V591.5 M1205.4 591.3 V589.0 M1209.7 589.7 V592.2 M1211.5 586.7 V583.5 M1215.4 585.6 V583.2 M1219.7 587.1 V589.1 M1223.6 585.4 V582.8 M1225.9 585.7 V583.4 M1228.8 586.3 V584.3 M1232.3 587.6 V585.5 M1236.3 589.3 V587.0 M1238.6 592.6 V594.5 M1242.3 595.5 V597.6 M1245.3 598.5 V601.2 M1248.1 599.4 V597.0 M1250.9 604.5 V606.7 M1253.8 607.4 V610.4 M1256.6 606.9 V604.3 M1261.3 607.1 V603.9 M1265.3 606.9 V604.2 M1268.0 606.6 V603.7 M1270.8 608.1 V610.6 M1275.4 607.2 V609.0 M1279.0 603.8 V601.4 M1283.5 601.6 V599.1 M1288.1 598.7 V596.2 M1291.4 598.3 V601.1 M1295.5 592.7 V590.9 M1299.3 591.4 V594.3 M1303.5 587.1 V585.0 M1305.3 588.6 V590.6 M1307.1 588.3 V590.9 M1308.8 588.1 V590.9 M1312.0 586.1 V583.3 M1314.9 588.4 V591.6 M1319.3 589.3 V591.3 M1322.0 590.2 V592.0 M1326.9 590.3 V588.2 M1329.5 591.8 V588.8 M1333.0 596.5 V598.9 M1334.7 596.2 V593.2 M1339.0 602.7 V604.9 M1341.2 603.2 V600.6 M1344.0 606.2 V603.7 M1347.5 608.5 V605.6 M1349.7 610.6 V613.2 M1351.4 608.7 V606.1 M1354.3 610.7 V613.0 M1356.8 610.6 V612.8 M1360.8 610.0 V612.7 M1363.9 609.6 V612.0 M1368.4 606.3 V603.9 M1372.2 604.7 V601.7 M1373.9 605.8 V607.8 M1378.7 602.9 V605.8 M1381.9 600.7 V603.4 M1384.4 596.6 V593.6 M1386.4 596.8 V598.9 M1388.3 593.2 V590.3 M1393.1 589.8 V587.0 M1395.5 591.0 V593.8 M1397.6 588.6 V585.9 M1399.2 590.4 V592.6 M1401.5 590.3 V592.6 M1405.0 588.6 V585.5 M1407.6 591.0 V593.1 M1411.9 592.3 V594.6 M1413.5 590.9 V588.2 M1415.8 593.9 V595.8 M1419.0 595.4 V597.8 M1422.8 596.1 V593.1 M1424.8 599.9 V603.1 M1429.5 605.0 V607.2 M1432.3 608.0 V610.5 M1437.0 610.7 V608.2 M1441.5 613.4 V616.0 M1443.3 611.5 V609.3 M1448.0 613.4 V615.5 M1452.7 610.7 V608.1 M1457.6 609.7 V606.6 M1461.4 608.3 V606.0 M1464.5 606.8 V603.9 M1466.6 607.6 V609.8 M1468.3 606.5 V608.4 M1471.8 604.2 V606.8 M1474.9 599.8 V597.2 M1476.7 600.1 V602.1 M1480.2 595.1 V592.7 M1484.1 592.5 V590.4 M1488.9 591.3 V588.3 M1493.4 591.0 V589.0 M1495.2 593.2 V595.2 M1498.5 593.7 V595.7 M1501.6 592.5 V589.9 M1504.9 593.7 V591.6 M1507.8 595.0 V593.0 M1510.1 598.2 V600.7 M1514.8 599.6 V596.5 M1518.0 604.9 V607.5 M1521.9 607.1 V604.2 M1523.9 609.4 V607.6 M1526.8 614.4 V616.6 M1531.4 614.0 V611.4 M1533.7 616.1 V619.0 M1537.7 614.0 V611.8 M1541.3 615.5 V617.4 M1545.0 614.9 V617.9 M1547.7 614.3 V616.8 M1552.4 610.5 V607.4 M1555.3 609.0 V607.1 M1557.7 609.6 V612.3 M1559.7 606.3 V604.3 M1561.9 604.8 V602.5 M1566.8 602.8 V605.7 M1570.0 597.9 V595.0 M1574.7 596.4 V599.1 M1576.9 595.6 V598.5 M1581.1 592.7 V589.9 M1583.9 592.6 V589.4 M1587.7 594.9 V596.9 M1592.1 595.7 V598.8 M1596.2 597.1 V600.1 M1599.8 596.7 V593.7 M1604.0 601.3 V603.5 M1608.9 605.9 V609.0 M1610.8 607.9 V610.8 M1613.2 610.4 V612.5 M1615.4 610.8 V608.7 M1618.6 615.8 V618.6 M1622.6 614.7 V611.8 M1626.9 616.7 V619.8 M1631.3 614.2 V612.3 M1635.0 615.5 V617.8 M1638.6 614.7 V617.6 M1640.1 612.2 V610.4 M1642.0 613.5 V615.9 M1645.7 609.7 V607.4 M1647.9 608.4 V605.4 M1651.6 606.0 V604.0 M1654.0 606.2 V608.6 M1657.8 603.0 V604.9 M1661.7 597.4 V594.4 M1663.9 595.7 V592.5 M1666.6 594.0 V591.0 M1670.3 595.1 V597.4 M1673.5 594.6 V597.1 M1678.5 592.8 V589.8 M1680.5 595.1 V596.9 M1682.7 595.5 V598.0 M1687.0 594.9 V592.6 M1688.8 597.7 V600.7 M1692.1 597.2 V594.1 M1696.8 602.5 V604.4 M1700.5 604.3 V601.1 M1703.2 609.1 V611.8 M1706.0 612.2 V614.9 M1710.7 614.0 V611.7 M1715.6 614.3 V611.3 M1719.5 616.1 V618.5 M1723.6 615.4 V618.2 M1727.8 612.6 V610.4 M1729.8 614.1 V617.1 M1731.8 613.4 V616.0 M1733.4 610.7 V607.8 M1737.2 608.7 V605.9 M1739.7 609.2 V611.6 M1744.6 605.8 V608.7 M1748.5 600.5 V597.4 M1752.5 598.8 V601.0 M1754.5 597.1 V600.1 M1758.8 592.8 V590.8 M1762.1 594.1 V596.1 M1766.2 591.7 V589.5 M1767.9 591.8 V589.4 M1772.8 594.4 V596.5 M1775.4 595.1 V597.2 M1778.0 594.0 V592.0 M1780.4 594.9 V592.6 M1785.3 597.5 V595.5 M1789.9 601.7 V598.7 M1793.7 607.5 V609.7 M1795.7 609.7 V612.1 M1799.2 613.3 V616.1 M1801.6 612.9 V609.8 M1805.0 613.1 V610.4 M1807.4 615.1 V616.9 M1811.8 614.7 V617.0 M1816.6 611.8 V609.6 M1818.3 613.4 V616.2 M1822.2 610.2 V607.3 M1824.1 609.4 V606.7 M1829.0 608.8 V611.5 M1833.2 604.0 V600.9 M1837.3 600.9 V598.5 M1841.6 596.9 V594.8 M1846.1 594.9 V597.5 M1850.0 593.0 V595.0 M1852.7 590.4 V588.0 M1855.9 591.9 V594.7 M1859.4 590.0 V587.4 M1861.9 592.2 V595.1 M1866.3 591.2 V588.4 M1870.5 594.6 V597.7 M1875.1 596.8 V599.8 M1878.9 599.6 V601.6 M1882.9 603.6 V606.2 M1885.3 604.0 V601.4 M1889.7 608.7 V606.6 M1892.0 610.4 V607.6 M1896.9 612.8 V615.1 M1900.9 610.6 V607.6 M1903.5 610.2 V607.5" stroke="#000090" stroke-width="1.1"/>
<path d="M118.8 575.9 V625.0 M209.8 575.6 V625.4 M300.7 575.9 V623.4 M391.7 575.2 V622.8 M482.6 572.9 V623.5 M573.6 572.9 V622.5 M664.5 581.0 V615.1 M755.5 580.0 V613.4 M846.4 578.9 V613.6 M937.4 577.1 V610.9 M1028.3 576.8 V609.8 M1119.3 574.6 V609.4 M1210.2 572.6 V609.2 M1301.2 575.3 V609.8 M1392.1 576.5 V611.8 M1483.1 579.8 V613.8 M1574.0 582.4 V617.5 M1665.0 582.3 V617.5 M1755.9 580.1 V616.8 M1846.9 577.6 V613.9 M164.5 608.3 V628.4 M255.4 608.6 V628.2 M346.4 607.4 V626.6 M437.3 606.1 V626.0 M528.3 606.0 V625.3 M619.2 606.6 V625.6 M710.2 604.7 V623.7 M801.1 603.6 V622.1 M892.1 601.8 V621.9 M983.0 601.8 V621.8 M1074.0 600.6 V620.5 M1164.9 599.6 V618.7 M1255.9 599.2 V617.4 M1346.8 599.7 V618.8 M1437.8 603.8 V623.0 M1528.7 605.9 V624.6 M1619.7 606.1 V625.2 M1710.6 606.2 V626.5 M1801.6 604.5 V623.4 M1892.5 601.9 V621.8" stroke="#000080" stroke-width="1.4"/>
<rect x="94" y="168.9" width="39.0" height="1.5" fill="#000"/>
<path d="M88.5 186 L112.7 172.3" stroke="#000" stroke-width="1"/>
<rect x="94" y="299.5" width="39.0" height="1.5" fill="#000"/>
<path d="M88.5 317 L112.8 303.3" stroke="#000" stroke-width="1"/>
<rect x="94" y="460.6" width="68.8" height="1.5" fill="#000"/>
<path d="M88.5 480 L129 463.5" stroke="#000" stroke-width="1"/>
<rect x="94" y="598.1" width="47.0" height="1.5" fill="#000"/>
<path d="M88.5 614 L118.9 599" stroke="#000" stroke-width="1"/>
<path d="M78 236.5 H88" stroke="#ff0a84" stroke-width="2"/>
<rect x="67.5" y="303.5" width="21" height="14" rx="3" fill="#00e600" stroke="#000" stroke-width="1.3"/>
<path d="M78 500.5 H88" stroke="#aaa000" stroke-width="2"/>
<path d="M78 718.5 H88" stroke="#0000ff" stroke-width="2"/>
<path d="M1906 167.5 H1903.5 V179.0 H1897 L1906 185.5 L1898.5 192.5 H1903.5 V204.0 H1906" fill="none" stroke="#000" stroke-width="1.6"/>
<path d="M1906 298 H1903.5 V309.5 H1897 L1906 316 L1898.5 323 H1903.5 V334.5 H1906" fill="none" stroke="#000" stroke-width="1.6"/>
<path d="M1906 462 H1903.5 V473.5 H1897 L1906 480 L1898.5 487 H1903.5 V498.5 H1906" fill="none" stroke="#000" stroke-width="1.6"/>
<path d="M1906 591 H1903.5 V602.5 H1897 L1906 609 L1898.5 616 H1903.5 V627.5 H1906" fill="none" stroke="#000" stroke-width="1.6"/>
<path d="M1907 212.5 L1915 208 V217 Z" fill="#ff0a8c"/>
<path d="M89 843.5 H83 M86.2 840.3 L83 843.5 L86.2 846.7" fill="none" stroke="#ff0a8c" stroke-width="1.5"/>
<path d="M415 926.5 L418 930 L424.5 923.5" fill="none" stroke="#007a00" stroke-width="3.2"/><path d="M415 926 L418 929.2 L424.5 922.8" fill="none" stroke="#00ff00" stroke-width="2"/>
<path d="M627 926.5 L630 930 L636.5 923.5" fill="none" stroke="#007a00" stroke-width="3.2"/><path d="M627 926 L630 929.2 L636.5 922.8" fill="none" stroke="#00ff00" stroke-width="2"/>
<path d="M839 926.5 L842 930 L848.5 923.5" fill="none" stroke="#007a00" stroke-width="3.2"/><path d="M839 926 L842 929.2 L848.5 922.8" fill="none" stroke="#00ff00" stroke-width="2"/>
<path d="M1051.0 922 L1061.0 932 M1061.0 922 L1051.0 932" stroke="#ffff00" stroke-width="1.6"/><path d="M1051.0 930 H1053.5 V923.5 H1058.5 V930 H1061.0" fill="none" stroke="#000" stroke-width="1.2"/>
<path d="M1263.0 922 L1273.0 932 M1273.0 922 L1263.0 932" stroke="#ffff00" stroke-width="1.6"/><path d="M1263.0 930 H1265.5 V923.5 H1270.5 V930 H1273.0" fill="none" stroke="#000" stroke-width="1.2"/>
<path d="M11.5 1005 V1017.5 M8.2 1014.8 L11.5 1018 L14.8 1014.8 M11.5 1023 V1036 M8.2 1026.2 L11.5 1023 L14.8 1026.2" fill="none" stroke="#e8e8e8" stroke-width="1.0"/>
<path d="M136.5 1005 V1017.5 M133.2 1014.8 L136.5 1018 L139.8 1014.8 M136.5 1023 V1036 M133.2 1026.2 L136.5 1023 L139.8 1026.2" fill="none" stroke="#e8e8e8" stroke-width="1.0"/>
<path d="M261.5 1005 V1017.5 M258.2 1014.8 L261.5 1018 L264.8 1014.8 M261.5 1023 V1036 M258.2 1026.2 L261.5 1023 L264.8 1026.2" fill="none" stroke="#e8e8e8" stroke-width="1.0"/>
<path d="M386.5 1005 V1017.5 M383.2 1014.8 L386.5 1018 L389.8 1014.8 M386.5 1023 V1036 M383.2 1026.2 L386.5 1023 L389.8 1026.2" fill="none" stroke="#e8e8e8" stroke-width="1.0"/>
</svg>
<div class="t" style="left:32.40px;top:14.06px;font-size:16px;color:#ffffff;">File</div>
<div class="t" style="left:106.80px;top:14.06px;font-size:16px;color:#ffffff;">Vertical</div>
<div class="t" style="left:208.90px;top:14.06px;font-size:16px;color:#ffffff;">Timebase</div>
<div class="t" style="left:326.10px;top:14.06px;font-size:16px;color:#ffffff;">Trigger</div>
<div class="t" style="left:423.90px;top:14.06px;font-size:16px;color:#ffffff;">Display</div>
<div class="t" style="left:526.50px;top:14.06px;font-size:16px;color:#ffffff;">Cursors</div>
<div class="t" style="left:631.50px;top:14.06px;font-size:16px;color:#ffffff;">Measure</div>
<div class="t" style="left:742.80px;top:14.06px;font-size:16px;color:#ffffff;">Math</div>
<div class="t" style="left:826.70px;top:14.06px;font-size:16px;color:#ffffff;">Analysis</div>
<div class="t" style="left:934.70px;top:14.06px;font-size:16px;color:#ffffff;">Utilities</div>
<div class="t" style="left:1034.20px;top:14.06px;font-size:16px;color:#ffffff;">Support</div>
<div class="t" style="left:1812.30px;top:17.96px;font-size:16px;color:#ffffff;letter-spacing:-0.2px;">Gesture</div>
<div class="t" style="left:1391.50px;width:1000px;text-align:center;top:12.54px;font-size:10px;color:#ffffff;font-weight:bold;">Undo</div>
<div class="t" style="left:93.30px;top:156.15px;font-size:14px;color:#000000;">OUT1</div>
<div class="t" style="left:93.30px;top:286.75px;font-size:14px;color:#000000;">OUT2</div>
<div class="t" style="left:93.30px;top:447.85px;font-size:14px;color:#000000;">CURRENT</div>
<div class="t" style="left:93.30px;top:585.35px;font-size:14px;color:#000000;">IPROPI</div>
<div class="t" style="left:73.00px;top:224.03px;font-size:10px;color:#ff1090;">C2</div>
<div class="t" style="left:72.80px;top:305.29px;font-size:11px;color:#000000;">C4</div>
<div class="t" style="left:73.00px;top:487.84px;font-size:10px;color:#b0a800;">C1</div>
<div class="t" style="left:73.00px;top:705.83px;font-size:10px;color:#0000ff;">C3</div>
<div class="t" style="left:1885.00px;top:823.62px;font-size:12.5px;color:#000000;font-weight:bold;">C2</div>
<div class="t" style="left:1885.50px;top:823.62px;font-size:12.5px;color:#000000;font-weight:bold;">C3</div>
<div class="t" style="left:-917.00px;width:1000px;text-align:right;top:50.26px;font-size:16px;color:#00f828;letter-spacing:-0.62px;">27.36 V</div>
<div class="t" style="left:-917.00px;width:1000px;text-align:right;top:139.86px;font-size:16px;color:#00f828;letter-spacing:-0.62px;">17.36 V</div>
<div class="t" style="left:-917.00px;width:1000px;text-align:right;top:238.86px;font-size:16px;color:#00f828;letter-spacing:-0.62px;">7.36 V</div>
<div class="t" style="left:-917.00px;width:1000px;text-align:right;top:337.86px;font-size:16px;color:#00f828;letter-spacing:-0.62px;">-2.64 V</div>
<div class="t" style="left:-917.00px;width:1000px;text-align:right;top:437.26px;font-size:16px;color:#00f828;letter-spacing:-0.62px;">-12.64 V</div>
<div class="t" style="left:-917.00px;width:1000px;text-align:right;top:534.86px;font-size:16px;color:#00f828;letter-spacing:-0.62px;">-22.64 V</div>
<div class="t" style="left:-917.00px;width:1000px;text-align:right;top:633.86px;font-size:16px;color:#00f828;letter-spacing:-0.62px;">-32.64 V</div>
<div class="t" style="left:-917.00px;width:1000px;text-align:right;top:732.86px;font-size:16px;color:#00f828;letter-spacing:-0.62px;">-42.64 V</div>
<div class="t" style="left:-917.00px;width:1000px;text-align:right;top:822.16px;font-size:16px;color:#00f828;letter-spacing:-0.62px;">-52.64 V</div>
<div class="t" style="left:88.80px;top:841.76px;font-size:16px;color:#00f828;letter-spacing:-0.62px;">1.999 s</div>
<div class="t" style="left:-229.20px;width:1000px;text-align:center;top:841.76px;font-size:16px;color:#00f828;letter-spacing:-0.62px;">1.9992 s</div>
<div class="t" style="left:-47.20px;width:1000px;text-align:center;top:841.76px;font-size:16px;color:#00f828;letter-spacing:-0.62px;">1.9994 s</div>
<div class="t" style="left:134.80px;width:1000px;text-align:center;top:841.76px;font-size:16px;color:#00f828;letter-spacing:-0.62px;">1.9996 s</div>
<div class="t" style="left:316.80px;width:1000px;text-align:center;top:841.76px;font-size:16px;color:#00f828;letter-spacing:-0.62px;">1.9998 s</div>
<div class="t" style="left:498.80px;width:1000px;text-align:center;top:841.76px;font-size:16px;color:#00f828;letter-spacing:-0.62px;">2 s</div>
<div class="t" style="left:679.80px;width:1000px;text-align:center;top:841.76px;font-size:16px;color:#00f828;letter-spacing:-0.62px;">2.0002 s</div>
<div class="t" style="left:861.80px;width:1000px;text-align:center;top:841.76px;font-size:16px;color:#00f828;letter-spacing:-0.62px;">2.0004 s</div>
<div class="t" style="left:1043.80px;width:1000px;text-align:center;top:841.76px;font-size:16px;color:#00f828;letter-spacing:-0.62px;">2.0006 s</div>
<div class="t" style="left:1225.80px;width:1000px;text-align:center;top:841.76px;font-size:16px;color:#00f828;letter-spacing:-0.62px;">2.0008 s</div>
<div class="t" style="left:906.00px;width:1000px;text-align:right;top:841.76px;font-size:16px;color:#00f828;letter-spacing:-0.62px;">2.001 s</div>
<div class="t" style="left:4.30px;top:880.46px;font-size:16px;color:#000;font-weight:bold;">Measure</div>
<div class="t" style="left:5.20px;top:900.26px;font-size:16px;color:#000;">value</div>
<div class="t" style="left:5.20px;top:920.26px;font-size:16px;color:#000;">status</div>
<div class="t" style="left:-573.50px;width:1000px;text-align:right;top:880.56px;font-size:16px;color:#000;">P1:max(C1)</div>
<div class="t" style="left:-573.50px;width:1000px;text-align:right;top:900.36px;font-size:16px;color:#000;">355 mA</div>
<div class="t" style="left:-361.50px;width:1000px;text-align:right;top:880.56px;font-size:16px;color:#000;">P2:max(C2)</div>
<div class="t" style="left:-361.50px;width:1000px;text-align:right;top:900.36px;font-size:16px;color:#000;">5.26 V</div>
<div class="t" style="left:-149.50px;width:1000px;text-align:right;top:880.56px;font-size:16px;color:#000;">P3:max(C3)</div>
<div class="t" style="left:-149.50px;width:1000px;text-align:right;top:900.36px;font-size:16px;color:#000;">74.7 mV</div>
<div class="t" style="left:62.50px;width:1000px;text-align:right;top:880.56px;font-size:16px;color:#000;">P4:freq(C3)</div>
<div class="t" style="left:62.50px;width:1000px;text-align:right;top:900.36px;font-size:16px;color:#000;">9.99823781 kHz</div>
<div class="t" style="left:274.50px;width:1000px;text-align:right;top:880.56px;font-size:16px;color:#000;">P5:duty(C3)</div>
<div class="t" style="left:274.50px;width:1000px;text-align:right;top:900.36px;font-size:16px;color:#000;">35.670 %</div>
<div class="t" style="left:486.50px;width:1000px;text-align:right;top:880.56px;font-size:16px;color:#000;">P6:lvl@x(C1)</div>
<div class="t" style="left:486.50px;width:1000px;text-align:right;top:900.36px;font-size:16px;color:#000;">---</div>
<div class="t" style="left:698.50px;width:1000px;text-align:right;top:880.56px;font-size:16px;color:#000;">P7:- - -</div>
<div class="t" style="left:910.50px;width:1000px;text-align:right;top:880.56px;font-size:16px;color:#000;">P8:- - -</div>
<div class="t" style="left:7.50px;top:940.06px;font-size:16px;color:#000;">C1</div>
<div class="t" style="left:-417.55px;width:1000px;text-align:center;top:940.45px;font-size:14px;color:#c8c200;">E</div>
<div class="t" style="left:-401.70px;width:1000px;text-align:center;top:940.45px;font-size:14px;color:#c8c200;">B</div>
<div class="t" style="left:-385.05px;width:1000px;text-align:center;top:940.45px;font-size:14px;color:#c8c200;">D</div>
<div class="t" style="left:-875.50px;width:1000px;text-align:right;top:961.46px;font-size:16px;color:#ffffff;">1.00 A/div</div>
<div class="t" style="left:-875.50px;width:1000px;text-align:right;top:979.46px;font-size:16px;color:#ffffff;">-570.0 mA</div>
<div class="t" style="left:-875.50px;width:1000px;text-align:right;top:1001.06px;font-size:16px;color:#ffffff;">188.5 mA</div>
<div class="t" style="left:-875.50px;width:1000px;text-align:right;top:1019.46px;font-size:16px;color:#ffffff;">188.5 mA</div>
<div class="t" style="left:-875.50px;width:1000px;text-align:right;top:1037.46px;font-size:16px;color:#ffffff;">0.0 mA</div>
<div class="t" style="left:6.50px;top:1037.46px;font-size:16px;color:#ffffff;">Δ</div>
<div class="t" style="left:132.50px;top:940.06px;font-size:16px;color:#000;">C2</div>
<div class="t" style="left:-316.70px;width:1000px;text-align:center;top:940.45px;font-size:14px;color:#ff0a84;">ESR</div>
<div class="t" style="left:-275.25px;width:1000px;text-align:center;top:940.45px;font-size:14px;color:#ff0a84;">DC1M</div>
<div class="t" style="left:-750.50px;width:1000px;text-align:right;top:961.46px;font-size:16px;color:#ffffff;">10.0 V/div</div>
<div class="t" style="left:-750.50px;width:1000px;text-align:right;top:979.46px;font-size:16px;color:#ffffff;">21.000 V ofst</div>
<div class="t" style="left:-750.50px;width:1000px;text-align:right;top:1001.06px;font-size:16px;color:#ffffff;">4.964 V</div>
<div class="t" style="left:-750.50px;width:1000px;text-align:right;top:1019.46px;font-size:16px;color:#ffffff;">4.964 V</div>
<div class="t" style="left:-750.50px;width:1000px;text-align:right;top:1037.46px;font-size:16px;color:#ffffff;">0 mV</div>
<div class="t" style="left:131.50px;top:1037.46px;font-size:16px;color:#ffffff;">Δ</div>
<div class="t" style="left:257.50px;top:940.06px;font-size:16px;color:#000;">C3</div>
<div class="t" style="left:-174.50px;width:1000px;text-align:center;top:940.45px;font-size:14px;color:#2020ff;">E</div>
<div class="t" style="left:-158.75px;width:1000px;text-align:center;top:940.45px;font-size:14px;color:#2020ff;">F</div>
<div class="t" style="left:-139.00px;width:1000px;text-align:center;top:940.45px;font-size:14px;color:#2020ff;">D1</div>
<div class="t" style="left:-625.50px;width:1000px;text-align:right;top:961.46px;font-size:16px;color:#ffffff;">50.0 mV/div</div>
<div class="t" style="left:-625.50px;width:1000px;text-align:right;top:979.46px;font-size:16px;color:#ffffff;">-139.000 mV</div>
<div class="t" style="left:-625.50px;width:1000px;text-align:right;top:1001.06px;font-size:16px;color:#ffffff;">54.240 mV</div>
<div class="t" style="left:-625.50px;width:1000px;text-align:right;top:1019.46px;font-size:16px;color:#ffffff;">54.240 mV</div>
<div class="t" style="left:-625.50px;width:1000px;text-align:right;top:1037.46px;font-size:16px;color:#ffffff;">0 μV</div>
<div class="t" style="left:256.50px;top:1037.46px;font-size:16px;color:#ffffff;">Δ</div>
<div class="t" style="left:382.50px;top:940.06px;font-size:16px;color:#000;">C4</div>
<div class="t" style="left:-66.45px;width:1000px;text-align:center;top:940.45px;font-size:14px;color:#00ff00;">ESR</div>
<div class="t" style="left:-24.90px;width:1000px;text-align:center;top:940.45px;font-size:14px;color:#00ff00;">DC1M</div>
<div class="t" style="left:-500.50px;width:1000px;text-align:right;top:961.46px;font-size:16px;color:#ffffff;">10.0 V/div</div>
<div class="t" style="left:-500.50px;width:1000px;text-align:right;top:979.46px;font-size:16px;color:#ffffff;">12.640 V ofst</div>
<div class="t" style="left:-500.50px;width:1000px;text-align:right;top:1001.06px;font-size:16px;color:#ffffff;">176 mV</div>
<div class="t" style="left:-500.50px;width:1000px;text-align:right;top:1019.46px;font-size:16px;color:#ffffff;">176 mV</div>
<div class="t" style="left:-500.50px;width:1000px;text-align:right;top:1037.46px;font-size:16px;color:#ffffff;">0 mV</div>
<div class="t" style="left:381.50px;top:1037.46px;font-size:16px;color:#ffffff;">Δ</div>
<div class="t" style="left:1110.00px;width:1000px;text-align:center;top:941.46px;font-size:16px;color:#000;">HD</div>
<div class="t" style="left:1110.00px;width:1000px;text-align:center;top:970.46px;font-size:16px;color:#fff;">12 Bits</div>
<div class="t" style="left:1651.50px;top:940.46px;font-size:16px;color:#1a1a1a;">Tb</div>
<div class="t" style="left:789.00px;width:1000px;text-align:right;top:940.06px;font-size:16px;color:#1a1a1a;">-2.000000 s</div>
<div class="t" style="left:789.00px;width:1000px;text-align:right;top:961.66px;font-size:16px;color:#fff;">200 μs/div</div>
<div class="t" style="left:1651.00px;top:981.16px;font-size:16px;color:#fff;">20 MS</div>
<div class="t" style="left:789.00px;width:1000px;text-align:right;top:981.16px;font-size:16px;color:#fff;">10 GS/s</div>
<div class="t" style="left:1796.00px;top:940.06px;font-size:16px;color:#1a1a1a;">Trigger</div>
<div class="t" style="left:1371.00px;width:1000px;text-align:center;top:940.45px;font-size:14px;color:#d0d0d0;">C2</div>
<div class="t" style="left:1399.00px;width:1000px;text-align:center;top:940.45px;font-size:14px;color:#d0d0d0;">DC</div>
<div class="t" style="left:1796.00px;top:961.66px;font-size:16px;color:#fff;">Stop</div>
<div class="t" style="left:913.00px;width:1000px;text-align:right;top:961.66px;font-size:16px;color:#fff;">2.4 V</div>
<div class="t" style="left:1796.00px;top:981.16px;font-size:16px;color:#fff;">Edge</div>
<div class="t" style="left:914.00px;width:1000px;text-align:right;top:981.16px;font-size:16px;color:#fff;">Negative</div>
<div class="t" style="left:1581.50px;top:1002.26px;font-size:16px;color:#000;">X1=</div>
<div class="t" style="left:740.00px;width:1000px;text-align:right;top:1002.26px;font-size:16px;color:#000;">2.0009999999 s</div>
<div class="t" style="left:795.00px;width:1000px;text-align:right;top:1002.26px;font-size:16px;color:#000;">ΔX=</div>
<div class="t" style="left:850.50px;width:1000px;text-align:right;top:1002.26px;font-size:16px;color:#000;">0.0 ns</div>
<div class="t" style="left:1581.50px;top:1021.96px;font-size:16px;color:#000;">X2=</div>
<div class="t" style="left:740.00px;width:1000px;text-align:right;top:1021.96px;font-size:16px;color:#000;">2.0009999999 s</div>
<div class="t" style="left:795.00px;width:1000px;text-align:right;top:1021.96px;font-size:16px;color:#000;">1/ΔX=</div>
<div class="t" style="left:850.50px;width:1000px;text-align:right;top:1024.96px;font-size:16px;color:#000;">---</div>
<div class="t" style="left:6.50px;top:1060.79px;font-size:19.5px;color:#0a0a0a;font-weight:bold;transform:scaleX(0.80);transform-origin:0 0;">TELEDYNE</div>
<div class="t" style="left:95.50px;top:1061.39px;font-size:18.8px;color:#3a3a3a;transform:scaleX(0.735);transform-origin:0 0;">LECROY</div>
<div class="t" style="left:904.00px;width:1000px;text-align:right;top:1061.86px;font-size:16px;color:#000;">8/11/2023 5:39:19 PM</div>
</body></html>
